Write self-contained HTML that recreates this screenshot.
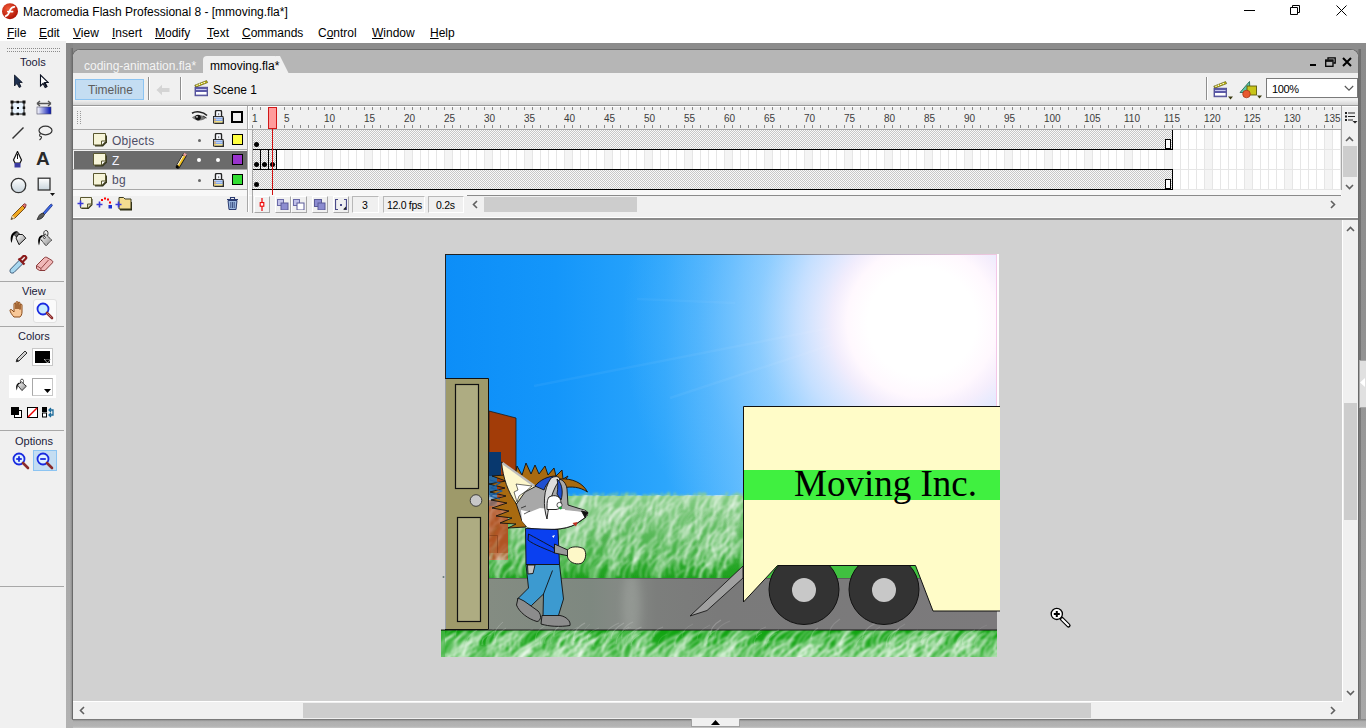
<!DOCTYPE html><html><head><meta charset="utf-8"><style>
*{margin:0;padding:0;box-sizing:border-box}
html,body{width:1366px;height:728px;overflow:hidden}
body{position:relative;background:#fff;font-family:"Liberation Sans",sans-serif;font-size:12px;color:#000}
.a{position:absolute}
.t{position:absolute;white-space:pre;line-height:14px}
.mi{position:absolute;top:26px;white-space:pre;line-height:14px}
.mi u{text-decoration:underline;text-underline-offset:1px}
.rn{position:absolute;top:113px;font-size:10px;line-height:11px;color:#3c3c3c;white-space:pre}
.tk{position:absolute;width:1px;height:3px;background:#8a8a8a}
.hatch{background-color:#fafafa;background-image:repeating-conic-gradient(#c8c8c8 0 25%,transparent 0 50%);background-size:2px 2px}
.sunk{position:absolute;border-top:1px solid #a0a0a0;border-left:1px solid #a0a0a0;border-right:1px solid #fff;border-bottom:1px solid #fff}
.btn{position:absolute;border-top:1px solid #fff;border-left:1px solid #fff;border-right:1px solid #a0a0a0;border-bottom:1px solid #a0a0a0}
</style></head><body>
<svg class="a" style="left:1px;top:2px" width="18" height="18" viewBox="0 0 18 18">
<defs><radialGradient id="fl" cx="40%" cy="35%" r="65%"><stop offset="0" stop-color="#f25b38"/><stop offset="1" stop-color="#b01405"/></radialGradient></defs>
<circle cx="9" cy="9.2" r="8" fill="url(#fl)"/>
<path d="M4.6 14.2 C7.6 13.6 8 10.5 9 8.2 C9.9 6.2 11 5 13.4 4.8 M6.8 9.6 L11.6 9.6" stroke="#fff" stroke-width="1.7" fill="none" stroke-linecap="round"/>
</svg>
<div class="t" style="left:23px;top:5px">Macromedia Flash Professional 8 - [mmoving.fla*]</div>
<div class="a" style="left:1244px;top:10px;width:11px;height:1px;background:#000"></div>
<svg class="a" style="left:1289px;top:4px" width="12" height="12"><path d="M3.5 3.5V1.5H10.5V8.5H8.5M1.5 3.5H8.5V10.5H1.5Z" stroke="#000" fill="none"/></svg>
<svg class="a" style="left:1336px;top:5px" width="11" height="11"><path d="M0.5 0.5L10.5 10.5M10.5 0.5L0.5 10.5" stroke="#000" stroke-width="1"/></svg>
<div class="mi" style="left:7px"><u>F</u>ile</div>
<div class="mi" style="left:39px"><u>E</u>dit</div>
<div class="mi" style="left:73px"><u>V</u>iew</div>
<div class="mi" style="left:112px"><u>I</u>nsert</div>
<div class="mi" style="left:155px"><u>M</u>odify</div>
<div class="mi" style="left:207px"><u>T</u>ext</div>
<div class="mi" style="left:242px"><u>C</u>ommands</div>
<div class="mi" style="left:318px">C<u>o</u>ntrol</div>
<div class="mi" style="left:372px"><u>W</u>indow</div>
<div class="mi" style="left:430px"><u>H</u>elp</div>
<div class="a" style="left:0;top:41px;width:66px;height:687px;background:#f0f0f0"></div>
<div class="a" style="left:7px;top:48px;width:54px;height:1px;background:repeating-linear-gradient(90deg,#8a8a8a 0 1px,transparent 1px 2px)"></div>
<div class="a" style="left:7px;top:51px;width:54px;height:1px;background:repeating-linear-gradient(90deg,#8a8a8a 0 1px,transparent 1px 2px)"></div>
<div class="t" style="left:20px;top:56px;font-size:11px;line-height:12px;color:#1a1a3a">Tools</div>
<svg class="a" style="left:13px;top:74px" width="10" height="15"><path d="M1.5 1V12L4 9.5L6.2 13.5L8 12.6L6 8.5H9.3Z" fill="#1e3050" stroke="#0a1020" stroke-width="0.8"/></svg>
<svg class="a" style="left:39px;top:74px" width="10" height="15"><path d="M1.5 1V12L4 9.5L6.2 13.5L8 12.6L6 8.5H9.3Z" fill="#fff" stroke="#0a1020" stroke-width="1.1"/><path d="M5 8.5L7.5 13" stroke="#0a1020" stroke-width="1.6"/></svg>
<svg class="a" style="left:10px;top:100px" width="16" height="16"><rect x="2" y="2" width="12" height="12" fill="#e8f4ff" stroke="#111" stroke-width="1"/>
<rect x="0.5" y="0.5" width="3" height="3" fill="#111"/><rect x="12.5" y="0.5" width="3" height="3" fill="#111"/><rect x="0.5" y="12.5" width="3" height="3" fill="#111"/><rect x="12.5" y="12.5" width="3" height="3" fill="#111"/>
<rect x="6.5" y="0.8" width="2.5" height="2.5" fill="#111"/><rect x="6.5" y="12.7" width="2.5" height="2.5" fill="#111"/><rect x="0.8" y="6.5" width="2.5" height="2.5" fill="#111"/><rect x="12.7" y="6.5" width="2.5" height="2.5" fill="#111"/>
<rect x="7" y="7" width="2" height="2" fill="#111"/></svg>
<svg class="a" style="left:36px;top:100px" width="16" height="15"><defs><linearGradient id="gt" x1="0" x2="1"><stop offset="0" stop-color="#fff"/><stop offset="1" stop-color="#0010b0"/></linearGradient></defs>
<path d="M1 3.5H15M1 3.5L4 1M1 3.5L4 6M15 3.5L12 1M15 3.5L12 6" stroke="#555" stroke-width="1.4" fill="none"/>
<rect x="1" y="7" width="14" height="7" fill="url(#gt)" stroke="#4a4a6a" stroke-width="0.6"/></svg>
<svg class="a" style="left:11px;top:126px" width="14" height="14"><path d="M1.5 12.5L12.5 1.5" stroke="#333" stroke-width="1.4"/></svg>
<svg class="a" style="left:36px;top:125px" width="17" height="16"><ellipse cx="9.5" cy="5.5" rx="6.5" ry="4.3" stroke="#333" stroke-width="1.2" fill="none"/><path d="M4.5 8.5C3 10 3.5 11.5 5 11.5C6 11.5 5.5 13.5 3.5 15" stroke="#333" stroke-width="1.1" fill="none"/></svg>
<svg class="a" style="left:12px;top:151px" width="11" height="18"><path d="M5.5 0.5L9.5 9L8 12H3L1.5 9Z" fill="#fff" stroke="#111" stroke-width="1.2"/><path d="M5.5 3V8" stroke="#111"/><rect x="2.5" y="12" width="6" height="4.5" fill="#3a3aa0"/></svg>
<div class="a" style="left:36px;top:149px;font:bold 19px/20px 'Liberation Sans',sans-serif;color:#2a2a2a">A</div>
<svg class="a" style="left:10px;top:177px" width="17" height="17"><defs><linearGradient id="ov" x1="0" y1="0" x2="0" y2="1"><stop offset="0" stop-color="#fff"/><stop offset="1" stop-color="#c8d4dc"/></linearGradient></defs><circle cx="8.5" cy="8.5" r="7.2" fill="url(#ov)" stroke="#333" stroke-width="1.3"/></svg>
<svg class="a" style="left:37px;top:177px" width="19" height="21"><rect x="1.2" y="1.2" width="11.8" height="11.8" fill="url(#ov)" stroke="#333" stroke-width="1.3"/><path d="M13 16H18L15.5 19Z" fill="#111"/></svg>
<svg class="a" style="left:9px;top:202px" width="19" height="19"><path d="M3.5 13.5L13.5 3.5L16 6L6 16L2 17.5Z" fill="#f0a820" stroke="#6a4010" stroke-width="0.9"/>
<path d="M13.5 3.5L15 2C16 1.2 17.5 2.5 17 3.5L16 6Z" fill="#e87878" stroke="#6a2020" stroke-width="0.8"/><path d="M2 17.5L3.5 13.5L6 16Z" fill="#f0d8a8"/><path d="M2 17.5L2.8 15.5L4 16.6Z" fill="#222"/></svg>
<svg class="a" style="left:35px;top:202px" width="19" height="19"><path d="M8 11L15.5 2.5C16.5 1.5 18 3 17 4L9.5 12.5Z" fill="#3a6ae8" stroke="#1a2a80" stroke-width="0.8"/>
<path d="M8 11L9.5 12.5L8 15C6 17.5 3 17.5 2 17.5C3 16 3.5 13.5 5.5 12Z" fill="#5a5a5a" stroke="#222" stroke-width="0.8"/></svg>
<svg class="a" style="left:6px;top:226px" width="50" height="24" viewBox="6 226 50 24"><defs><linearGradient id="btl" x1="0" y1="0" x2="1" y2="1"><stop offset="0" stop-color="#fff"/><stop offset="1" stop-color="#8a8a8a"/></linearGradient></defs>
<path d="M11.5 243C10 239 10.5 234 14 232C15.5 231 17 231 17.5 232.5L13.5 235.5C12.5 237.5 12.5 240 11.5 243Z" fill="#000"/>
<path d="M14 234.5L17 231.5L19.5 234L16.5 237Z" fill="#6a6a6a" stroke="#000" stroke-width="0.8"/>
<path d="M16 238L18.5 234.5H22.5L25.8 238.2L19 244.7Z" fill="url(#btl)" stroke="#000" stroke-width="0.9"/>
<path d="M39 245.5C37.5 241 38 237 41 235.5C42 235 43 235 43.5 236L40.5 238.5C40 240.5 39.8 243 39 245.5Z" fill="#000"/>
<path d="M45.2 234L51.8 240L45.9 245.8L40 238.4Z" fill="url(#btl)" stroke="#000" stroke-width="0.9" stroke-dasharray="1.2 0.6"/>
<path d="M44.5 236.5C43 233 44 230.5 46 230.5C48 230.5 48.5 233 47.5 236" stroke="#222" stroke-width="0.9" fill="none"/>
<circle cx="44.4" cy="237.5" r="1" fill="#fff" stroke="#000" stroke-width="0.7"/>
</svg>
<svg class="a" style="left:9px;top:255px" width="19" height="19"><path d="M11 4.5L14.5 8L5 17.5C4 18.3 2.5 18.3 1.5 17.5C0.8 16.5 0.8 15 1.7 14Z" fill="#a8d8f0" stroke="#2a4a6a" stroke-width="0.9"/>
<path d="M10.5 5L14.5 1C15.5 0 18 2.5 17 3.5L13 7.5M9.5 3.5L15.5 9.5" stroke="#8a1a1a" stroke-width="2.2" fill="none"/></svg>
<svg class="a" style="left:35px;top:256px" width="19" height="16"><path d="M1.5 9.5L9 2C10 1 11 1 12 1.5L17 4.5C18 5.2 18 6 17.3 7L10 14.5H4.5L1.5 12.5Z" fill="#f0b8b8" stroke="#8a3a3a" stroke-width="1"/>
<path d="M1.5 9.5L6 12.5L13.5 4" stroke="#8a3a3a" stroke-width="0.9" fill="none"/><path d="M6 12.5V14.5" stroke="#8a3a3a" stroke-width="0.9"/></svg>
<div class="a" style="left:0;top:281px;width:64px;height:1px;background:#a8a8a8"></div>
<div class="a" style="left:0;top:326px;width:64px;height:1px;background:#a8a8a8"></div>
<div class="a" style="left:0;top:430px;width:64px;height:1px;background:#a8a8a8"></div>
<div class="a" style="left:0;top:586px;width:64px;height:1px;background:#a8a8a8"></div>
<div class="t" style="left:22px;top:285px;font-size:11px;line-height:12px;color:#1a1a3a">View</div>
<svg class="a" style="left:9px;top:300px" width="19" height="19"><path d="M5 17C3 15 1.2 12 1 10.5C0.8 9.5 2 9 3 10L5 12V4C5 2.8 7 2.8 7 4V9V2.5C7 1.3 9 1.3 9 2.5V9V3C9 1.8 11 1.8 11 3V9.5V5C11 3.8 13 3.8 13 5V12C13 14.5 12 16 11 17Z" fill="#f8c898" stroke="#8a4a18" stroke-width="1"/></svg>
<div class="a" style="left:33px;top:299px;width:24px;height:24px;background:#fafafa;border:1px solid #e0e0e0;border-radius:3px"></div>
<svg class="a" style="left:36px;top:302px" width="18" height="18"><circle cx="7" cy="7" r="5.5" fill="#c8ecff" stroke="#1a2ae0" stroke-width="1.8"/><path d="M11 11L16 16" stroke="#8a2a2a" stroke-width="2.6" stroke-linecap="round"/><path d="M11.2 11.2L15.5 15.5" stroke="#d89090" stroke-width="0.8"/></svg>
<div class="t" style="left:18px;top:330px;font-size:11px;line-height:12px;color:#1a1a3a">Colors</div>
<svg class="a" style="left:15px;top:349px" width="14" height="14"><path d="M2 10L10 2L12 4L4 12L1.2 12.8Z" fill="#d0d0d0" stroke="#333" stroke-width="1"/><path d="M1.2 12.8L2 10L4 12Z" fill="#222"/></svg>
<div class="a" style="left:32px;top:348px;width:21px;height:18px;background:#fff;border:1px solid #c8c8c8"></div>
<div class="a" style="left:35px;top:351px;width:15px;height:12px;background:#000"></div>
<svg class="a" style="left:44px;top:359px" width="8" height="5"><path d="M0 0H7L3.5 4Z" fill="#000" stroke="#fff" stroke-width="0.6"/></svg>
<div class="a" style="left:9px;top:375px;width:47px;height:23px;background:#fff"></div>
<svg class="a" style="left:15px;top:378px" width="14" height="15" viewBox="37 229 18 20"><defs><linearGradient id="btl2" x1="0" y1="0" x2="1" y2="1"><stop offset="0" stop-color="#fff"/><stop offset="1" stop-color="#8a8a8a"/></linearGradient></defs>
<path d="M39 245.5C37.5 241 38 237 41 235.5C42 235 43 235 43.5 236L40.5 238.5C40 240.5 39.8 243 39 245.5Z" fill="#000"/>
<path d="M45.2 234L51.8 240L45.9 245.8L40 238.4Z" fill="url(#btl2)" stroke="#000" stroke-width="1"/>
<path d="M44.5 236.5C43 233 44 230.5 46 230.5C48 230.5 48.5 233 47.5 236" stroke="#222" stroke-width="1" fill="none"/></svg>
<div class="a" style="left:32px;top:378px;width:21px;height:18px;background:#fff;border:1px solid #c8c8c8;border-top-color:#a8a8a8;border-left-color:#a8a8a8"></div>
<svg class="a" style="left:44px;top:389px" width="8" height="5"><path d="M0 0H7L3.5 4Z" fill="#000"/></svg>
<svg class="a" style="left:11px;top:407px" width="12" height="11"><rect x="3.5" y="3.5" width="7" height="7" fill="#fff" stroke="#000"/><rect x="0.5" y="0.5" width="7" height="7" fill="#000" stroke="#000"/></svg>
<svg class="a" style="left:27px;top:407px" width="12" height="11"><rect x="0.5" y="0.5" width="10" height="10" fill="#fff" stroke="#000"/><path d="M1 10L10 1" stroke="#e00" stroke-width="1.5"/></svg>
<svg class="a" style="left:42px;top:407px" width="14" height="11"><rect x="0.5" y="0.5" width="4" height="4" fill="#000" stroke="#000"/><rect x="0.5" y="6" width="4" height="4" fill="#fff" stroke="#000"/><path d="M7 3H11V8H7M9 1L7 3L9 5M9 6L7 8L9 10" stroke="#1a6a9a" stroke-width="1.3" fill="none"/></svg>
<div class="t" style="left:15px;top:435px;font-size:11px;line-height:12px;color:#1a1a3a">Options</div>
<svg class="a" style="left:12px;top:452px" width="18" height="18"><circle cx="7" cy="7" r="5.5" fill="#dff2ff" stroke="#1a2ae0" stroke-width="1.8"/><path d="M11 11L16 16" stroke="#8a2a2a" stroke-width="2.6" stroke-linecap="round"/><path d="M4.2 7H9.8" stroke="#1a2ae0" stroke-width="1.8"/><path d="M7 4.2V9.8" stroke="#1a2ae0" stroke-width="1.8"/></svg>
<div class="a" style="left:33px;top:450px;width:24px;height:21px;background:#c4ddf2;border:1px solid #8cc4f2"></div>
<svg class="a" style="left:36px;top:452px" width="18" height="18"><circle cx="7" cy="7" r="5.5" fill="#dff2ff" stroke="#1a2ae0" stroke-width="1.8"/><path d="M11 11L16 16" stroke="#8a2a2a" stroke-width="2.6" stroke-linecap="round"/><path d="M4.2 7H9.8" stroke="#1a2ae0" stroke-width="1.8"/></svg>
<div class="a" style="left:66px;top:43px;width:1300px;height:685px;background:#8c8c8c"></div>
<div class="a" style="left:1359px;top:49px;width:7px;height:679px;background:linear-gradient(#8a8a8a,#909090 40%,#a8a8a8)"></div>
<div class="a" style="left:1359px;top:49px;width:2px;height:679px;background:rgba(0,0,0,0.2)"></div>
<div class="a" style="left:66px;top:719px;width:1300px;height:9px;background:linear-gradient(#808080,#b0b0b0 30%,#b4b4b4 80%,#c8c8c8)"></div>
<div class="a" style="left:66px;top:43px;width:7px;height:685px;background:linear-gradient(#888,#9a9a9a 40%,#b2b2b2)"></div>
<div class="a" style="left:70px;top:48px;width:3px;height:671px;background:linear-gradient(90deg,rgba(0,0,0,0),rgba(0,0,0,0.25))"></div>
<div class="a" style="left:72px;top:719px;width:1287px;height:1px;background:#7a7a7a"></div>
<div class="a" style="left:1358px;top:49px;width:1px;height:670px;background:#7a7a7a"></div>
<div class="a" style="left:72px;top:49px;width:1287px;height:670px;background:#f0f0f0;border-radius:8px 8px 0 0;border:1px solid #6a6a6a;border-bottom:none;overflow:hidden">
<div class="a" style="left:0;top:0;width:1285px;height:23px;background:#b6b6b6"></div>
</div>
<div class="t" style="left:84px;top:59px;color:#f4f4f4">coding-animation.fla*</div>
<div class="a" style="left:203px;top:56px;width:78px;height:18px;background:#f0f0f0;border-radius:4px 6px 0 0"></div>
<svg class="a" style="left:276px;top:56px" width="14" height="18"><path d="M0 0 L4 0 L13 18 L0 18Z" fill="#f0f0f0"/></svg>
<div class="t" style="left:210px;top:59px">mmoving.fla*</div>
<div class="a" style="left:1310px;top:64px;width:6px;height:2px;background:#000"></div>
<svg class="a" style="left:1325px;top:57px" width="11" height="10"><path d="M3 2.5V0.8H10.2V6H8.5" stroke="#000" stroke-width="1.3" fill="none"/><rect x="0.7" y="3" width="7.3" height="6.3" stroke="#000" stroke-width="1.3" fill="none"/><rect x="1" y="3.3" width="6.7" height="1.5" fill="#000"/></svg>
<svg class="a" style="left:1342px;top:57px" width="10" height="10"><path d="M1 1L9 9M9 1L1 9" stroke="#000" stroke-width="2"/></svg>
<div class="a" style="left:75px;top:79px;width:69px;height:21px;background:#c4ddf2;border:1px solid #8cc4f2"></div>
<div class="t" style="left:88px;top:83px;color:#5c5c5c">Timeline</div>
<div class="a" style="left:148px;top:77px;width:1px;height:24px;background:#8e8e8e"></div>
<div class="a" style="left:149px;top:77px;width:1px;height:24px;background:#fff"></div>
<div class="a" style="left:180px;top:77px;width:1px;height:24px;background:#8e8e8e"></div>
<div class="a" style="left:181px;top:77px;width:1px;height:24px;background:#fff"></div>
<div class="a" style="left:1206px;top:77px;width:1px;height:24px;background:#8e8e8e"></div>
<div class="a" style="left:1207px;top:77px;width:1px;height:24px;background:#fff"></div>
<svg class="a" style="left:156px;top:84px" width="15" height="12"><path d="M0.5 6L6 0.8V4H13.5V8H6V11.2Z" fill="#d4d4d4"/></svg>
<svg class="a" style="left:194px;top:80px" width="16" height="18"><g><path d="M0.8 5.2 L12.6 0.6 L13.6 2.6 L1.8 7.2Z" fill="#c8c010" stroke="#5a5410" stroke-width="0.7"/>
<circle cx="3" cy="5.2" r="0.7" fill="#fff"/><circle cx="5.4" cy="4.3" r="0.7" fill="#fff"/><circle cx="7.8" cy="3.4" r="0.7" fill="#fff"/><circle cx="10.2" cy="2.5" r="0.7" fill="#fff"/>
<rect x="1" y="7.2" width="12.6" height="8.6" fill="#5c5aa8" stroke="#4a4890" stroke-width="0.8"/>
<rect x="2" y="9" width="10.6" height="1" fill="#c8c8f0"/><rect x="2" y="12" width="10.6" height="2.6" fill="#fff"/></g></svg>
<div class="t" style="left:213px;top:83px">Scene 1</div>
<svg class="a" style="left:1213px;top:81px" width="22" height="19"><g><path d="M0.8 5.2 L12.6 0.6 L13.6 2.6 L1.8 7.2Z" fill="#c8c010" stroke="#5a5410" stroke-width="0.7"/>
<circle cx="3" cy="5.2" r="0.7" fill="#fff"/><circle cx="5.4" cy="4.3" r="0.7" fill="#fff"/><circle cx="7.8" cy="3.4" r="0.7" fill="#fff"/><circle cx="10.2" cy="2.5" r="0.7" fill="#fff"/>
<rect x="1" y="7.2" width="12.6" height="8.6" fill="#5c5aa8" stroke="#4a4890" stroke-width="0.8"/>
<rect x="2" y="9" width="10.6" height="1" fill="#c8c8f0"/><rect x="2" y="12" width="10.6" height="2.6" fill="#fff"/></g><path d="M15 15.5h5l-2.5 3z" fill="#3a3a10"/></svg>
<svg class="a" style="left:1239px;top:80px" width="25" height="20">
<path d="M1 12.5 L10.5 1.5 L11 12.5Z" fill="#5ec9a8" stroke="#2a6a5a" stroke-width="0.9"/>
<rect x="8" y="6" width="9.5" height="9" fill="#c8c418" stroke="#5a5a10" stroke-width="0.9"/>
<circle cx="7.5" cy="14" r="3.8" fill="#e85a30" stroke="#a03010" stroke-width="0.7"/>
<path d="M18 15.5h5l-2.5 3z" fill="#3a3a10"/></svg>
<div class="a" style="left:1266px;top:78px;width:92px;height:20px;background:#fff;border:1px solid #7a7a7a"></div>
<div class="t" style="left:1272px;top:82px;font-size:11px;letter-spacing:-0.4px">100%</div>
<svg class="a" style="left:1344px;top:85px" width="10" height="7"><path d="M0.8 1L5 5.2L9.2 1" stroke="#555" stroke-width="1.1" fill="none"/></svg>
<div class="a" style="left:73px;top:100px;width:1285px;height:5px;background:linear-gradient(#f0f0f0,#d4d4d4)"></div>
<div class="a" style="left:73px;top:105px;width:1285px;height:1px;background:#9a9a9a"></div>
<div class="a" style="left:73px;top:107px;width:1285px;height:22px;background:#f0f0f0"></div>
<div class="a" style="left:73px;top:106px;width:1285px;height:1px;background:#fff"></div>
<div class="a" style="left:77px;top:111px;width:1px;height:1px;background:#9a9a9a"></div><div class="a" style="left:80px;top:111px;width:1px;height:1px;background:#9a9a9a"></div>
<div class="a" style="left:77px;top:113px;width:1px;height:1px;background:#9a9a9a"></div><div class="a" style="left:80px;top:113px;width:1px;height:1px;background:#9a9a9a"></div>
<div class="a" style="left:77px;top:115px;width:1px;height:1px;background:#9a9a9a"></div><div class="a" style="left:80px;top:115px;width:1px;height:1px;background:#9a9a9a"></div>
<div class="a" style="left:77px;top:117px;width:1px;height:1px;background:#9a9a9a"></div><div class="a" style="left:80px;top:117px;width:1px;height:1px;background:#9a9a9a"></div>
<div class="a" style="left:77px;top:119px;width:1px;height:1px;background:#9a9a9a"></div><div class="a" style="left:80px;top:119px;width:1px;height:1px;background:#9a9a9a"></div>
<div class="a" style="left:77px;top:121px;width:1px;height:1px;background:#9a9a9a"></div><div class="a" style="left:80px;top:121px;width:1px;height:1px;background:#9a9a9a"></div>
<div class="a" style="left:77px;top:123px;width:1px;height:1px;background:#9a9a9a"></div><div class="a" style="left:80px;top:123px;width:1px;height:1px;background:#9a9a9a"></div>
<svg class="a" style="left:191px;top:111px" width="17" height="12" viewBox="0 0 17 12">
<path d="M1 2.2C5 -0.2 12 0.5 16 4.5" stroke="#222" stroke-width="1.6" fill="none"/>
<path d="M1 6.5C4 3 11 3 15.5 6.5C12 10.5 5 10.5 1 6.5Z" fill="#777"/>
<circle cx="7" cy="6.6" r="2.8" fill="#111"/><circle cx="6" cy="5.9" r="0.8" fill="#fff"/>
<path d="M12 5L15.5 7" stroke="#333" stroke-width="1"/>
</svg>
<svg class="a" style="left:213px;top:110px" width="12" height="15"><rect x="2.5" y="0.5" width="6" height="7" rx="1.2" fill="none" stroke="#222" stroke-width="1.4"/>
<rect x="3.6" y="1.6" width="3.8" height="5" fill="#f4f8ff"/>
<rect x="5" y="3.2" width="1.2" height="2" fill="#888"/>
<rect x="1.5" y="7.5" width="9.5" height="6.5" fill="#333"/>
<rect x="0.5" y="6.5" width="9.5" height="6.5" fill="#fff" stroke="#222" stroke-width="0.9"/>
<rect x="1" y="7.6" width="8.5" height="1.1" fill="#5a8ae0"/><rect x="1" y="9.6" width="8.5" height="1.1" fill="#5a8ae0"/><rect x="1" y="11.4" width="8.5" height="0.9" fill="#e8d040"/>
<rect x="1" y="8.7" width="2" height="0.9" fill="#f0a030"/><rect x="1" y="10.7" width="2" height="0.7" fill="#f0a030"/></svg>
<div class="a" style="left:231px;top:111px;width:12px;height:12px;border:2px solid #000;background:#f0f0f0"></div>
<div class="a" style="left:247px;top:106px;width:1px;height:88px;background:#a8a8a8"></div>
<div class="a" style="left:248px;top:106px;width:1px;height:88px;background:#fff"></div>
<div class="tk" style="left:252px;top:107px"></div><div class="tk" style="left:252px;top:125px"></div>
<div class="tk" style="left:260px;top:107px"></div><div class="tk" style="left:260px;top:125px"></div>
<div class="tk" style="left:268px;top:107px"></div><div class="tk" style="left:268px;top:125px"></div>
<div class="tk" style="left:276px;top:107px"></div><div class="tk" style="left:276px;top:125px"></div>
<div class="tk" style="left:284px;top:107px"></div><div class="tk" style="left:284px;top:125px"></div>
<div class="tk" style="left:292px;top:107px"></div><div class="tk" style="left:292px;top:125px"></div>
<div class="tk" style="left:300px;top:107px"></div><div class="tk" style="left:300px;top:125px"></div>
<div class="tk" style="left:308px;top:107px"></div><div class="tk" style="left:308px;top:125px"></div>
<div class="tk" style="left:316px;top:107px"></div><div class="tk" style="left:316px;top:125px"></div>
<div class="tk" style="left:324px;top:107px"></div><div class="tk" style="left:324px;top:125px"></div>
<div class="tk" style="left:332px;top:107px"></div><div class="tk" style="left:332px;top:125px"></div>
<div class="tk" style="left:340px;top:107px"></div><div class="tk" style="left:340px;top:125px"></div>
<div class="tk" style="left:348px;top:107px"></div><div class="tk" style="left:348px;top:125px"></div>
<div class="tk" style="left:356px;top:107px"></div><div class="tk" style="left:356px;top:125px"></div>
<div class="tk" style="left:364px;top:107px"></div><div class="tk" style="left:364px;top:125px"></div>
<div class="tk" style="left:372px;top:107px"></div><div class="tk" style="left:372px;top:125px"></div>
<div class="tk" style="left:380px;top:107px"></div><div class="tk" style="left:380px;top:125px"></div>
<div class="tk" style="left:388px;top:107px"></div><div class="tk" style="left:388px;top:125px"></div>
<div class="tk" style="left:396px;top:107px"></div><div class="tk" style="left:396px;top:125px"></div>
<div class="tk" style="left:404px;top:107px"></div><div class="tk" style="left:404px;top:125px"></div>
<div class="tk" style="left:412px;top:107px"></div><div class="tk" style="left:412px;top:125px"></div>
<div class="tk" style="left:420px;top:107px"></div><div class="tk" style="left:420px;top:125px"></div>
<div class="tk" style="left:428px;top:107px"></div><div class="tk" style="left:428px;top:125px"></div>
<div class="tk" style="left:436px;top:107px"></div><div class="tk" style="left:436px;top:125px"></div>
<div class="tk" style="left:444px;top:107px"></div><div class="tk" style="left:444px;top:125px"></div>
<div class="tk" style="left:452px;top:107px"></div><div class="tk" style="left:452px;top:125px"></div>
<div class="tk" style="left:460px;top:107px"></div><div class="tk" style="left:460px;top:125px"></div>
<div class="tk" style="left:468px;top:107px"></div><div class="tk" style="left:468px;top:125px"></div>
<div class="tk" style="left:476px;top:107px"></div><div class="tk" style="left:476px;top:125px"></div>
<div class="tk" style="left:484px;top:107px"></div><div class="tk" style="left:484px;top:125px"></div>
<div class="tk" style="left:492px;top:107px"></div><div class="tk" style="left:492px;top:125px"></div>
<div class="tk" style="left:500px;top:107px"></div><div class="tk" style="left:500px;top:125px"></div>
<div class="tk" style="left:508px;top:107px"></div><div class="tk" style="left:508px;top:125px"></div>
<div class="tk" style="left:516px;top:107px"></div><div class="tk" style="left:516px;top:125px"></div>
<div class="tk" style="left:524px;top:107px"></div><div class="tk" style="left:524px;top:125px"></div>
<div class="tk" style="left:532px;top:107px"></div><div class="tk" style="left:532px;top:125px"></div>
<div class="tk" style="left:540px;top:107px"></div><div class="tk" style="left:540px;top:125px"></div>
<div class="tk" style="left:548px;top:107px"></div><div class="tk" style="left:548px;top:125px"></div>
<div class="tk" style="left:556px;top:107px"></div><div class="tk" style="left:556px;top:125px"></div>
<div class="tk" style="left:564px;top:107px"></div><div class="tk" style="left:564px;top:125px"></div>
<div class="tk" style="left:572px;top:107px"></div><div class="tk" style="left:572px;top:125px"></div>
<div class="tk" style="left:580px;top:107px"></div><div class="tk" style="left:580px;top:125px"></div>
<div class="tk" style="left:588px;top:107px"></div><div class="tk" style="left:588px;top:125px"></div>
<div class="tk" style="left:596px;top:107px"></div><div class="tk" style="left:596px;top:125px"></div>
<div class="tk" style="left:604px;top:107px"></div><div class="tk" style="left:604px;top:125px"></div>
<div class="tk" style="left:612px;top:107px"></div><div class="tk" style="left:612px;top:125px"></div>
<div class="tk" style="left:620px;top:107px"></div><div class="tk" style="left:620px;top:125px"></div>
<div class="tk" style="left:628px;top:107px"></div><div class="tk" style="left:628px;top:125px"></div>
<div class="tk" style="left:636px;top:107px"></div><div class="tk" style="left:636px;top:125px"></div>
<div class="tk" style="left:644px;top:107px"></div><div class="tk" style="left:644px;top:125px"></div>
<div class="tk" style="left:652px;top:107px"></div><div class="tk" style="left:652px;top:125px"></div>
<div class="tk" style="left:660px;top:107px"></div><div class="tk" style="left:660px;top:125px"></div>
<div class="tk" style="left:668px;top:107px"></div><div class="tk" style="left:668px;top:125px"></div>
<div class="tk" style="left:676px;top:107px"></div><div class="tk" style="left:676px;top:125px"></div>
<div class="tk" style="left:684px;top:107px"></div><div class="tk" style="left:684px;top:125px"></div>
<div class="tk" style="left:692px;top:107px"></div><div class="tk" style="left:692px;top:125px"></div>
<div class="tk" style="left:700px;top:107px"></div><div class="tk" style="left:700px;top:125px"></div>
<div class="tk" style="left:708px;top:107px"></div><div class="tk" style="left:708px;top:125px"></div>
<div class="tk" style="left:716px;top:107px"></div><div class="tk" style="left:716px;top:125px"></div>
<div class="tk" style="left:724px;top:107px"></div><div class="tk" style="left:724px;top:125px"></div>
<div class="tk" style="left:732px;top:107px"></div><div class="tk" style="left:732px;top:125px"></div>
<div class="tk" style="left:740px;top:107px"></div><div class="tk" style="left:740px;top:125px"></div>
<div class="tk" style="left:748px;top:107px"></div><div class="tk" style="left:748px;top:125px"></div>
<div class="tk" style="left:756px;top:107px"></div><div class="tk" style="left:756px;top:125px"></div>
<div class="tk" style="left:764px;top:107px"></div><div class="tk" style="left:764px;top:125px"></div>
<div class="tk" style="left:772px;top:107px"></div><div class="tk" style="left:772px;top:125px"></div>
<div class="tk" style="left:780px;top:107px"></div><div class="tk" style="left:780px;top:125px"></div>
<div class="tk" style="left:788px;top:107px"></div><div class="tk" style="left:788px;top:125px"></div>
<div class="tk" style="left:796px;top:107px"></div><div class="tk" style="left:796px;top:125px"></div>
<div class="tk" style="left:804px;top:107px"></div><div class="tk" style="left:804px;top:125px"></div>
<div class="tk" style="left:812px;top:107px"></div><div class="tk" style="left:812px;top:125px"></div>
<div class="tk" style="left:820px;top:107px"></div><div class="tk" style="left:820px;top:125px"></div>
<div class="tk" style="left:828px;top:107px"></div><div class="tk" style="left:828px;top:125px"></div>
<div class="tk" style="left:836px;top:107px"></div><div class="tk" style="left:836px;top:125px"></div>
<div class="tk" style="left:844px;top:107px"></div><div class="tk" style="left:844px;top:125px"></div>
<div class="tk" style="left:852px;top:107px"></div><div class="tk" style="left:852px;top:125px"></div>
<div class="tk" style="left:860px;top:107px"></div><div class="tk" style="left:860px;top:125px"></div>
<div class="tk" style="left:868px;top:107px"></div><div class="tk" style="left:868px;top:125px"></div>
<div class="tk" style="left:876px;top:107px"></div><div class="tk" style="left:876px;top:125px"></div>
<div class="tk" style="left:884px;top:107px"></div><div class="tk" style="left:884px;top:125px"></div>
<div class="tk" style="left:892px;top:107px"></div><div class="tk" style="left:892px;top:125px"></div>
<div class="tk" style="left:900px;top:107px"></div><div class="tk" style="left:900px;top:125px"></div>
<div class="tk" style="left:908px;top:107px"></div><div class="tk" style="left:908px;top:125px"></div>
<div class="tk" style="left:916px;top:107px"></div><div class="tk" style="left:916px;top:125px"></div>
<div class="tk" style="left:924px;top:107px"></div><div class="tk" style="left:924px;top:125px"></div>
<div class="tk" style="left:932px;top:107px"></div><div class="tk" style="left:932px;top:125px"></div>
<div class="tk" style="left:940px;top:107px"></div><div class="tk" style="left:940px;top:125px"></div>
<div class="tk" style="left:948px;top:107px"></div><div class="tk" style="left:948px;top:125px"></div>
<div class="tk" style="left:956px;top:107px"></div><div class="tk" style="left:956px;top:125px"></div>
<div class="tk" style="left:964px;top:107px"></div><div class="tk" style="left:964px;top:125px"></div>
<div class="tk" style="left:972px;top:107px"></div><div class="tk" style="left:972px;top:125px"></div>
<div class="tk" style="left:980px;top:107px"></div><div class="tk" style="left:980px;top:125px"></div>
<div class="tk" style="left:988px;top:107px"></div><div class="tk" style="left:988px;top:125px"></div>
<div class="tk" style="left:996px;top:107px"></div><div class="tk" style="left:996px;top:125px"></div>
<div class="tk" style="left:1004px;top:107px"></div><div class="tk" style="left:1004px;top:125px"></div>
<div class="tk" style="left:1012px;top:107px"></div><div class="tk" style="left:1012px;top:125px"></div>
<div class="tk" style="left:1020px;top:107px"></div><div class="tk" style="left:1020px;top:125px"></div>
<div class="tk" style="left:1028px;top:107px"></div><div class="tk" style="left:1028px;top:125px"></div>
<div class="tk" style="left:1036px;top:107px"></div><div class="tk" style="left:1036px;top:125px"></div>
<div class="tk" style="left:1044px;top:107px"></div><div class="tk" style="left:1044px;top:125px"></div>
<div class="tk" style="left:1052px;top:107px"></div><div class="tk" style="left:1052px;top:125px"></div>
<div class="tk" style="left:1060px;top:107px"></div><div class="tk" style="left:1060px;top:125px"></div>
<div class="tk" style="left:1068px;top:107px"></div><div class="tk" style="left:1068px;top:125px"></div>
<div class="tk" style="left:1076px;top:107px"></div><div class="tk" style="left:1076px;top:125px"></div>
<div class="tk" style="left:1084px;top:107px"></div><div class="tk" style="left:1084px;top:125px"></div>
<div class="tk" style="left:1092px;top:107px"></div><div class="tk" style="left:1092px;top:125px"></div>
<div class="tk" style="left:1100px;top:107px"></div><div class="tk" style="left:1100px;top:125px"></div>
<div class="tk" style="left:1108px;top:107px"></div><div class="tk" style="left:1108px;top:125px"></div>
<div class="tk" style="left:1116px;top:107px"></div><div class="tk" style="left:1116px;top:125px"></div>
<div class="tk" style="left:1124px;top:107px"></div><div class="tk" style="left:1124px;top:125px"></div>
<div class="tk" style="left:1132px;top:107px"></div><div class="tk" style="left:1132px;top:125px"></div>
<div class="tk" style="left:1140px;top:107px"></div><div class="tk" style="left:1140px;top:125px"></div>
<div class="tk" style="left:1148px;top:107px"></div><div class="tk" style="left:1148px;top:125px"></div>
<div class="tk" style="left:1156px;top:107px"></div><div class="tk" style="left:1156px;top:125px"></div>
<div class="tk" style="left:1164px;top:107px"></div><div class="tk" style="left:1164px;top:125px"></div>
<div class="tk" style="left:1172px;top:107px"></div><div class="tk" style="left:1172px;top:125px"></div>
<div class="tk" style="left:1180px;top:107px"></div><div class="tk" style="left:1180px;top:125px"></div>
<div class="tk" style="left:1188px;top:107px"></div><div class="tk" style="left:1188px;top:125px"></div>
<div class="tk" style="left:1196px;top:107px"></div><div class="tk" style="left:1196px;top:125px"></div>
<div class="tk" style="left:1204px;top:107px"></div><div class="tk" style="left:1204px;top:125px"></div>
<div class="tk" style="left:1212px;top:107px"></div><div class="tk" style="left:1212px;top:125px"></div>
<div class="tk" style="left:1220px;top:107px"></div><div class="tk" style="left:1220px;top:125px"></div>
<div class="tk" style="left:1228px;top:107px"></div><div class="tk" style="left:1228px;top:125px"></div>
<div class="tk" style="left:1236px;top:107px"></div><div class="tk" style="left:1236px;top:125px"></div>
<div class="tk" style="left:1244px;top:107px"></div><div class="tk" style="left:1244px;top:125px"></div>
<div class="tk" style="left:1252px;top:107px"></div><div class="tk" style="left:1252px;top:125px"></div>
<div class="tk" style="left:1260px;top:107px"></div><div class="tk" style="left:1260px;top:125px"></div>
<div class="tk" style="left:1268px;top:107px"></div><div class="tk" style="left:1268px;top:125px"></div>
<div class="tk" style="left:1276px;top:107px"></div><div class="tk" style="left:1276px;top:125px"></div>
<div class="tk" style="left:1284px;top:107px"></div><div class="tk" style="left:1284px;top:125px"></div>
<div class="tk" style="left:1292px;top:107px"></div><div class="tk" style="left:1292px;top:125px"></div>
<div class="tk" style="left:1300px;top:107px"></div><div class="tk" style="left:1300px;top:125px"></div>
<div class="tk" style="left:1308px;top:107px"></div><div class="tk" style="left:1308px;top:125px"></div>
<div class="tk" style="left:1316px;top:107px"></div><div class="tk" style="left:1316px;top:125px"></div>
<div class="tk" style="left:1324px;top:107px"></div><div class="tk" style="left:1324px;top:125px"></div>
<div class="tk" style="left:1332px;top:107px"></div><div class="tk" style="left:1332px;top:125px"></div>
<div class="rn" style="left:252px">1</div>
<div class="rn" style="left:284px">5</div>
<div class="rn" style="left:324px">10</div>
<div class="rn" style="left:364px">15</div>
<div class="rn" style="left:404px">20</div>
<div class="rn" style="left:444px">25</div>
<div class="rn" style="left:484px">30</div>
<div class="rn" style="left:524px">35</div>
<div class="rn" style="left:564px">40</div>
<div class="rn" style="left:604px">45</div>
<div class="rn" style="left:644px">50</div>
<div class="rn" style="left:684px">55</div>
<div class="rn" style="left:724px">60</div>
<div class="rn" style="left:764px">65</div>
<div class="rn" style="left:804px">70</div>
<div class="rn" style="left:844px">75</div>
<div class="rn" style="left:884px">80</div>
<div class="rn" style="left:924px">85</div>
<div class="rn" style="left:964px">90</div>
<div class="rn" style="left:1004px">95</div>
<div class="rn" style="left:1044px">100</div>
<div class="rn" style="left:1084px">105</div>
<div class="rn" style="left:1124px">110</div>
<div class="rn" style="left:1164px">115</div>
<div class="rn" style="left:1204px">120</div>
<div class="rn" style="left:1244px">125</div>
<div class="rn" style="left:1284px">130</div>
<div class="rn" style="left:1324px">135</div>
<div class="a" style="left:73px;top:129px;width:1269px;height:1px;background:#a8a8a8"></div>
<div class="a" style="left:1341px;top:106px;width:1px;height:88px;background:#a8a8a8"></div>
<svg class="a" style="left:1344px;top:111px" width="14" height="13">
<rect x="1" y="1" width="2" height="2" fill="#222"/><rect x="4" y="1.5" width="7" height="1" fill="#222"/>
<rect x="1" y="4.5" width="2" height="2" fill="#222"/><rect x="4" y="5" width="7" height="1" fill="#222"/>
<rect x="1" y="8" width="2" height="2" fill="#222"/><rect x="4" y="8.5" width="5" height="1" fill="#222"/>
<path d="M8.5 10h5l-2.5 2.5z" fill="#222"/></svg>
<div class="a" style="left:73px;top:149px;width:174px;height:1px;background:#a8a8a8"></div>
<svg class="a" style="left:93px;top:133px" width="15" height="14"><path d="M1 1.5H13V8.5L9 12.5H1Z" fill="#3a3a20" transform="translate(1,1)"/>
<path d="M0.5 0.5H12.5V8L8.5 12H0.5Z" fill="#f6f4d8" stroke="#5a5830" stroke-width="1"/>
<path d="M8.5 12V8H12.5" fill="#fff" stroke="#5a5830" stroke-width="1"/></svg>
<div class="t" style="left:112px;top:134px;color:#4e4e66;letter-spacing:0.25px">Objects</div>
<div class="a" style="left:198px;top:139px;width:3px;height:3px;border-radius:50%;background:#666"></div>
<svg class="a" style="left:213px;top:133px" width="11" height="14"><rect x="2.5" y="0.5" width="6" height="7" rx="1.2" fill="none" stroke="#222" stroke-width="1.4"/>
<rect x="3.6" y="1.6" width="3.8" height="5" fill="#f4f8ff"/>
<rect x="5" y="3.2" width="1.2" height="2" fill="#888"/>
<rect x="1.5" y="7.5" width="9.5" height="6.5" fill="#333"/>
<rect x="0.5" y="6.5" width="9.5" height="6.5" fill="#fff" stroke="#222" stroke-width="0.9"/>
<rect x="1" y="7.6" width="8.5" height="1.1" fill="#5a8ae0"/><rect x="1" y="9.6" width="8.5" height="1.1" fill="#5a8ae0"/><rect x="1" y="11.4" width="8.5" height="0.9" fill="#e8d040"/>
<rect x="1" y="8.7" width="2" height="0.9" fill="#f0a030"/><rect x="1" y="10.7" width="2" height="0.7" fill="#f0a030"/></svg>
<div class="a" style="left:232px;top:134px;width:11px;height:11px;border:1px solid #000;background:#ffff40"></div>
<div class="a" style="left:74px;top:151px;width:173px;height:19px;background:#6b6b6b"></div>
<div class="a" style="left:73px;top:169px;width:174px;height:1px;background:#a8a8a8"></div>
<svg class="a" style="left:93px;top:153px" width="15" height="14"><path d="M1 1.5H13V8.5L9 12.5H1Z" fill="#3a3a20" transform="translate(1,1)"/>
<path d="M0.5 0.5H12.5V8L8.5 12H0.5Z" fill="#f6f4d8" stroke="#5a5830" stroke-width="1"/>
<path d="M8.5 12V8H12.5" fill="#fff" stroke="#5a5830" stroke-width="1"/></svg>
<div class="t" style="left:112px;top:154px;color:#f4f4ff;letter-spacing:0.25px">Z</div>
<svg class="a" style="left:175px;top:152px" width="13" height="17" viewBox="0 0 13 17">
<path d="M3 14.5L9.5 3.5" stroke="#1a1a1a" stroke-width="4.4" stroke-linecap="round"/>
<path d="M3.2 14.2L9.4 3.8" stroke="#f0c020" stroke-width="2.6"/>
<path d="M2.6 13.2L8 4" stroke="#fff" stroke-width="0.9"/>
<path d="M9.3 3.8L10.6 1.6" stroke="#e8a0a0" stroke-width="3"/>
<path d="M1.5 16L3 13.5" stroke="#000" stroke-width="1.8"/>
</svg>
<div class="a" style="left:197px;top:158px;width:4px;height:4px;border-radius:50%;background:#fff"></div>
<div class="a" style="left:216px;top:158px;width:4px;height:4px;border-radius:50%;background:#fff"></div>
<div class="a" style="left:232px;top:154px;width:11px;height:11px;border:1px solid #000;background:#9933cc"></div>
<div class="a" style="left:73px;top:189px;width:174px;height:1px;background:#a8a8a8"></div>
<svg class="a" style="left:93px;top:173px" width="15" height="14"><path d="M1 1.5H13V8.5L9 12.5H1Z" fill="#3a3a20" transform="translate(1,1)"/>
<path d="M0.5 0.5H12.5V8L8.5 12H0.5Z" fill="#f6f4d8" stroke="#5a5830" stroke-width="1"/>
<path d="M8.5 12V8H12.5" fill="#fff" stroke="#5a5830" stroke-width="1"/></svg>
<div class="t" style="left:112px;top:173px;color:#4e4e66;letter-spacing:0.25px">bg</div>
<div class="a" style="left:198px;top:179px;width:3px;height:3px;border-radius:50%;background:#666"></div>
<svg class="a" style="left:213px;top:173px" width="11" height="14"><rect x="2.5" y="0.5" width="6" height="7" rx="1.2" fill="none" stroke="#222" stroke-width="1.4"/>
<rect x="3.6" y="1.6" width="3.8" height="5" fill="#f4f8ff"/>
<rect x="5" y="3.2" width="1.2" height="2" fill="#888"/>
<rect x="1.5" y="7.5" width="9.5" height="6.5" fill="#333"/>
<rect x="0.5" y="6.5" width="9.5" height="6.5" fill="#fff" stroke="#222" stroke-width="0.9"/>
<rect x="1" y="7.6" width="8.5" height="1.1" fill="#5a8ae0"/><rect x="1" y="9.6" width="8.5" height="1.1" fill="#5a8ae0"/><rect x="1" y="11.4" width="8.5" height="0.9" fill="#e8d040"/>
<rect x="1" y="8.7" width="2" height="0.9" fill="#f0a030"/><rect x="1" y="10.7" width="2" height="0.7" fill="#f0a030"/></svg>
<div class="a" style="left:232px;top:174px;width:11px;height:11px;border:1px solid #000;background:#33dd33"></div>
<div class="a" style="left:252px;top:130px;width:1089px;height:60px;background:#fff"></div>
<div class="a" style="left:260px;top:130px;width:1px;height:60px;background:#e6e6e6"></div>
<div class="a" style="left:268px;top:130px;width:1px;height:60px;background:#e6e6e6"></div>
<div class="a" style="left:276px;top:130px;width:1px;height:60px;background:#e6e6e6"></div>
<div class="a" style="left:284px;top:130px;width:1px;height:60px;background:#e6e6e6"></div>
<div class="a" style="left:285px;top:130px;width:8px;height:60px;background:#f4f4f4"></div>
<div class="a" style="left:292px;top:130px;width:1px;height:60px;background:#e6e6e6"></div>
<div class="a" style="left:300px;top:130px;width:1px;height:60px;background:#e6e6e6"></div>
<div class="a" style="left:308px;top:130px;width:1px;height:60px;background:#e6e6e6"></div>
<div class="a" style="left:316px;top:130px;width:1px;height:60px;background:#e6e6e6"></div>
<div class="a" style="left:324px;top:130px;width:1px;height:60px;background:#e6e6e6"></div>
<div class="a" style="left:325px;top:130px;width:8px;height:60px;background:#f4f4f4"></div>
<div class="a" style="left:332px;top:130px;width:1px;height:60px;background:#e6e6e6"></div>
<div class="a" style="left:340px;top:130px;width:1px;height:60px;background:#e6e6e6"></div>
<div class="a" style="left:348px;top:130px;width:1px;height:60px;background:#e6e6e6"></div>
<div class="a" style="left:356px;top:130px;width:1px;height:60px;background:#e6e6e6"></div>
<div class="a" style="left:364px;top:130px;width:1px;height:60px;background:#e6e6e6"></div>
<div class="a" style="left:365px;top:130px;width:8px;height:60px;background:#f4f4f4"></div>
<div class="a" style="left:372px;top:130px;width:1px;height:60px;background:#e6e6e6"></div>
<div class="a" style="left:380px;top:130px;width:1px;height:60px;background:#e6e6e6"></div>
<div class="a" style="left:388px;top:130px;width:1px;height:60px;background:#e6e6e6"></div>
<div class="a" style="left:396px;top:130px;width:1px;height:60px;background:#e6e6e6"></div>
<div class="a" style="left:404px;top:130px;width:1px;height:60px;background:#e6e6e6"></div>
<div class="a" style="left:405px;top:130px;width:8px;height:60px;background:#f4f4f4"></div>
<div class="a" style="left:412px;top:130px;width:1px;height:60px;background:#e6e6e6"></div>
<div class="a" style="left:420px;top:130px;width:1px;height:60px;background:#e6e6e6"></div>
<div class="a" style="left:428px;top:130px;width:1px;height:60px;background:#e6e6e6"></div>
<div class="a" style="left:436px;top:130px;width:1px;height:60px;background:#e6e6e6"></div>
<div class="a" style="left:444px;top:130px;width:1px;height:60px;background:#e6e6e6"></div>
<div class="a" style="left:445px;top:130px;width:8px;height:60px;background:#f4f4f4"></div>
<div class="a" style="left:452px;top:130px;width:1px;height:60px;background:#e6e6e6"></div>
<div class="a" style="left:460px;top:130px;width:1px;height:60px;background:#e6e6e6"></div>
<div class="a" style="left:468px;top:130px;width:1px;height:60px;background:#e6e6e6"></div>
<div class="a" style="left:476px;top:130px;width:1px;height:60px;background:#e6e6e6"></div>
<div class="a" style="left:484px;top:130px;width:1px;height:60px;background:#e6e6e6"></div>
<div class="a" style="left:485px;top:130px;width:8px;height:60px;background:#f4f4f4"></div>
<div class="a" style="left:492px;top:130px;width:1px;height:60px;background:#e6e6e6"></div>
<div class="a" style="left:500px;top:130px;width:1px;height:60px;background:#e6e6e6"></div>
<div class="a" style="left:508px;top:130px;width:1px;height:60px;background:#e6e6e6"></div>
<div class="a" style="left:516px;top:130px;width:1px;height:60px;background:#e6e6e6"></div>
<div class="a" style="left:524px;top:130px;width:1px;height:60px;background:#e6e6e6"></div>
<div class="a" style="left:525px;top:130px;width:8px;height:60px;background:#f4f4f4"></div>
<div class="a" style="left:532px;top:130px;width:1px;height:60px;background:#e6e6e6"></div>
<div class="a" style="left:540px;top:130px;width:1px;height:60px;background:#e6e6e6"></div>
<div class="a" style="left:548px;top:130px;width:1px;height:60px;background:#e6e6e6"></div>
<div class="a" style="left:556px;top:130px;width:1px;height:60px;background:#e6e6e6"></div>
<div class="a" style="left:564px;top:130px;width:1px;height:60px;background:#e6e6e6"></div>
<div class="a" style="left:565px;top:130px;width:8px;height:60px;background:#f4f4f4"></div>
<div class="a" style="left:572px;top:130px;width:1px;height:60px;background:#e6e6e6"></div>
<div class="a" style="left:580px;top:130px;width:1px;height:60px;background:#e6e6e6"></div>
<div class="a" style="left:588px;top:130px;width:1px;height:60px;background:#e6e6e6"></div>
<div class="a" style="left:596px;top:130px;width:1px;height:60px;background:#e6e6e6"></div>
<div class="a" style="left:604px;top:130px;width:1px;height:60px;background:#e6e6e6"></div>
<div class="a" style="left:605px;top:130px;width:8px;height:60px;background:#f4f4f4"></div>
<div class="a" style="left:612px;top:130px;width:1px;height:60px;background:#e6e6e6"></div>
<div class="a" style="left:620px;top:130px;width:1px;height:60px;background:#e6e6e6"></div>
<div class="a" style="left:628px;top:130px;width:1px;height:60px;background:#e6e6e6"></div>
<div class="a" style="left:636px;top:130px;width:1px;height:60px;background:#e6e6e6"></div>
<div class="a" style="left:644px;top:130px;width:1px;height:60px;background:#e6e6e6"></div>
<div class="a" style="left:645px;top:130px;width:8px;height:60px;background:#f4f4f4"></div>
<div class="a" style="left:652px;top:130px;width:1px;height:60px;background:#e6e6e6"></div>
<div class="a" style="left:660px;top:130px;width:1px;height:60px;background:#e6e6e6"></div>
<div class="a" style="left:668px;top:130px;width:1px;height:60px;background:#e6e6e6"></div>
<div class="a" style="left:676px;top:130px;width:1px;height:60px;background:#e6e6e6"></div>
<div class="a" style="left:684px;top:130px;width:1px;height:60px;background:#e6e6e6"></div>
<div class="a" style="left:685px;top:130px;width:8px;height:60px;background:#f4f4f4"></div>
<div class="a" style="left:692px;top:130px;width:1px;height:60px;background:#e6e6e6"></div>
<div class="a" style="left:700px;top:130px;width:1px;height:60px;background:#e6e6e6"></div>
<div class="a" style="left:708px;top:130px;width:1px;height:60px;background:#e6e6e6"></div>
<div class="a" style="left:716px;top:130px;width:1px;height:60px;background:#e6e6e6"></div>
<div class="a" style="left:724px;top:130px;width:1px;height:60px;background:#e6e6e6"></div>
<div class="a" style="left:725px;top:130px;width:8px;height:60px;background:#f4f4f4"></div>
<div class="a" style="left:732px;top:130px;width:1px;height:60px;background:#e6e6e6"></div>
<div class="a" style="left:740px;top:130px;width:1px;height:60px;background:#e6e6e6"></div>
<div class="a" style="left:748px;top:130px;width:1px;height:60px;background:#e6e6e6"></div>
<div class="a" style="left:756px;top:130px;width:1px;height:60px;background:#e6e6e6"></div>
<div class="a" style="left:764px;top:130px;width:1px;height:60px;background:#e6e6e6"></div>
<div class="a" style="left:765px;top:130px;width:8px;height:60px;background:#f4f4f4"></div>
<div class="a" style="left:772px;top:130px;width:1px;height:60px;background:#e6e6e6"></div>
<div class="a" style="left:780px;top:130px;width:1px;height:60px;background:#e6e6e6"></div>
<div class="a" style="left:788px;top:130px;width:1px;height:60px;background:#e6e6e6"></div>
<div class="a" style="left:796px;top:130px;width:1px;height:60px;background:#e6e6e6"></div>
<div class="a" style="left:804px;top:130px;width:1px;height:60px;background:#e6e6e6"></div>
<div class="a" style="left:805px;top:130px;width:8px;height:60px;background:#f4f4f4"></div>
<div class="a" style="left:812px;top:130px;width:1px;height:60px;background:#e6e6e6"></div>
<div class="a" style="left:820px;top:130px;width:1px;height:60px;background:#e6e6e6"></div>
<div class="a" style="left:828px;top:130px;width:1px;height:60px;background:#e6e6e6"></div>
<div class="a" style="left:836px;top:130px;width:1px;height:60px;background:#e6e6e6"></div>
<div class="a" style="left:844px;top:130px;width:1px;height:60px;background:#e6e6e6"></div>
<div class="a" style="left:845px;top:130px;width:8px;height:60px;background:#f4f4f4"></div>
<div class="a" style="left:852px;top:130px;width:1px;height:60px;background:#e6e6e6"></div>
<div class="a" style="left:860px;top:130px;width:1px;height:60px;background:#e6e6e6"></div>
<div class="a" style="left:868px;top:130px;width:1px;height:60px;background:#e6e6e6"></div>
<div class="a" style="left:876px;top:130px;width:1px;height:60px;background:#e6e6e6"></div>
<div class="a" style="left:884px;top:130px;width:1px;height:60px;background:#e6e6e6"></div>
<div class="a" style="left:885px;top:130px;width:8px;height:60px;background:#f4f4f4"></div>
<div class="a" style="left:892px;top:130px;width:1px;height:60px;background:#e6e6e6"></div>
<div class="a" style="left:900px;top:130px;width:1px;height:60px;background:#e6e6e6"></div>
<div class="a" style="left:908px;top:130px;width:1px;height:60px;background:#e6e6e6"></div>
<div class="a" style="left:916px;top:130px;width:1px;height:60px;background:#e6e6e6"></div>
<div class="a" style="left:924px;top:130px;width:1px;height:60px;background:#e6e6e6"></div>
<div class="a" style="left:925px;top:130px;width:8px;height:60px;background:#f4f4f4"></div>
<div class="a" style="left:932px;top:130px;width:1px;height:60px;background:#e6e6e6"></div>
<div class="a" style="left:940px;top:130px;width:1px;height:60px;background:#e6e6e6"></div>
<div class="a" style="left:948px;top:130px;width:1px;height:60px;background:#e6e6e6"></div>
<div class="a" style="left:956px;top:130px;width:1px;height:60px;background:#e6e6e6"></div>
<div class="a" style="left:964px;top:130px;width:1px;height:60px;background:#e6e6e6"></div>
<div class="a" style="left:965px;top:130px;width:8px;height:60px;background:#f4f4f4"></div>
<div class="a" style="left:972px;top:130px;width:1px;height:60px;background:#e6e6e6"></div>
<div class="a" style="left:980px;top:130px;width:1px;height:60px;background:#e6e6e6"></div>
<div class="a" style="left:988px;top:130px;width:1px;height:60px;background:#e6e6e6"></div>
<div class="a" style="left:996px;top:130px;width:1px;height:60px;background:#e6e6e6"></div>
<div class="a" style="left:1004px;top:130px;width:1px;height:60px;background:#e6e6e6"></div>
<div class="a" style="left:1005px;top:130px;width:8px;height:60px;background:#f4f4f4"></div>
<div class="a" style="left:1012px;top:130px;width:1px;height:60px;background:#e6e6e6"></div>
<div class="a" style="left:1020px;top:130px;width:1px;height:60px;background:#e6e6e6"></div>
<div class="a" style="left:1028px;top:130px;width:1px;height:60px;background:#e6e6e6"></div>
<div class="a" style="left:1036px;top:130px;width:1px;height:60px;background:#e6e6e6"></div>
<div class="a" style="left:1044px;top:130px;width:1px;height:60px;background:#e6e6e6"></div>
<div class="a" style="left:1045px;top:130px;width:8px;height:60px;background:#f4f4f4"></div>
<div class="a" style="left:1052px;top:130px;width:1px;height:60px;background:#e6e6e6"></div>
<div class="a" style="left:1060px;top:130px;width:1px;height:60px;background:#e6e6e6"></div>
<div class="a" style="left:1068px;top:130px;width:1px;height:60px;background:#e6e6e6"></div>
<div class="a" style="left:1076px;top:130px;width:1px;height:60px;background:#e6e6e6"></div>
<div class="a" style="left:1084px;top:130px;width:1px;height:60px;background:#e6e6e6"></div>
<div class="a" style="left:1085px;top:130px;width:8px;height:60px;background:#f4f4f4"></div>
<div class="a" style="left:1092px;top:130px;width:1px;height:60px;background:#e6e6e6"></div>
<div class="a" style="left:1100px;top:130px;width:1px;height:60px;background:#e6e6e6"></div>
<div class="a" style="left:1108px;top:130px;width:1px;height:60px;background:#e6e6e6"></div>
<div class="a" style="left:1116px;top:130px;width:1px;height:60px;background:#e6e6e6"></div>
<div class="a" style="left:1124px;top:130px;width:1px;height:60px;background:#e6e6e6"></div>
<div class="a" style="left:1125px;top:130px;width:8px;height:60px;background:#f4f4f4"></div>
<div class="a" style="left:1132px;top:130px;width:1px;height:60px;background:#e6e6e6"></div>
<div class="a" style="left:1140px;top:130px;width:1px;height:60px;background:#e6e6e6"></div>
<div class="a" style="left:1148px;top:130px;width:1px;height:60px;background:#e6e6e6"></div>
<div class="a" style="left:1156px;top:130px;width:1px;height:60px;background:#e6e6e6"></div>
<div class="a" style="left:1164px;top:130px;width:1px;height:60px;background:#e6e6e6"></div>
<div class="a" style="left:1165px;top:130px;width:8px;height:60px;background:#f4f4f4"></div>
<div class="a" style="left:1172px;top:130px;width:1px;height:60px;background:#e6e6e6"></div>
<div class="a" style="left:1180px;top:130px;width:1px;height:60px;background:#e6e6e6"></div>
<div class="a" style="left:1188px;top:130px;width:1px;height:60px;background:#e6e6e6"></div>
<div class="a" style="left:1196px;top:130px;width:1px;height:60px;background:#e6e6e6"></div>
<div class="a" style="left:1204px;top:130px;width:1px;height:60px;background:#e6e6e6"></div>
<div class="a" style="left:1205px;top:130px;width:8px;height:60px;background:#f4f4f4"></div>
<div class="a" style="left:1212px;top:130px;width:1px;height:60px;background:#e6e6e6"></div>
<div class="a" style="left:1220px;top:130px;width:1px;height:60px;background:#e6e6e6"></div>
<div class="a" style="left:1228px;top:130px;width:1px;height:60px;background:#e6e6e6"></div>
<div class="a" style="left:1236px;top:130px;width:1px;height:60px;background:#e6e6e6"></div>
<div class="a" style="left:1244px;top:130px;width:1px;height:60px;background:#e6e6e6"></div>
<div class="a" style="left:1245px;top:130px;width:8px;height:60px;background:#f4f4f4"></div>
<div class="a" style="left:1252px;top:130px;width:1px;height:60px;background:#e6e6e6"></div>
<div class="a" style="left:1260px;top:130px;width:1px;height:60px;background:#e6e6e6"></div>
<div class="a" style="left:1268px;top:130px;width:1px;height:60px;background:#e6e6e6"></div>
<div class="a" style="left:1276px;top:130px;width:1px;height:60px;background:#e6e6e6"></div>
<div class="a" style="left:1284px;top:130px;width:1px;height:60px;background:#e6e6e6"></div>
<div class="a" style="left:1285px;top:130px;width:8px;height:60px;background:#f4f4f4"></div>
<div class="a" style="left:1292px;top:130px;width:1px;height:60px;background:#e6e6e6"></div>
<div class="a" style="left:1300px;top:130px;width:1px;height:60px;background:#e6e6e6"></div>
<div class="a" style="left:1308px;top:130px;width:1px;height:60px;background:#e6e6e6"></div>
<div class="a" style="left:1316px;top:130px;width:1px;height:60px;background:#e6e6e6"></div>
<div class="a" style="left:1324px;top:130px;width:1px;height:60px;background:#e6e6e6"></div>
<div class="a" style="left:1325px;top:130px;width:8px;height:60px;background:#f4f4f4"></div>
<div class="a" style="left:1332px;top:130px;width:1px;height:60px;background:#e6e6e6"></div>
<div class="a" style="left:1340px;top:130px;width:1px;height:60px;background:#e6e6e6"></div>
<div class="a" style="left:252px;top:149px;width:1089px;height:1px;background:#e6e6e6"></div>
<div class="a" style="left:252px;top:169px;width:1089px;height:1px;background:#e6e6e6"></div>
<div class="a" style="left:252px;top:189px;width:1089px;height:1px;background:#e6e6e6"></div>
<div class="a hatch" style="left:252px;top:130px;width:921px;height:20px;border-right:1px solid #000;border-bottom:1px solid #000"></div>
<div class="a" style="left:252px;top:130px;width:1px;height:20px;background:#a8a8a8"></div>
<div class="a" style="left:254px;top:142px;width:5px;height:5px;border-radius:50%;background:#000"></div>
<div class="a" style="left:1165px;top:139px;width:6px;height:10px;border:1.5px solid #000;background:#fff"></div>
<div class="a hatch" style="left:252px;top:169px;width:921px;height:21px;border-right:1px solid #000;border-bottom:1px solid #000"></div>
<div class="a" style="left:252px;top:169px;width:1px;height:20px;background:#a8a8a8"></div>
<div class="a" style="left:254px;top:182px;width:5px;height:5px;border-radius:50%;background:#000"></div>
<div class="a" style="left:1165px;top:179px;width:6px;height:10px;border:1.5px solid #000;background:#fff"></div>
<div class="a" style="left:252px;top:169px;width:921px;height:1px;background:#000"></div>
<div class="a hatch" style="left:252px;top:150px;width:25px;height:19px"></div>
<div class="a" style="left:260px;top:150px;width:1px;height:19px;background:#000"></div>
<div class="a" style="left:254px;top:162px;width:5px;height:5px;border-radius:50%;background:#000"></div>
<div class="a" style="left:268px;top:150px;width:1px;height:19px;background:#000"></div>
<div class="a" style="left:262px;top:162px;width:5px;height:5px;border-radius:50%;background:#000"></div>
<div class="a" style="left:276px;top:150px;width:1px;height:19px;background:#000"></div>
<div class="a" style="left:270px;top:162px;width:5px;height:5px;border-radius:50%;background:#000"></div>
<div class="a" style="left:252px;top:150px;width:1px;height:20px;background:#a8a8a8"></div>
<div class="a" style="left:1342px;top:130px;width:16px;height:64px;background:#f0f0f0"></div>
<div class="a" style="left:1343px;top:146px;width:14px;height:31px;background:#cdcdcd"></div>
<svg class="a" style="left:1345px;top:136px" width="9" height="6"><path d="M1 5L4.5 1.5L8 5" stroke="#606060" stroke-width="1.6" fill="none"/></svg>
<svg class="a" style="left:1345px;top:184px" width="9" height="6"><path d="M1 1L4.5 4.5L8 1" stroke="#606060" stroke-width="1.6" fill="none"/></svg>
<div class="a" style="left:73px;top:190px;width:1285px;height:27px;background:#f0f0f0"></div>
<div class="a" style="left:73px;top:195px;width:1269px;height:1px;background:#fafafa"></div>
<div class="a" style="left:247px;top:190px;width:1px;height:22px;background:#a8a8a8"></div>
<div class="a" style="left:248px;top:190px;width:1px;height:22px;background:#fff"></div>
<svg class="a" style="left:77px;top:197px" width="17" height="14">
<path d="M3.5 1H14.5V7L10.5 11H3.5Z" fill="#2a2a10" transform="translate(1,1)"/>
<path d="M3.5 0.5H14.5V7L10.5 11H3.5Z" fill="#f4f2dc" stroke="#5a5830"/>
<path d="M10.5 11V7H14.5" fill="#d8d6b0" stroke="#5a5830"/>
<path d="M0.5 6.5H6.5M3.5 3.5V9.5" stroke="#3a3ad8" stroke-width="1.6"/></svg>
<svg class="a" style="left:96px;top:197px" width="17" height="14">
<path d="M0.5 7.5H6.5M3.5 4.5V10.5" stroke="#3a3ad8" stroke-width="1.6"/>
<rect x="5" y="2" width="2" height="2" fill="#f00"/><rect x="8" y="0.5" width="2" height="2" fill="#f00"/><rect x="11" y="1.5" width="2" height="2" fill="#f00"/><rect x="13" y="4.5" width="2" height="2" fill="#f00"/>
<rect x="12.5" y="8" width="3.5" height="3.5" fill="#1a30d0"/></svg>
<svg class="a" style="left:115px;top:196px" width="18" height="15">
<path d="M4 3.5H8.5L10 5H16V13.5H4Z" fill="#2a2a10" transform="translate(1,1)"/>
<path d="M4 3V1.5H8.5L10 3H16V13H4Z" fill="#f4dc90" stroke="#3a3a20"/>
<path d="M0.5 8.5H6.5M3.5 5.5V11.5" stroke="#3a3ad8" stroke-width="1.6"/></svg>
<svg class="a" style="left:225px;top:196px" width="15" height="15">
<path d="M2 3.5H13M5.5 3.5V1.5H9.5V3.5" stroke="#2a3a70" stroke-width="1.1" fill="none"/>
<path d="M3 4.5L4 13.5H11L12 4.5Z" fill="#9cb8e0" stroke="#2a3a70"/>
<path d="M5.8 6V12M7.5 6V12M9.2 6V12" stroke="#2a3a70" stroke-width="0.8"/></svg>
<div class="a" style="left:254px;top:196px;width:16px;height:17px;border-top:1px solid #fff;border-left:1px solid #fff;border-right:1px solid #a8a8a8;border-bottom:1px solid #a8a8a8"></div>
<div class="a" style="left:275px;top:196px;width:16px;height:17px;border-top:1px solid #fff;border-left:1px solid #fff;border-right:1px solid #a8a8a8;border-bottom:1px solid #a8a8a8"></div>
<div class="a" style="left:291px;top:196px;width:16px;height:17px;border-top:1px solid #fff;border-left:1px solid #fff;border-right:1px solid #a8a8a8;border-bottom:1px solid #a8a8a8"></div>
<div class="a" style="left:312px;top:196px;width:16px;height:17px;border-top:1px solid #fff;border-left:1px solid #fff;border-right:1px solid #a8a8a8;border-bottom:1px solid #a8a8a8"></div>
<div class="a" style="left:333px;top:196px;width:16px;height:17px;border-top:1px solid #fff;border-left:1px solid #fff;border-right:1px solid #a8a8a8;border-bottom:1px solid #a8a8a8"></div>
<svg class="a" style="left:258px;top:198px" width="8" height="13"><path d="M4 0V13" stroke="#e00" stroke-width="1.2"/><rect x="2.2" y="4.6" width="3.6" height="3.6" fill="#fff" stroke="#e00" stroke-width="1.1"/></svg>
<svg class="a" style="left:277px;top:199px" width="12" height="11"><rect x="0.5" y="0.5" width="6" height="6" fill="#c0c0e8" stroke="#6a6aa8"/><rect x="4" y="4" width="7" height="7" fill="#8c8cd0" stroke="#5a5a98"/></svg>
<svg class="a" style="left:293px;top:199px" width="12" height="11"><rect x="0.5" y="0.5" width="6" height="6" fill="#c0c0e8" stroke="#6a6aa8"/><rect x="4" y="4" width="7" height="7" fill="#fff" stroke="#5a5a98"/></svg>
<svg class="a" style="left:314px;top:199px" width="12" height="11"><rect x="0.5" y="0.5" width="7" height="7" fill="#8c8cd0" stroke="#5a5a98"/><rect x="4" y="4" width="7" height="7" fill="#8c8cd0" stroke="#5a5a98"/></svg>
<svg class="a" style="left:335px;top:199px" width="12" height="11"><path d="M3 0.5H0.5V10.5H3M9 0.5H11.5V10.5H9" stroke="#4a4a88" fill="none" stroke-width="1.2"/><rect x="5" y="5" width="2" height="2" fill="#4a4a88"/><path d="M8 10.5L11 7.5V10.5Z" fill="#222"/></svg>
<div class="a" style="left:352px;top:196px;width:27px;height:17px;border-top:1px solid #b8b8b8;border-left:1px solid #b8b8b8;border-right:1px solid #fff;border-bottom:1px solid #fff"></div>
<div class="a" style="left:383px;top:196px;width:42px;height:17px;border-top:1px solid #b8b8b8;border-left:1px solid #b8b8b8;border-right:1px solid #fff;border-bottom:1px solid #fff"></div>
<div class="a" style="left:428px;top:196px;width:36px;height:17px;border-top:1px solid #b8b8b8;border-left:1px solid #b8b8b8;border-right:1px solid #fff;border-bottom:1px solid #fff"></div>
<div class="t" style="left:362px;top:198px;font-size:10.5px;letter-spacing:-0.3px">3</div>
<div class="t" style="left:387px;top:198px;font-size:10.5px;letter-spacing:-0.3px">12.0 fps</div>
<div class="t" style="left:436px;top:198px;font-size:10.5px;letter-spacing:-0.3px">0.2s</div>
<svg class="a" style="left:472px;top:200px" width="6" height="9"><path d="M5 1L1.5 4.5L5 8" stroke="#606060" stroke-width="1.6" fill="none"/></svg>
<div class="a" style="left:484px;top:197px;width:153px;height:15px;background:#cdcdcd"></div>
<svg class="a" style="left:1330px;top:200px" width="6" height="9"><path d="M1 1L4.5 4.5L1 8" stroke="#606060" stroke-width="1.6" fill="none"/></svg>
<div class="a" style="left:252px;top:190px;width:1px;height:23px;background:#a8a8a8"></div>
<div class="a" style="left:73px;top:190px;width:174px;height:6px;background:#f8f8f8"></div>
<div class="a" style="left:253px;top:190px;width:1088px;height:5px;background:#f8f8f8"></div>
<div class="a" style="left:467px;top:195px;width:874px;height:1px;background:#8a8a8a"></div>
<div class="a" style="left:268px;top:107px;width:9px;height:22px;background:#ff9c9c;border:1px solid #d01818"></div>
<div class="a" style="left:272px;top:129px;width:1px;height:66px;background:#d01010"></div>
<div class="a" style="left:73px;top:217px;width:1285px;height:1px;background:#fff"></div>
<div class="a" style="left:73px;top:218px;width:1285px;height:2px;background:#8a8a8a"></div>
<div class="a" style="left:73px;top:220px;width:1269px;height:482px;background:#d1d1d1"></div>
<div class="a" style="left:1342px;top:220px;width:1px;height:482px;background:#fff"></div>
<div class="a" style="left:73px;top:701px;width:1270px;height:1px;background:#fff"></div>
<div class="a" style="left:1343px;top:220px;width:15px;height:499px;background:#f0f0f0"></div>
<div class="a" style="left:1344px;top:403px;width:13px;height:117px;background:#cdcdcd"></div>
<svg class="a" style="left:1346px;top:226px" width="9" height="6"><path d="M1 5L4.5 1.5L8 5" stroke="#606060" stroke-width="1.6" fill="none"/></svg>
<svg class="a" style="left:1346px;top:690px" width="9" height="6"><path d="M1 1L4.5 4.5L8 1" stroke="#606060" stroke-width="1.6" fill="none"/></svg>
<div class="a" style="left:73px;top:702px;width:1270px;height:17px;background:#f0f0f0"></div>
<div class="a" style="left:303px;top:703px;width:788px;height:15px;background:#cdcdcd"></div>
<svg class="a" style="left:79px;top:706px" width="6" height="9"><path d="M5 1L1.5 4.5L5 8" stroke="#606060" stroke-width="1.6" fill="none"/></svg>
<svg class="a" style="left:1330px;top:706px" width="6" height="9"><path d="M1 1L4.5 4.5L1 8" stroke="#606060" stroke-width="1.6" fill="none"/></svg>
<div class="a" style="left:691px;top:719px;width:49px;height:8px;background:#f0f0f0;border:1px solid #a0a0a0;border-top:none"></div>
<svg class="a" style="left:711px;top:720px" width="9" height="5"><path d="M0 5h9L4.5 0z" fill="#000"/></svg>
<div class="a" style="left:1359px;top:360px;width:7px;height:48px;background:#e0e0e0;border:1px solid #a8a8a8;border-right:none"></div>
<svg class="a" style="left:1360px;top:378px" width="5" height="9"><path d="M5 0v9L0 4.5z" fill="#fff"/></svg>
<svg class="a" style="left:0;top:0;pointer-events:none" width="1366" height="728" viewBox="0 0 1366 728">
<defs>
<linearGradient id="skyb" x1="445" y1="0" x2="997" y2="0" gradientUnits="userSpaceOnUse">
<stop offset="0" stop-color="#0c8ef8"/><stop offset="0.2" stop-color="#1496fa"/><stop offset="0.4" stop-color="#2ca6fc"/><stop offset="0.52" stop-color="#50b6fe"/><stop offset="0.66" stop-color="#88ccff"/><stop offset="1" stop-color="#c0e0ff"/></linearGradient>
<radialGradient id="sun" cx="922" cy="322" r="300" gradientUnits="userSpaceOnUse">
<stop offset="0" stop-color="#fff" stop-opacity="1"/><stop offset="0.18" stop-color="#fff" stop-opacity="1"/><stop offset="0.25" stop-color="#fff8fe" stop-opacity="1"/>
<stop offset="0.3" stop-color="#fcf0fc" stop-opacity="0.9"/><stop offset="0.42" stop-color="#e0e8ff" stop-opacity="0.7"/><stop offset="0.55" stop-color="#b8dcff" stop-opacity="0.45"/><stop offset="0.75" stop-color="#a0d0ff" stop-opacity="0.2"/><stop offset="1" stop-color="#a0d0ff" stop-opacity="0"/></radialGradient>
<linearGradient id="skyv" x1="0" y1="254" x2="0" y2="500" gradientUnits="userSpaceOnUse"><stop offset="0" stop-color="#0060d0" stop-opacity="0.05"/><stop offset="1" stop-color="#60c0ff" stop-opacity="0.12"/></linearGradient>
<linearGradient id="bgr" x1="0" y1="494" x2="0" y2="578" gradientUnits="userSpaceOnUse">
<stop offset="0" stop-color="#84cc84"/><stop offset="0.45" stop-color="#5cba5c"/><stop offset="0.75" stop-color="#40b040"/><stop offset="0.86" stop-color="#26a626"/><stop offset="1" stop-color="#1ea01e"/></linearGradient>
<linearGradient id="road" x1="489" y1="0" x2="997" y2="0" gradientUnits="userSpaceOnUse">
<stop offset="0" stop-color="#848c82"/><stop offset="0.2" stop-color="#7e8880"/><stop offset="0.27" stop-color="#868a86"/><stop offset="0.33" stop-color="#7c7e7c"/><stop offset="0.45" stop-color="#7a7a7a"/><stop offset="1" stop-color="#7c7a7c"/></linearGradient>
<linearGradient id="fgr" x1="0" y1="630" x2="0" y2="657" gradientUnits="userSpaceOnUse">
<stop offset="0" stop-color="#10a410"/><stop offset="0.5" stop-color="#1ea81e"/><stop offset="1" stop-color="#50bc50"/></linearGradient>
<linearGradient id="topb" x1="445" y1="0" x2="997" y2="0" gradientUnits="userSpaceOnUse"><stop offset="0" stop-color="#202020"/><stop offset="0.5" stop-color="#404040"/><stop offset="0.75" stop-color="#b0b0c0"/><stop offset="1" stop-color="#f0c8e0"/></linearGradient>
<clipPath id="stclip"><rect x="441" y="254" width="556" height="404"/></clipPath>
<clipPath id="bgclip"><rect x="489" y="490" width="508" height="88"/></clipPath><clipPath id="bgclip2"><rect x="489" y="495" width="508" height="83"/></clipPath>
<clipPath id="fgclip"><rect x="441" y="630" width="556" height="27"/></clipPath>
<filter id="blur06" x="-30%" y="-30%" width="160%" height="160%"><feGaussianBlur stdDeviation="0.6"/></filter>
<filter id="blur1b" x="-30%" y="-30%" width="160%" height="160%"><feGaussianBlur stdDeviation="1"/></filter>
<filter id="blur08" x="-30%" y="-30%" width="160%" height="160%"><feGaussianBlur stdDeviation="0.8"/></filter>
<filter id="blur05" x="-20%" y="-20%" width="140%" height="140%"><feGaussianBlur stdDeviation="0.5"/></filter>
<filter id="blur3" x="-100%" y="-50%" width="300%" height="200%"><feGaussianBlur stdDeviation="4"/></filter>
<filter id="blur1" x="-5%" y="-50%" width="110%" height="200%"><feGaussianBlur stdDeviation="1.5"/></filter>
</defs>
<rect x="997" y="254" width="2" height="357" fill="#fff"/>
<rect x="445" y="254" width="552" height="403" fill="url(#skyb)"/>
<rect x="445" y="254" width="552" height="403" fill="url(#sun)"/>
<rect x="996" y="254" width="1" height="357" fill="#f4c8e8"/>
<path d="M534 386 L830 328" stroke="#fff" stroke-opacity="0.05" stroke-width="2.5"/>
<path d="M670 398 L834 344" stroke="#fff" stroke-opacity="0.05" stroke-width="2.5"/>
<path d="M637 299 L735 303" stroke="#fff" stroke-opacity="0.04" stroke-width="2.5"/>
<rect x="489" y="578" width="508" height="52" fill="url(#road)"/>
<ellipse cx="632" cy="606" rx="9" ry="34" fill="#c0c8c0" opacity="0.25" filter="url(#blur3)"/>
<path d="M489 578H997" stroke="#303030" stroke-width="0.8"/>
<g clip-path="url(#fgclip)">
<rect x="441" y="630" width="556" height="27" fill="url(#fgr)"/>
<g stroke="#fff" fill="none" filter="url(#blur08)"><path d="M615 649Q613 635 628 626" stroke-opacity="0.41" stroke-width="1.0"/><path d="M719 645Q716 633 731 625" stroke-opacity="0.43" stroke-width="1.7"/><path d="M501 651Q499 639 518 632" stroke-opacity="0.42" stroke-width="1.8"/><path d="M457 670Q454 659 467 652" stroke-opacity="0.39" stroke-width="1.7"/><path d="M533 661Q532 649 548 640" stroke-opacity="0.32" stroke-width="1.0"/><path d="M547 664Q546 653 560 646" stroke-opacity="0.44" stroke-width="1.2"/><path d="M883 665Q881 656 895 649" stroke-opacity="0.56" stroke-width="1.6"/><path d="M594 673Q594 665 605 659" stroke-opacity="0.35" stroke-width="1.4"/><path d="M452 664Q452 651 470 642" stroke-opacity="0.39" stroke-width="1.6"/><path d="M769 661Q769 651 784 644" stroke-opacity="0.44" stroke-width="1.5"/><path d="M465 665Q464 654 483 646" stroke-opacity="0.39" stroke-width="1.3"/><path d="M811 645Q808 633 824 625" stroke-opacity="0.32" stroke-width="1.6"/><path d="M504 651Q501 642 519 635" stroke-opacity="0.43" stroke-width="1.4"/><path d="M934 669Q932 654 950 644" stroke-opacity="0.41" stroke-width="1.7"/><path d="M976 649Q973 639 986 633" stroke-opacity="0.45" stroke-width="1.5"/><path d="M580 644Q579 633 593 626" stroke-opacity="0.59" stroke-width="1.6"/><path d="M724 663Q724 649 737 639" stroke-opacity="0.53" stroke-width="1.7"/><path d="M885 656Q884 644 896 637" stroke-opacity="0.32" stroke-width="1.1"/><path d="M549 649Q546 638 560 630" stroke-opacity="0.35" stroke-width="1.1"/><path d="M637 645Q634 631 656 621" stroke-opacity="0.38" stroke-width="1.3"/><path d="M638 648Q636 635 658 626" stroke-opacity="0.45" stroke-width="1.1"/><path d="M488 654Q485 645 502 639" stroke-opacity="0.31" stroke-width="1.8"/><path d="M731 648Q730 636 744 627" stroke-opacity="0.59" stroke-width="1.7"/><path d="M827 652Q826 641 838 633" stroke-opacity="0.46" stroke-width="1.6"/><path d="M618 651Q618 638 638 630" stroke-opacity="0.54" stroke-width="1.7"/><path d="M852 651Q848 639 866 631" stroke-opacity="0.31" stroke-width="1.2"/><path d="M578 665Q578 650 596 640" stroke-opacity="0.60" stroke-width="1.8"/><path d="M638 651Q635 641 648 634" stroke-opacity="0.49" stroke-width="1.7"/><path d="M909 658Q906 646 927 639" stroke-opacity="0.50" stroke-width="1.7"/><path d="M876 667Q876 655 889 647" stroke-opacity="0.40" stroke-width="1.6"/><path d="M984 656Q983 646 999 640" stroke-opacity="0.35" stroke-width="1.1"/><path d="M516 671Q516 656 531 647" stroke-opacity="0.59" stroke-width="1.5"/><path d="M630 660Q630 651 639 645" stroke-opacity="0.49" stroke-width="1.4"/><path d="M962 657Q959 644 982 635" stroke-opacity="0.38" stroke-width="1.2"/><path d="M567 662Q564 652 579 645" stroke-opacity="0.57" stroke-width="1.3"/><path d="M691 662Q691 647 709 637" stroke-opacity="0.45" stroke-width="1.4"/><path d="M728 645Q725 633 741 625" stroke-opacity="0.54" stroke-width="1.1"/><path d="M700 666Q698 653 714 645" stroke-opacity="0.47" stroke-width="1.6"/><path d="M490 661Q490 651 502 644" stroke-opacity="0.45" stroke-width="1.4"/><path d="M863 671Q862 661 878 653" stroke-opacity="0.45" stroke-width="1.6"/><path d="M688 660Q687 650 704 643" stroke-opacity="0.56" stroke-width="1.8"/><path d="M578 661Q575 647 599 638" stroke-opacity="0.34" stroke-width="1.4"/><path d="M471 651Q471 643 482 638" stroke-opacity="0.57" stroke-width="1.1"/><path d="M838 664Q839 656 851 650" stroke-opacity="0.37" stroke-width="1.8"/><path d="M657 659Q654 644 678 635" stroke-opacity="0.43" stroke-width="1.4"/><path d="M623 650Q620 640 637 634" stroke-opacity="0.47" stroke-width="1.4"/><path d="M440 654Q437 642 456 633" stroke-opacity="0.60" stroke-width="1.6"/><path d="M984 647Q984 637 994 630" stroke-opacity="0.38" stroke-width="1.1"/><path d="M671 671Q668 657 687 647" stroke-opacity="0.58" stroke-width="1.5"/><path d="M829 647Q828 639 840 634" stroke-opacity="0.32" stroke-width="1.8"/><path d="M792 668Q789 660 803 655" stroke-opacity="0.56" stroke-width="1.4"/><path d="M623 661Q620 645 640 635" stroke-opacity="0.46" stroke-width="1.2"/><path d="M492 649Q490 640 501 635" stroke-opacity="0.39" stroke-width="1.6"/><path d="M595 659Q592 650 606 644" stroke-opacity="0.38" stroke-width="1.0"/><path d="M848 661Q848 651 859 645" stroke-opacity="0.33" stroke-width="1.7"/><path d="M676 659Q675 645 693 635" stroke-opacity="0.51" stroke-width="1.8"/><path d="M625 669Q623 656 643 648" stroke-opacity="0.40" stroke-width="1.0"/><path d="M504 646Q501 632 519 623" stroke-opacity="0.33" stroke-width="1.7"/><path d="M926 664Q924 654 937 647" stroke-opacity="0.44" stroke-width="1.1"/><path d="M684 652Q683 638 706 629" stroke-opacity="0.37" stroke-width="1.8"/><path d="M606 655Q605 647 616 642" stroke-opacity="0.45" stroke-width="1.2"/><path d="M718 644Q716 634 728 627" stroke-opacity="0.31" stroke-width="1.0"/><path d="M603 651Q603 639 619 631" stroke-opacity="0.50" stroke-width="1.6"/><path d="M931 656Q928 647 946 640" stroke-opacity="0.52" stroke-width="1.5"/><path d="M455 669Q454 655 474 645" stroke-opacity="0.54" stroke-width="1.1"/><path d="M729 659Q728 646 748 637" stroke-opacity="0.48" stroke-width="1.7"/><path d="M819 665Q816 655 829 648" stroke-opacity="0.41" stroke-width="1.1"/><path d="M906 661Q906 649 923 640" stroke-opacity="0.45" stroke-width="1.0"/><path d="M885 666Q884 655 899 647" stroke-opacity="0.32" stroke-width="1.6"/><path d="M574 646Q571 637 587 631" stroke-opacity="0.52" stroke-width="1.8"/><path d="M712 655Q711 645 727 637" stroke-opacity="0.49" stroke-width="1.5"/><path d="M474 648Q472 639 487 633" stroke-opacity="0.47" stroke-width="1.0"/><path d="M465 652Q464 640 482 631" stroke-opacity="0.39" stroke-width="1.4"/><path d="M695 658Q692 650 707 645" stroke-opacity="0.59" stroke-width="1.7"/><path d="M440 658Q438 645 460 637" stroke-opacity="0.38" stroke-width="1.2"/><path d="M969 650Q968 637 982 629" stroke-opacity="0.59" stroke-width="1.1"/><path d="M898 659Q895 645 917 636" stroke-opacity="0.57" stroke-width="1.4"/><path d="M444 644Q442 633 458 625" stroke-opacity="0.34" stroke-width="1.3"/><path d="M610 669Q610 662 621 657" stroke-opacity="0.34" stroke-width="1.7"/><path d="M836 671Q835 661 848 654" stroke-opacity="0.60" stroke-width="1.5"/><path d="M636 657Q633 646 646 639" stroke-opacity="0.55" stroke-width="1.2"/><path d="M963 651Q961 642 976 635" stroke-opacity="0.41" stroke-width="1.8"/><path d="M934 668Q934 657 952 649" stroke-opacity="0.46" stroke-width="1.6"/><path d="M458 666Q457 655 473 648" stroke-opacity="0.39" stroke-width="1.0"/><path d="M958 648Q956 636 972 628" stroke-opacity="0.52" stroke-width="1.8"/><path d="M578 664Q576 654 591 647" stroke-opacity="0.35" stroke-width="1.1"/><path d="M548 671Q549 659 562 651" stroke-opacity="0.60" stroke-width="1.4"/><path d="M510 650Q507 641 520 635" stroke-opacity="0.37" stroke-width="1.2"/><path d="M755 671Q753 657 771 648" stroke-opacity="0.46" stroke-width="1.3"/><path d="M623 646Q620 637 637 631" stroke-opacity="0.45" stroke-width="1.5"/><path d="M922 650Q920 640 933 634" stroke-opacity="0.43" stroke-width="1.8"/><path d="M914 670Q913 662 922 656" stroke-opacity="0.57" stroke-width="1.4"/><path d="M765 644Q765 634 780 628" stroke-opacity="0.56" stroke-width="1.8"/><path d="M572 647Q571 638 583 633" stroke-opacity="0.58" stroke-width="1.6"/><path d="M799 667Q796 656 813 649" stroke-opacity="0.53" stroke-width="1.2"/><path d="M954 663Q952 653 965 646" stroke-opacity="0.49" stroke-width="1.6"/><path d="M494 646Q492 635 509 627" stroke-opacity="0.37" stroke-width="1.5"/><path d="M436 653Q435 643 452 636" stroke-opacity="0.57" stroke-width="1.4"/><path d="M564 651Q561 637 584 627" stroke-opacity="0.31" stroke-width="1.4"/><path d="M814 657Q815 647 827 641" stroke-opacity="0.37" stroke-width="1.0"/><path d="M623 657Q622 643 637 634" stroke-opacity="0.52" stroke-width="1.4"/><path d="M547 673Q544 664 561 657" stroke-opacity="0.37" stroke-width="1.6"/><path d="M598 673Q596 660 611 652" stroke-opacity="0.43" stroke-width="1.5"/><path d="M971 648Q971 637 983 630" stroke-opacity="0.34" stroke-width="1.0"/><path d="M464 656Q464 642 485 633" stroke-opacity="0.60" stroke-width="1.7"/><path d="M618 650Q614 635 638 626" stroke-opacity="0.50" stroke-width="1.3"/><path d="M643 654Q641 644 652 638" stroke-opacity="0.41" stroke-width="1.8"/><path d="M501 673Q500 663 512 657" stroke-opacity="0.55" stroke-width="1.3"/><path d="M458 658Q455 649 473 642" stroke-opacity="0.41" stroke-width="1.7"/><path d="M447 656Q444 643 466 634" stroke-opacity="0.31" stroke-width="1.1"/><path d="M954 652Q952 639 973 631" stroke-opacity="0.38" stroke-width="1.8"/><path d="M782 652Q779 638 797 629" stroke-opacity="0.30" stroke-width="1.6"/><path d="M952 663Q950 647 968 636" stroke-opacity="0.44" stroke-width="1.8"/><path d="M974 656Q972 646 985 639" stroke-opacity="0.58" stroke-width="1.1"/><path d="M887 666Q886 653 907 644" stroke-opacity="0.40" stroke-width="1.3"/><path d="M636 667Q636 659 646 653" stroke-opacity="0.37" stroke-width="1.1"/><path d="M449 661Q449 651 464 645" stroke-opacity="0.60" stroke-width="1.2"/><path d="M478 647Q476 636 493 629" stroke-opacity="0.37" stroke-width="1.3"/><path d="M784 664Q783 652 802 643" stroke-opacity="0.34" stroke-width="1.7"/><path d="M597 661Q595 651 612 644" stroke-opacity="0.37" stroke-width="1.2"/><path d="M517 671Q515 658 532 650" stroke-opacity="0.60" stroke-width="1.4"/><path d="M562 668Q559 657 580 649" stroke-opacity="0.44" stroke-width="1.7"/><path d="M909 671Q906 663 918 658" stroke-opacity="0.36" stroke-width="1.8"/><path d="M762 672Q761 662 777 656" stroke-opacity="0.38" stroke-width="1.6"/><path d="M969 647Q966 635 985 627" stroke-opacity="0.41" stroke-width="1.1"/><path d="M546 652Q544 640 562 632" stroke-opacity="0.30" stroke-width="1.3"/><path d="M817 650Q816 639 828 632" stroke-opacity="0.46" stroke-width="1.1"/><path d="M488 656Q485 644 503 637" stroke-opacity="0.35" stroke-width="1.6"/><path d="M664 652Q661 643 678 637" stroke-opacity="0.47" stroke-width="1.3"/><path d="M667 670Q665 654 686 644" stroke-opacity="0.52" stroke-width="1.2"/><path d="M433 671Q432 661 448 654" stroke-opacity="0.56" stroke-width="1.4"/><path d="M523 644Q523 633 538 625" stroke-opacity="0.33" stroke-width="1.5"/><path d="M641 659Q640 650 652 644" stroke-opacity="0.58" stroke-width="1.1"/><path d="M710 668Q706 652 727 642" stroke-opacity="0.58" stroke-width="1.8"/><path d="M705 646Q705 631 723 620" stroke-opacity="0.49" stroke-width="1.7"/><path d="M521 668Q521 658 533 652" stroke-opacity="0.55" stroke-width="1.1"/><path d="M554 656Q551 644 568 636" stroke-opacity="0.37" stroke-width="1.6"/><path d="M941 645Q938 634 958 626" stroke-opacity="0.55" stroke-width="1.1"/><path d="M772 661Q770 648 786 639" stroke-opacity="0.47" stroke-width="1.3"/><path d="M806 657Q805 645 817 638" stroke-opacity="0.45" stroke-width="1.2"/><path d="M865 667Q864 656 878 648" stroke-opacity="0.33" stroke-width="1.1"/><path d="M675 647Q672 636 689 628" stroke-opacity="0.49" stroke-width="1.1"/><path d="M848 667Q847 655 860 647" stroke-opacity="0.41" stroke-width="1.8"/><path d="M508 670Q507 655 528 645" stroke-opacity="0.36" stroke-width="1.8"/><path d="M710 673Q710 657 727 647" stroke-opacity="0.58" stroke-width="1.1"/><path d="M630 667Q628 659 643 653" stroke-opacity="0.54" stroke-width="1.1"/><path d="M716 672Q715 662 727 655" stroke-opacity="0.40" stroke-width="1.0"/><path d="M534 649Q534 635 554 625" stroke-opacity="0.35" stroke-width="1.6"/><path d="M496 660Q496 647 511 638" stroke-opacity="0.47" stroke-width="1.5"/><path d="M933 647Q931 632 953 622" stroke-opacity="0.54" stroke-width="1.2"/><path d="M995 661Q993 651 1009 645" stroke-opacity="0.35" stroke-width="1.6"/><path d="M458 669Q458 659 470 653" stroke-opacity="0.48" stroke-width="1.5"/><path d="M608 644Q607 636 617 630" stroke-opacity="0.43" stroke-width="1.4"/><path d="M940 648Q937 639 953 633" stroke-opacity="0.30" stroke-width="1.3"/><path d="M491 655Q490 645 503 639" stroke-opacity="0.36" stroke-width="1.5"/><path d="M701 648Q698 633 718 622" stroke-opacity="0.33" stroke-width="1.5"/><path d="M927 667Q923 656 939 649" stroke-opacity="0.49" stroke-width="1.4"/><path d="M630 663Q629 653 646 647" stroke-opacity="0.37" stroke-width="1.7"/><path d="M455 660Q452 649 467 641" stroke-opacity="0.53" stroke-width="1.0"/><path d="M744 672Q743 663 754 657" stroke-opacity="0.45" stroke-width="1.5"/><path d="M894 649Q890 639 905 632" stroke-opacity="0.57" stroke-width="1.6"/><path d="M838 644Q836 631 857 622" stroke-opacity="0.52" stroke-width="1.4"/><path d="M559 647Q557 637 569 630" stroke-opacity="0.52" stroke-width="1.6"/><path d="M912 665Q910 656 924 649" stroke-opacity="0.54" stroke-width="1.4"/><path d="M581 663Q581 647 598 637" stroke-opacity="0.30" stroke-width="1.2"/><path d="M565 666Q562 652 585 643" stroke-opacity="0.56" stroke-width="1.3"/><path d="M566 671Q565 659 583 651" stroke-opacity="0.59" stroke-width="1.4"/><path d="M909 665Q908 651 926 641" stroke-opacity="0.47" stroke-width="1.2"/><path d="M551 663Q548 655 563 650" stroke-opacity="0.31" stroke-width="1.1"/><path d="M960 654Q956 645 969 639" stroke-opacity="0.51" stroke-width="1.5"/><path d="M827 666Q825 658 838 653" stroke-opacity="0.55" stroke-width="1.7"/><path d="M938 646Q938 633 958 624" stroke-opacity="0.33" stroke-width="1.2"/><path d="M494 645Q493 632 513 623" stroke-opacity="0.55" stroke-width="1.5"/><path d="M594 647Q591 639 605 634" stroke-opacity="0.40" stroke-width="1.3"/><path d="M442 652Q440 642 455 636" stroke-opacity="0.40" stroke-width="1.8"/><path d="M717 670Q715 656 730 647" stroke-opacity="0.43" stroke-width="1.6"/><path d="M628 665Q628 653 641 644" stroke-opacity="0.33" stroke-width="1.7"/><path d="M527 644Q528 635 540 629" stroke-opacity="0.30" stroke-width="1.4"/><path d="M710 668Q708 659 722 653" stroke-opacity="0.55" stroke-width="1.2"/><path d="M968 653Q967 644 980 638" stroke-opacity="0.33" stroke-width="1.5"/><path d="M476 668Q475 655 494 647" stroke-opacity="0.41" stroke-width="1.3"/><path d="M655 671Q652 663 667 658" stroke-opacity="0.36" stroke-width="1.2"/><path d="M944 659Q941 649 959 643" stroke-opacity="0.44" stroke-width="1.4"/><path d="M860 667Q858 654 875 645" stroke-opacity="0.35" stroke-width="1.7"/><path d="M807 666Q807 657 818 651" stroke-opacity="0.47" stroke-width="1.1"/><path d="M693 671Q691 661 704 654" stroke-opacity="0.51" stroke-width="1.7"/><path d="M518 649Q517 639 529 632" stroke-opacity="0.35" stroke-width="1.3"/><path d="M538 673Q538 659 552 650" stroke-opacity="0.33" stroke-width="1.3"/><path d="M991 668Q988 654 1007 645" stroke-opacity="0.49" stroke-width="1.1"/><path d="M548 656Q548 648 557 642" stroke-opacity="0.51" stroke-width="1.4"/><path d="M790 658Q789 649 802 644" stroke-opacity="0.52" stroke-width="1.7"/><path d="M675 661Q672 648 692 639" stroke-opacity="0.52" stroke-width="1.7"/><path d="M871 665Q870 651 890 642" stroke-opacity="0.44" stroke-width="1.3"/><path d="M788 647Q788 637 803 630" stroke-opacity="0.49" stroke-width="1.2"/><path d="M671 658Q671 645 687 637" stroke-opacity="0.58" stroke-width="1.1"/><path d="M803 667Q804 657 816 650" stroke-opacity="0.31" stroke-width="1.4"/><path d="M522 667Q518 653 540 643" stroke-opacity="0.47" stroke-width="1.4"/><path d="M839 659Q837 648 856 640" stroke-opacity="0.42" stroke-width="1.8"/><path d="M550 665Q547 654 564 648" stroke-opacity="0.60" stroke-width="1.3"/><path d="M462 652Q460 641 473 633" stroke-opacity="0.43" stroke-width="1.6"/><path d="M631 652Q631 643 643 637" stroke-opacity="0.46" stroke-width="1.2"/><path d="M887 656Q887 646 897 639" stroke-opacity="0.54" stroke-width="1.5"/><path d="M697 661Q695 652 711 647" stroke-opacity="0.49" stroke-width="1.7"/><path d="M895 658Q892 648 908 642" stroke-opacity="0.55" stroke-width="1.3"/><path d="M915 652Q913 641 927 634" stroke-opacity="0.36" stroke-width="1.0"/><path d="M841 652Q840 643 853 636" stroke-opacity="0.43" stroke-width="1.5"/><path d="M806 655Q802 641 826 632" stroke-opacity="0.55" stroke-width="1.7"/><path d="M877 648Q873 635 895 625" stroke-opacity="0.30" stroke-width="1.8"/><path d="M804 652Q801 643 813 637" stroke-opacity="0.53" stroke-width="1.3"/><path d="M517 671Q517 657 532 647" stroke-opacity="0.48" stroke-width="1.6"/><path d="M811 671Q808 658 830 650" stroke-opacity="0.51" stroke-width="1.4"/><path d="M853 657Q850 643 871 633" stroke-opacity="0.37" stroke-width="1.1"/><path d="M711 646Q710 634 723 626" stroke-opacity="0.45" stroke-width="1.4"/><path d="M922 644Q921 630 939 621" stroke-opacity="0.50" stroke-width="1.7"/><path d="M644 657Q643 640 660 630" stroke-opacity="0.49" stroke-width="1.0"/><path d="M778 664Q778 649 795 639" stroke-opacity="0.45" stroke-width="1.4"/><path d="M942 645Q939 632 959 624" stroke-opacity="0.56" stroke-width="1.3"/><path d="M700 660Q699 645 716 636" stroke-opacity="0.43" stroke-width="1.4"/><path d="M901 653Q900 639 918 629" stroke-opacity="0.38" stroke-width="1.4"/><path d="M986 664Q983 649 1002 640" stroke-opacity="0.39" stroke-width="1.5"/><path d="M792 668Q792 660 803 655" stroke-opacity="0.46" stroke-width="1.0"/><path d="M601 644Q600 636 614 630" stroke-opacity="0.50" stroke-width="1.6"/><path d="M949 662Q948 650 965 642" stroke-opacity="0.48" stroke-width="1.5"/><path d="M551 664Q548 653 566 646" stroke-opacity="0.35" stroke-width="1.0"/><path d="M871 671Q871 658 887 650" stroke-opacity="0.54" stroke-width="1.4"/><path d="M577 653Q575 642 590 634" stroke-opacity="0.49" stroke-width="1.7"/><path d="M461 661Q461 653 470 647" stroke-opacity="0.47" stroke-width="1.7"/><path d="M684 644Q685 634 698 627" stroke-opacity="0.59" stroke-width="1.4"/><path d="M665 647Q662 634 679 625" stroke-opacity="0.30" stroke-width="1.0"/><path d="M820 648Q820 631 836 621" stroke-opacity="0.34" stroke-width="1.0"/><path d="M840 651Q837 637 855 628" stroke-opacity="0.53" stroke-width="1.6"/><path d="M918 666Q917 658 929 652" stroke-opacity="0.44" stroke-width="1.7"/><path d="M575 673Q571 659 589 649" stroke-opacity="0.50" stroke-width="1.7"/><path d="M475 653Q475 639 490 630" stroke-opacity="0.45" stroke-width="1.0"/><path d="M640 661Q637 651 654 643" stroke-opacity="0.54" stroke-width="1.3"/><path d="M798 663Q797 652 811 644" stroke-opacity="0.58" stroke-width="1.6"/><path d="M753 653Q753 645 765 641" stroke-opacity="0.55" stroke-width="1.3"/><path d="M775 673Q773 660 794 650" stroke-opacity="0.43" stroke-width="1.7"/><path d="M645 665Q644 653 662 646" stroke-opacity="0.38" stroke-width="1.0"/><path d="M580 657Q580 645 597 638" stroke-opacity="0.31" stroke-width="1.7"/><path d="M893 670Q893 657 907 649" stroke-opacity="0.54" stroke-width="1.5"/><path d="M951 654Q951 646 961 641" stroke-opacity="0.36" stroke-width="1.6"/><path d="M961 651Q959 639 977 631" stroke-opacity="0.36" stroke-width="1.2"/><path d="M858 668Q858 656 870 648" stroke-opacity="0.53" stroke-width="1.2"/><path d="M760 671Q759 657 779 647" stroke-opacity="0.48" stroke-width="1.2"/><path d="M540 649Q538 636 555 627" stroke-opacity="0.42" stroke-width="1.4"/><path d="M515 645Q512 630 533 619" stroke-opacity="0.49" stroke-width="1.6"/><path d="M519 662Q516 652 532 645" stroke-opacity="0.31" stroke-width="1.8"/><path d="M924 659Q923 646 938 638" stroke-opacity="0.43" stroke-width="1.8"/><path d="M867 669Q864 653 885 642" stroke-opacity="0.36" stroke-width="1.1"/><path d="M478 646Q476 634 494 627" stroke-opacity="0.58" stroke-width="1.7"/><path d="M467 662Q467 651 478 643" stroke-opacity="0.38" stroke-width="1.5"/><path d="M795 673Q793 660 811 651" stroke-opacity="0.35" stroke-width="1.8"/><path d="M995 651Q993 642 1004 637" stroke-opacity="0.57" stroke-width="1.7"/><path d="M907 645Q906 632 926 624" stroke-opacity="0.60" stroke-width="1.0"/><path d="M513 667Q510 652 532 643" stroke-opacity="0.48" stroke-width="1.6"/><path d="M490 654Q489 643 501 637" stroke-opacity="0.35" stroke-width="1.2"/><path d="M512 664Q509 657 522 652" stroke-opacity="0.31" stroke-width="1.7"/><path d="M556 672Q553 659 576 650" stroke-opacity="0.43" stroke-width="1.1"/><path d="M959 669Q957 657 975 648" stroke-opacity="0.55" stroke-width="1.4"/><path d="M788 648Q788 638 798 631" stroke-opacity="0.47" stroke-width="1.1"/><path d="M926 652Q924 641 938 633" stroke-opacity="0.55" stroke-width="1.3"/><path d="M526 659Q523 649 540 643" stroke-opacity="0.59" stroke-width="1.0"/><path d="M940 664Q938 655 952 649" stroke-opacity="0.38" stroke-width="1.2"/><path d="M638 674Q634 660 659 650" stroke-opacity="0.39" stroke-width="1.7"/><path d="M463 666Q459 657 477 651" stroke-opacity="0.54" stroke-width="1.3"/><path d="M510 644Q507 630 528 621" stroke-opacity="0.43" stroke-width="1.7"/><path d="M554 661Q554 652 564 646" stroke-opacity="0.51" stroke-width="1.2"/><path d="M475 647Q473 634 491 626" stroke-opacity="0.36" stroke-width="1.5"/><path d="M833 668Q830 656 847 647" stroke-opacity="0.52" stroke-width="1.3"/><path d="M841 646Q841 631 858 622" stroke-opacity="0.56" stroke-width="1.4"/><path d="M439 671Q436 661 455 654" stroke-opacity="0.36" stroke-width="1.7"/><path d="M639 649Q636 639 653 632" stroke-opacity="0.46" stroke-width="1.4"/><path d="M724 648Q724 635 742 627" stroke-opacity="0.40" stroke-width="1.6"/><path d="M647 667Q648 659 659 654" stroke-opacity="0.45" stroke-width="1.4"/><path d="M732 660Q730 653 744 648" stroke-opacity="0.35" stroke-width="1.1"/><path d="M573 669Q572 660 581 654" stroke-opacity="0.36" stroke-width="1.0"/><path d="M772 661Q769 650 787 643" stroke-opacity="0.56" stroke-width="1.6"/><path d="M456 648Q453 636 470 629" stroke-opacity="0.34" stroke-width="1.3"/><path d="M508 662Q507 647 524 636" stroke-opacity="0.52" stroke-width="1.1"/><path d="M901 672Q901 661 914 654" stroke-opacity="0.46" stroke-width="1.3"/><path d="M967 667Q964 657 978 649" stroke-opacity="0.43" stroke-width="1.8"/><path d="M888 671Q885 658 908 650" stroke-opacity="0.46" stroke-width="1.8"/><path d="M963 651Q961 641 977 634" stroke-opacity="0.46" stroke-width="1.1"/><path d="M677 659Q677 651 685 645" stroke-opacity="0.53" stroke-width="1.7"/><path d="M791 668Q787 655 811 646" stroke-opacity="0.49" stroke-width="1.2"/><path d="M817 652Q816 641 834 634" stroke-opacity="0.38" stroke-width="1.4"/><path d="M677 673Q676 662 689 655" stroke-opacity="0.34" stroke-width="1.5"/><path d="M975 659Q974 650 987 643" stroke-opacity="0.34" stroke-width="1.1"/><path d="M505 653Q502 642 517 634" stroke-opacity="0.33" stroke-width="1.4"/><path d="M909 662Q906 651 925 643" stroke-opacity="0.51" stroke-width="1.4"/><path d="M742 662Q740 651 756 643" stroke-opacity="0.37" stroke-width="1.4"/><path d="M648 662Q649 654 658 648" stroke-opacity="0.37" stroke-width="1.4"/><path d="M710 653Q710 637 728 626" stroke-opacity="0.35" stroke-width="1.1"/><path d="M927 657Q925 649 936 643" stroke-opacity="0.52" stroke-width="1.1"/><path d="M558 673Q556 659 573 649" stroke-opacity="0.41" stroke-width="1.5"/><path d="M781 669Q781 656 799 646" stroke-opacity="0.52" stroke-width="1.6"/><path d="M701 668Q698 656 720 648" stroke-opacity="0.56" stroke-width="1.0"/><path d="M866 662Q865 651 883 644" stroke-opacity="0.43" stroke-width="1.6"/><path d="M927 662Q926 652 941 644" stroke-opacity="0.52" stroke-width="1.2"/><path d="M653 661Q652 650 665 642" stroke-opacity="0.55" stroke-width="1.4"/><path d="M683 650Q682 639 694 632" stroke-opacity="0.47" stroke-width="1.1"/><path d="M954 654Q955 641 974 632" stroke-opacity="0.36" stroke-width="1.3"/><path d="M949 644Q948 636 959 631" stroke-opacity="0.58" stroke-width="1.6"/><path d="M737 674Q736 662 752 655" stroke-opacity="0.42" stroke-width="1.3"/><path d="M769 655Q767 640 789 630" stroke-opacity="0.33" stroke-width="1.3"/><path d="M659 661Q659 650 676 642" stroke-opacity="0.45" stroke-width="1.4"/><path d="M786 674Q786 664 799 657" stroke-opacity="0.35" stroke-width="1.3"/><path d="M988 669Q988 656 1000 648" stroke-opacity="0.51" stroke-width="1.7"/><path d="M994 671Q992 659 1007 651" stroke-opacity="0.45" stroke-width="1.4"/><path d="M537 649Q535 637 553 629" stroke-opacity="0.60" stroke-width="1.5"/><path d="M454 656Q453 642 470 633" stroke-opacity="0.30" stroke-width="1.2"/><path d="M910 662Q908 648 924 639" stroke-opacity="0.47" stroke-width="1.2"/><path d="M799 660Q797 645 818 635" stroke-opacity="0.34" stroke-width="1.1"/><path d="M863 647Q862 638 872 632" stroke-opacity="0.55" stroke-width="1.5"/><path d="M890 646Q888 639 900 634" stroke-opacity="0.51" stroke-width="1.3"/><path d="M527 652Q526 644 539 639" stroke-opacity="0.40" stroke-width="1.4"/><path d="M650 646Q650 631 669 622" stroke-opacity="0.43" stroke-width="1.5"/><path d="M572 645Q570 632 593 622" stroke-opacity="0.57" stroke-width="1.7"/><path d="M603 662Q603 647 622 637" stroke-opacity="0.37" stroke-width="1.3"/><path d="M840 651Q838 641 854 635" stroke-opacity="0.54" stroke-width="1.2"/><path d="M529 655Q527 647 542 641" stroke-opacity="0.47" stroke-width="1.1"/><path d="M734 656Q731 644 746 636" stroke-opacity="0.55" stroke-width="1.3"/><path d="M570 650Q566 639 581 633" stroke-opacity="0.50" stroke-width="1.3"/><path d="M519 665Q519 656 529 651" stroke-opacity="0.34" stroke-width="1.4"/><path d="M907 668Q906 659 917 653" stroke-opacity="0.41" stroke-width="1.8"/><path d="M549 673Q547 660 562 652" stroke-opacity="0.34" stroke-width="1.6"/><path d="M579 671Q576 659 593 650" stroke-opacity="0.48" stroke-width="1.2"/><path d="M927 648Q925 636 942 629" stroke-opacity="0.53" stroke-width="1.3"/><path d="M805 661Q802 651 817 644" stroke-opacity="0.35" stroke-width="1.7"/><path d="M613 664Q611 655 624 650" stroke-opacity="0.45" stroke-width="1.2"/><path d="M468 653Q467 643 478 637" stroke-opacity="0.38" stroke-width="1.3"/><path d="M948 667Q945 654 968 645" stroke-opacity="0.38" stroke-width="1.0"/><path d="M817 664Q817 653 830 646" stroke-opacity="0.51" stroke-width="1.2"/><path d="M913 655Q910 641 927 633" stroke-opacity="0.57" stroke-width="1.6"/><path d="M836 645Q834 637 845 631" stroke-opacity="0.39" stroke-width="1.3"/><path d="M452 653Q452 640 466 631" stroke-opacity="0.47" stroke-width="1.6"/><path d="M575 657Q572 644 591 635" stroke-opacity="0.55" stroke-width="1.6"/><path d="M593 645Q590 631 612 622" stroke-opacity="0.37" stroke-width="1.1"/><path d="M881 650Q878 636 901 627" stroke-opacity="0.51" stroke-width="1.3"/><path d="M856 669Q856 658 867 651" stroke-opacity="0.43" stroke-width="1.7"/><path d="M824 666Q822 652 843 643" stroke-opacity="0.32" stroke-width="1.6"/><path d="M674 659Q674 644 690 633" stroke-opacity="0.31" stroke-width="1.6"/><path d="M889 652Q888 641 906 634" stroke-opacity="0.46" stroke-width="1.2"/><path d="M464 655Q462 643 476 636" stroke-opacity="0.34" stroke-width="1.6"/><path d="M812 651Q810 642 824 635" stroke-opacity="0.58" stroke-width="1.3"/><path d="M601 671Q599 662 612 656" stroke-opacity="0.54" stroke-width="1.4"/><path d="M863 649Q862 637 880 628" stroke-opacity="0.53" stroke-width="1.7"/><path d="M495 653Q492 642 507 634" stroke-opacity="0.38" stroke-width="1.2"/><path d="M830 657Q828 649 840 643" stroke-opacity="0.41" stroke-width="1.1"/><path d="M471 644Q468 630 492 620" stroke-opacity="0.52" stroke-width="1.8"/><path d="M751 647Q749 636 765 628" stroke-opacity="0.46" stroke-width="1.0"/><path d="M954 663Q953 652 972 644" stroke-opacity="0.38" stroke-width="1.2"/><path d="M509 645Q507 632 528 624" stroke-opacity="0.36" stroke-width="1.5"/><path d="M912 672Q912 663 924 658" stroke-opacity="0.52" stroke-width="1.3"/><path d="M535 669Q534 658 547 651" stroke-opacity="0.41" stroke-width="1.7"/><path d="M566 645Q566 634 582 626" stroke-opacity="0.51" stroke-width="1.7"/><path d="M969 659Q966 647 981 639" stroke-opacity="0.47" stroke-width="1.1"/><path d="M822 649Q819 639 838 632" stroke-opacity="0.31" stroke-width="1.4"/><path d="M539 666Q539 659 549 654" stroke-opacity="0.54" stroke-width="1.3"/><path d="M591 664Q589 652 606 644" stroke-opacity="0.43" stroke-width="1.5"/><path d="M901 671Q899 662 911 656" stroke-opacity="0.47" stroke-width="1.3"/><path d="M541 647Q542 636 554 630" stroke-opacity="0.57" stroke-width="1.7"/><path d="M985 673Q982 661 1003 653" stroke-opacity="0.50" stroke-width="1.5"/><path d="M599 661Q598 646 618 636" stroke-opacity="0.39" stroke-width="1.3"/><path d="M935 645Q933 636 947 630" stroke-opacity="0.33" stroke-width="1.5"/><path d="M642 661Q641 651 656 643" stroke-opacity="0.42" stroke-width="1.1"/><path d="M533 671Q533 658 546 650" stroke-opacity="0.38" stroke-width="1.1"/><path d="M733 652Q730 640 747 633" stroke-opacity="0.47" stroke-width="1.1"/><path d="M723 662Q719 653 733 648" stroke-opacity="0.43" stroke-width="1.7"/><path d="M744 665Q744 651 759 641" stroke-opacity="0.52" stroke-width="1.1"/><path d="M903 656Q902 648 916 642" stroke-opacity="0.53" stroke-width="1.1"/><path d="M872 646Q869 636 884 630" stroke-opacity="0.48" stroke-width="1.2"/><path d="M601 665Q600 655 616 648" stroke-opacity="0.56" stroke-width="1.5"/><path d="M953 670Q951 662 965 656" stroke-opacity="0.53" stroke-width="1.5"/><path d="M901 648Q901 638 915 631" stroke-opacity="0.52" stroke-width="1.0"/><path d="M774 647Q771 636 791 628" stroke-opacity="0.58" stroke-width="1.5"/><path d="M575 650Q574 639 591 633" stroke-opacity="0.33" stroke-width="1.0"/><path d="M493 668Q491 659 505 653" stroke-opacity="0.51" stroke-width="1.3"/><path d="M512 670Q512 659 528 651" stroke-opacity="0.58" stroke-width="1.0"/><path d="M625 649Q625 638 641 631" stroke-opacity="0.31" stroke-width="1.1"/><path d="M896 664Q894 654 910 647" stroke-opacity="0.55" stroke-width="1.3"/><path d="M928 662Q925 654 937 648" stroke-opacity="0.57" stroke-width="1.5"/><path d="M455 649Q454 639 468 632" stroke-opacity="0.42" stroke-width="1.3"/><path d="M433 661Q432 650 444 643" stroke-opacity="0.60" stroke-width="1.0"/><path d="M513 664Q512 654 524 647" stroke-opacity="0.38" stroke-width="1.5"/><path d="M731 673Q730 656 747 645" stroke-opacity="0.53" stroke-width="1.7"/><path d="M871 663Q869 650 886 642" stroke-opacity="0.54" stroke-width="1.7"/><path d="M965 664Q965 655 979 649" stroke-opacity="0.45" stroke-width="1.5"/><path d="M630 661Q628 649 641 641" stroke-opacity="0.40" stroke-width="1.8"/><path d="M704 655Q702 645 715 638" stroke-opacity="0.34" stroke-width="1.0"/><path d="M926 658Q924 647 941 639" stroke-opacity="0.35" stroke-width="1.1"/><path d="M602 653Q602 640 619 631" stroke-opacity="0.40" stroke-width="1.7"/><path d="M763 646Q763 638 774 632" stroke-opacity="0.41" stroke-width="1.6"/><path d="M674 670Q674 662 684 656" stroke-opacity="0.38" stroke-width="1.2"/><path d="M443 649Q441 640 456 633" stroke-opacity="0.42" stroke-width="1.2"/><path d="M774 670Q773 657 788 648" stroke-opacity="0.59" stroke-width="1.5"/><path d="M475 668Q472 653 492 644" stroke-opacity="0.36" stroke-width="1.4"/><path d="M929 663Q927 648 946 637" stroke-opacity="0.52" stroke-width="1.5"/><path d="M661 664Q659 653 672 646" stroke-opacity="0.31" stroke-width="1.5"/><path d="M621 659Q619 646 635 638" stroke-opacity="0.30" stroke-width="1.7"/><path d="M752 674Q751 666 762 660" stroke-opacity="0.40" stroke-width="1.1"/><path d="M519 648Q519 634 534 624" stroke-opacity="0.43" stroke-width="1.4"/><path d="M765 661Q763 648 782 640" stroke-opacity="0.52" stroke-width="1.2"/><path d="M836 667Q835 653 852 643" stroke-opacity="0.59" stroke-width="1.4"/><path d="M589 660Q585 644 605 633" stroke-opacity="0.44" stroke-width="1.5"/><path d="M871 655Q871 639 889 628" stroke-opacity="0.33" stroke-width="1.0"/><path d="M506 646Q504 634 521 627" stroke-opacity="0.58" stroke-width="1.3"/><path d="M515 649Q512 637 534 629" stroke-opacity="0.31" stroke-width="1.6"/><path d="M568 673Q566 662 583 655" stroke-opacity="0.54" stroke-width="1.4"/><path d="M615 671Q611 663 626 658" stroke-opacity="0.49" stroke-width="1.3"/><path d="M923 646Q923 634 937 625" stroke-opacity="0.58" stroke-width="1.5"/><path d="M558 652Q555 642 570 635" stroke-opacity="0.36" stroke-width="1.6"/><path d="M796 653Q795 637 814 626" stroke-opacity="0.35" stroke-width="1.7"/><path d="M925 652Q923 639 944 631" stroke-opacity="0.40" stroke-width="1.4"/><path d="M938 649Q936 636 955 628" stroke-opacity="0.47" stroke-width="1.7"/><path d="M550 671Q550 661 564 654" stroke-opacity="0.35" stroke-width="1.7"/><path d="M997 653Q998 645 1006 639" stroke-opacity="0.30" stroke-width="1.7"/><path d="M516 666Q515 657 525 651" stroke-opacity="0.33" stroke-width="1.3"/><path d="M954 665Q950 652 974 644" stroke-opacity="0.37" stroke-width="1.6"/><path d="M823 645Q821 633 836 625" stroke-opacity="0.33" stroke-width="1.0"/><path d="M995 653Q993 638 1010 628" stroke-opacity="0.34" stroke-width="1.3"/><path d="M532 665Q531 656 544 651" stroke-opacity="0.33" stroke-width="1.3"/><path d="M713 672Q713 661 725 653" stroke-opacity="0.56" stroke-width="1.6"/><path d="M586 649Q582 639 596 632" stroke-opacity="0.45" stroke-width="1.3"/><path d="M747 655Q747 647 758 642" stroke-opacity="0.46" stroke-width="1.4"/><path d="M823 673Q821 660 843 651" stroke-opacity="0.40" stroke-width="1.3"/><path d="M985 656Q982 645 998 638" stroke-opacity="0.60" stroke-width="1.0"/><path d="M776 672Q775 662 789 656" stroke-opacity="0.37" stroke-width="1.2"/><path d="M496 669Q493 657 516 648" stroke-opacity="0.51" stroke-width="1.3"/><path d="M798 660Q795 651 813 645" stroke-opacity="0.52" stroke-width="1.7"/><path d="M721 662Q720 646 738 635" stroke-opacity="0.52" stroke-width="1.3"/><path d="M836 656Q835 644 851 637" stroke-opacity="0.40" stroke-width="1.5"/><path d="M740 651Q740 638 754 629" stroke-opacity="0.44" stroke-width="1.6"/><path d="M728 658Q728 648 738 642" stroke-opacity="0.46" stroke-width="1.4"/><path d="M731 668Q731 658 741 652" stroke-opacity="0.44" stroke-width="1.5"/><path d="M902 671Q900 655 917 645" stroke-opacity="0.55" stroke-width="1.7"/><path d="M500 649Q498 638 511 632" stroke-opacity="0.54" stroke-width="1.4"/><path d="M688 647Q687 637 704 631" stroke-opacity="0.43" stroke-width="1.4"/><path d="M885 667Q883 658 897 653" stroke-opacity="0.46" stroke-width="1.2"/><path d="M641 654Q639 643 652 635" stroke-opacity="0.47" stroke-width="1.0"/><path d="M532 666Q529 655 543 649" stroke-opacity="0.55" stroke-width="1.1"/><path d="M793 670Q792 660 804 654" stroke-opacity="0.49" stroke-width="1.3"/><path d="M455 657Q453 647 469 641" stroke-opacity="0.42" stroke-width="1.5"/><path d="M892 655Q892 644 906 637" stroke-opacity="0.36" stroke-width="1.8"/><path d="M836 655Q833 642 851 633" stroke-opacity="0.53" stroke-width="1.3"/><path d="M730 659Q726 645 750 636" stroke-opacity="0.48" stroke-width="1.4"/><path d="M693 669Q694 658 707 651" stroke-opacity="0.43" stroke-width="1.4"/><path d="M722 669Q720 657 739 648" stroke-opacity="0.31" stroke-width="1.5"/><path d="M746 667Q743 653 761 643" stroke-opacity="0.32" stroke-width="1.7"/><path d="M488 647Q485 633 505 625" stroke-opacity="0.50" stroke-width="1.6"/><path d="M705 646Q704 632 721 624" stroke-opacity="0.60" stroke-width="1.7"/><path d="M927 648Q924 638 940 631" stroke-opacity="0.60" stroke-width="1.2"/><path d="M580 653Q578 644 593 639" stroke-opacity="0.45" stroke-width="1.3"/><path d="M459 653Q459 640 479 631" stroke-opacity="0.38" stroke-width="1.2"/><path d="M460 660Q458 650 473 642" stroke-opacity="0.48" stroke-width="1.3"/><path d="M887 650Q883 635 906 626" stroke-opacity="0.39" stroke-width="1.4"/><path d="M663 661Q663 650 675 643" stroke-opacity="0.39" stroke-width="1.6"/><path d="M887 662Q886 652 903 645" stroke-opacity="0.56" stroke-width="1.0"/><path d="M677 663Q674 656 688 651" stroke-opacity="0.48" stroke-width="1.1"/><path d="M956 661Q955 647 973 638" stroke-opacity="0.50" stroke-width="1.2"/><path d="M550 669Q548 661 563 656" stroke-opacity="0.33" stroke-width="1.1"/><path d="M877 673Q875 662 891 655" stroke-opacity="0.57" stroke-width="1.5"/><path d="M518 646Q518 632 532 622" stroke-opacity="0.39" stroke-width="1.2"/><path d="M762 654Q762 641 775 632" stroke-opacity="0.40" stroke-width="1.7"/><path d="M517 668Q513 652 535 642" stroke-opacity="0.41" stroke-width="1.5"/><path d="M557 660Q557 652 568 646" stroke-opacity="0.43" stroke-width="1.5"/><path d="M495 669Q496 661 507 656" stroke-opacity="0.58" stroke-width="1.4"/><path d="M596 654Q596 641 613 632" stroke-opacity="0.33" stroke-width="1.4"/><path d="M922 662Q920 649 935 641" stroke-opacity="0.38" stroke-width="1.7"/><path d="M912 651Q911 635 927 624" stroke-opacity="0.59" stroke-width="1.3"/><path d="M968 664Q967 655 978 650" stroke-opacity="0.37" stroke-width="1.6"/><path d="M532 668Q531 657 543 650" stroke-opacity="0.33" stroke-width="1.4"/><path d="M879 662Q878 650 891 642" stroke-opacity="0.33" stroke-width="1.5"/><path d="M505 661Q504 651 518 644" stroke-opacity="0.35" stroke-width="1.1"/><path d="M967 654Q965 641 987 632" stroke-opacity="0.34" stroke-width="1.1"/><path d="M931 648Q928 636 946 629" stroke-opacity="0.44" stroke-width="1.1"/><path d="M735 659Q733 648 747 641" stroke-opacity="0.36" stroke-width="1.1"/><path d="M567 670Q563 660 583 652" stroke-opacity="0.58" stroke-width="1.4"/><path d="M881 661Q880 648 896 638" stroke-opacity="0.35" stroke-width="1.2"/><path d="M448 656Q448 644 461 636" stroke-opacity="0.33" stroke-width="1.5"/><path d="M563 662Q560 649 582 640" stroke-opacity="0.37" stroke-width="1.5"/><path d="M990 645Q990 633 1007 625" stroke-opacity="0.40" stroke-width="1.6"/><path d="M693 672Q692 665 704 660" stroke-opacity="0.42" stroke-width="1.1"/><path d="M570 666Q567 652 584 643" stroke-opacity="0.34" stroke-width="1.2"/><path d="M555 654Q555 640 577 631" stroke-opacity="0.44" stroke-width="1.4"/><path d="M874 671Q871 658 892 649" stroke-opacity="0.49" stroke-width="1.7"/><path d="M878 647Q875 633 894 624" stroke-opacity="0.59" stroke-width="1.5"/><path d="M855 648Q855 635 875 627" stroke-opacity="0.52" stroke-width="1.7"/><path d="M887 662Q887 651 903 645" stroke-opacity="0.56" stroke-width="1.2"/><path d="M978 660Q978 644 994 633" stroke-opacity="0.54" stroke-width="1.2"/><path d="M908 651Q905 642 919 636" stroke-opacity="0.45" stroke-width="1.7"/><path d="M821 665Q820 655 835 649" stroke-opacity="0.50" stroke-width="1.8"/><path d="M901 656Q901 648 912 643" stroke-opacity="0.40" stroke-width="1.5"/><path d="M907 668Q903 660 916 655" stroke-opacity="0.33" stroke-width="1.6"/><path d="M669 662Q666 651 682 643" stroke-opacity="0.41" stroke-width="1.7"/><path d="M783 653Q782 644 793 638" stroke-opacity="0.43" stroke-width="1.5"/><path d="M890 648Q890 634 904 624" stroke-opacity="0.36" stroke-width="1.2"/><path d="M976 655Q975 646 989 640" stroke-opacity="0.57" stroke-width="1.3"/><path d="M715 673Q712 662 732 655" stroke-opacity="0.55" stroke-width="1.1"/><path d="M731 644Q729 636 743 630" stroke-opacity="0.54" stroke-width="1.2"/><path d="M631 647Q629 636 647 629" stroke-opacity="0.41" stroke-width="1.7"/><path d="M939 664Q938 656 950 651" stroke-opacity="0.59" stroke-width="1.3"/><path d="M807 663Q806 652 820 645" stroke-opacity="0.57" stroke-width="1.4"/><path d="M637 673Q637 666 649 661" stroke-opacity="0.47" stroke-width="1.4"/><path d="M858 671Q855 658 876 650" stroke-opacity="0.40" stroke-width="1.1"/><path d="M973 671Q972 662 985 656" stroke-opacity="0.31" stroke-width="1.3"/><path d="M856 663Q854 654 869 648" stroke-opacity="0.46" stroke-width="1.3"/><path d="M988 663Q985 650 1006 641" stroke-opacity="0.59" stroke-width="1.6"/><path d="M824 652Q824 644 835 638" stroke-opacity="0.54" stroke-width="1.3"/><path d="M510 659Q509 644 526 634" stroke-opacity="0.35" stroke-width="1.2"/><path d="M460 653Q461 643 476 637" stroke-opacity="0.36" stroke-width="1.2"/><path d="M968 650Q965 640 980 633" stroke-opacity="0.38" stroke-width="1.3"/><path d="M650 673Q650 663 661 656" stroke-opacity="0.44" stroke-width="1.7"/><path d="M793 667Q793 657 804 650" stroke-opacity="0.44" stroke-width="1.4"/><path d="M812 667Q813 657 824 650" stroke-opacity="0.46" stroke-width="1.2"/><path d="M789 652Q789 637 804 627" stroke-opacity="0.47" stroke-width="1.3"/><path d="M966 652Q965 642 976 635" stroke-opacity="0.53" stroke-width="1.5"/><path d="M665 668Q664 659 675 654" stroke-opacity="0.59" stroke-width="1.5"/><path d="M824 667Q824 657 840 651" stroke-opacity="0.40" stroke-width="1.3"/><path d="M889 654Q888 646 902 640" stroke-opacity="0.46" stroke-width="1.5"/><path d="M944 648Q942 637 955 630" stroke-opacity="0.45" stroke-width="1.7"/><path d="M811 661Q808 651 824 644" stroke-opacity="0.55" stroke-width="1.6"/><path d="M908 649Q906 636 925 628" stroke-opacity="0.57" stroke-width="1.7"/><path d="M854 669Q851 657 871 649" stroke-opacity="0.51" stroke-width="1.6"/><path d="M779 652Q779 644 790 639" stroke-opacity="0.38" stroke-width="1.2"/><path d="M558 647Q557 635 576 627" stroke-opacity="0.41" stroke-width="1.6"/><path d="M471 669Q470 658 482 651" stroke-opacity="0.34" stroke-width="1.2"/><path d="M464 657Q460 646 480 639" stroke-opacity="0.55" stroke-width="1.1"/><path d="M558 663Q557 652 570 645" stroke-opacity="0.37" stroke-width="1.6"/><path d="M549 669Q546 655 567 646" stroke-opacity="0.53" stroke-width="1.0"/><path d="M718 657Q717 649 728 643" stroke-opacity="0.48" stroke-width="1.3"/><path d="M722 662Q722 653 735 647" stroke-opacity="0.54" stroke-width="1.8"/><path d="M618 674Q615 665 628 660" stroke-opacity="0.44" stroke-width="1.5"/><path d="M834 658Q832 647 845 640" stroke-opacity="0.38" stroke-width="1.2"/><path d="M850 659Q849 648 862 640" stroke-opacity="0.36" stroke-width="1.2"/><path d="M749 665Q750 651 770 641" stroke-opacity="0.58" stroke-width="1.6"/><path d="M840 646Q840 636 850 629" stroke-opacity="0.52" stroke-width="1.5"/><path d="M580 655Q581 646 592 640" stroke-opacity="0.39" stroke-width="1.0"/><path d="M530 655Q528 641 550 632" stroke-opacity="0.33" stroke-width="1.1"/><path d="M518 667Q518 657 534 650" stroke-opacity="0.54" stroke-width="1.4"/><path d="M898 648Q897 639 909 634" stroke-opacity="0.36" stroke-width="1.2"/><path d="M442 671Q442 659 461 651" stroke-opacity="0.43" stroke-width="1.6"/><path d="M649 668Q645 653 664 643" stroke-opacity="0.36" stroke-width="1.5"/><path d="M646 644Q644 631 665 622" stroke-opacity="0.31" stroke-width="1.7"/><path d="M734 646Q735 636 748 630" stroke-opacity="0.45" stroke-width="1.5"/><path d="M547 651Q544 636 565 626" stroke-opacity="0.48" stroke-width="1.1"/><path d="M544 658Q543 646 560 638" stroke-opacity="0.43" stroke-width="1.1"/><path d="M843 646Q842 634 857 626" stroke-opacity="0.51" stroke-width="1.2"/><path d="M800 665Q800 653 813 645" stroke-opacity="0.48" stroke-width="1.1"/><path d="M566 674Q566 664 577 658" stroke-opacity="0.55" stroke-width="1.5"/><path d="M853 645Q853 638 865 633" stroke-opacity="0.31" stroke-width="1.0"/><path d="M567 672Q567 663 579 657" stroke-opacity="0.49" stroke-width="1.7"/><path d="M580 649Q577 641 591 636" stroke-opacity="0.59" stroke-width="1.6"/><path d="M537 668Q534 659 548 653" stroke-opacity="0.54" stroke-width="1.7"/><path d="M952 644Q952 630 970 621" stroke-opacity="0.45" stroke-width="1.5"/><path d="M769 668Q768 659 778 653" stroke-opacity="0.39" stroke-width="1.3"/><path d="M434 666Q434 659 445 654" stroke-opacity="0.44" stroke-width="1.1"/><path d="M801 650Q801 639 812 631" stroke-opacity="0.46" stroke-width="1.3"/><path d="M484 666Q480 653 503 644" stroke-opacity="0.41" stroke-width="1.2"/><path d="M865 648Q864 637 882 630" stroke-opacity="0.30" stroke-width="1.1"/><path d="M495 665Q493 653 510 644" stroke-opacity="0.42" stroke-width="1.5"/><path d="M800 671Q800 659 818 651" stroke-opacity="0.55" stroke-width="1.6"/><path d="M447 664Q447 650 465 640" stroke-opacity="0.35" stroke-width="1.8"/><path d="M682 665Q680 655 693 649" stroke-opacity="0.40" stroke-width="1.1"/><path d="M682 673Q682 662 701 654" stroke-opacity="0.55" stroke-width="1.8"/><path d="M859 652Q856 642 871 636" stroke-opacity="0.37" stroke-width="1.7"/><path d="M955 654Q955 641 973 632" stroke-opacity="0.54" stroke-width="1.4"/><path d="M490 669Q488 659 503 652" stroke-opacity="0.46" stroke-width="1.8"/><path d="M522 660Q522 647 538 639" stroke-opacity="0.42" stroke-width="1.7"/><path d="M823 673Q821 664 833 658" stroke-opacity="0.57" stroke-width="1.0"/><path d="M578 665Q576 649 595 639" stroke-opacity="0.51" stroke-width="1.6"/><path d="M855 667Q852 657 866 650" stroke-opacity="0.51" stroke-width="1.2"/><path d="M578 673Q577 661 594 652" stroke-opacity="0.48" stroke-width="1.6"/><path d="M603 646Q601 637 612 631" stroke-opacity="0.34" stroke-width="1.1"/><path d="M711 673Q711 660 726 651" stroke-opacity="0.35" stroke-width="1.1"/><path d="M603 656Q602 643 619 634" stroke-opacity="0.33" stroke-width="1.7"/><path d="M625 669Q623 662 636 657" stroke-opacity="0.56" stroke-width="1.6"/><path d="M812 652Q813 644 821 639" stroke-opacity="0.35" stroke-width="1.5"/><path d="M765 664Q762 654 775 648" stroke-opacity="0.59" stroke-width="1.3"/><path d="M802 661Q798 651 812 644" stroke-opacity="0.56" stroke-width="1.1"/><path d="M979 655Q979 641 993 631" stroke-opacity="0.38" stroke-width="1.3"/><path d="M728 647Q726 638 741 632" stroke-opacity="0.41" stroke-width="1.6"/><path d="M558 650Q556 640 569 634" stroke-opacity="0.49" stroke-width="1.4"/><path d="M926 646Q923 634 943 626" stroke-opacity="0.31" stroke-width="1.4"/><path d="M496 658Q493 644 510 634" stroke-opacity="0.44" stroke-width="1.1"/><path d="M562 657Q560 648 571 642" stroke-opacity="0.44" stroke-width="1.7"/><path d="M746 646Q745 637 759 631" stroke-opacity="0.56" stroke-width="1.8"/><path d="M919 647Q916 632 938 623" stroke-opacity="0.35" stroke-width="1.7"/><path d="M551 646Q549 638 565 632" stroke-opacity="0.52" stroke-width="1.1"/><path d="M688 654Q686 645 700 639" stroke-opacity="0.34" stroke-width="1.8"/><path d="M705 649Q703 642 715 637" stroke-opacity="0.31" stroke-width="1.4"/><path d="M852 660Q851 651 864 644" stroke-opacity="0.50" stroke-width="1.1"/><path d="M888 672Q886 660 907 652" stroke-opacity="0.57" stroke-width="1.1"/><path d="M559 662Q557 646 575 636" stroke-opacity="0.31" stroke-width="1.4"/><path d="M510 650Q510 637 527 628" stroke-opacity="0.42" stroke-width="1.5"/><path d="M437 672Q436 663 449 657" stroke-opacity="0.58" stroke-width="1.4"/><path d="M995 663Q993 654 1008 648" stroke-opacity="0.60" stroke-width="1.4"/><path d="M559 673Q557 663 571 656" stroke-opacity="0.50" stroke-width="1.0"/><path d="M643 649Q642 634 658 623" stroke-opacity="0.38" stroke-width="1.4"/></g>
</g>
<path d="M441 630H997" stroke="#1a1a1a" stroke-width="1"/>
<g stroke="#fff" fill="none" filter="url(#blur06)"><path d="M755 645Q752 638 762 633" stroke-opacity="0.20" stroke-width="0.9"/><path d="M521 642Q518 634 533 629" stroke-opacity="0.11" stroke-width="0.9"/><path d="M768 641Q768 634 779 630" stroke-opacity="0.18" stroke-width="1.3"/><path d="M593 647Q594 639 602 633" stroke-opacity="0.09" stroke-width="0.8"/><path d="M605 639Q603 630 619 623" stroke-opacity="0.14" stroke-width="1.2"/><path d="M890 644Q888 635 899 629" stroke-opacity="0.16" stroke-width="1.1"/><path d="M887 647Q884 636 899 629" stroke-opacity="0.19" stroke-width="1.1"/><path d="M545 644Q543 637 553 632" stroke-opacity="0.14" stroke-width="1.1"/><path d="M486 645Q485 636 496 630" stroke-opacity="0.18" stroke-width="0.8"/><path d="M707 644Q705 635 719 629" stroke-opacity="0.20" stroke-width="1.2"/><path d="M574 641Q572 630 585 623" stroke-opacity="0.20" stroke-width="1.3"/><path d="M573 645Q573 638 583 633" stroke-opacity="0.10" stroke-width="0.9"/><path d="M564 639Q562 633 570 629" stroke-opacity="0.13" stroke-width="0.8"/><path d="M766 647Q766 639 777 633" stroke-opacity="0.13" stroke-width="0.9"/><path d="M711 636Q709 627 721 620" stroke-opacity="0.20" stroke-width="1.2"/><path d="M906 644Q907 635 918 630" stroke-opacity="0.10" stroke-width="1.2"/><path d="M611 639Q611 630 624 623" stroke-opacity="0.19" stroke-width="1.1"/><path d="M554 636Q552 628 566 623" stroke-opacity="0.09" stroke-width="0.8"/><path d="M541 644Q538 638 547 634" stroke-opacity="0.17" stroke-width="1.3"/><path d="M456 637Q453 628 470 622" stroke-opacity="0.12" stroke-width="1.1"/><path d="M622 641Q619 633 631 627" stroke-opacity="0.09" stroke-width="0.9"/><path d="M495 643Q495 634 506 628" stroke-opacity="0.17" stroke-width="1.0"/><path d="M716 638Q713 628 730 621" stroke-opacity="0.10" stroke-width="1.1"/><path d="M658 645Q658 638 667 634" stroke-opacity="0.09" stroke-width="1.1"/><path d="M551 644Q548 635 564 629" stroke-opacity="0.09" stroke-width="1.1"/><path d="M757 638Q754 631 766 627" stroke-opacity="0.16" stroke-width="0.9"/><path d="M588 641Q584 633 599 628" stroke-opacity="0.17" stroke-width="0.9"/><path d="M606 644Q606 635 617 629" stroke-opacity="0.10" stroke-width="1.0"/><path d="M811 639Q811 632 818 628" stroke-opacity="0.18" stroke-width="1.2"/><path d="M974 646Q974 638 983 633" stroke-opacity="0.09" stroke-width="1.1"/><path d="M494 637Q495 628 503 622" stroke-opacity="0.19" stroke-width="1.0"/><path d="M554 637Q552 629 564 624" stroke-opacity="0.17" stroke-width="1.1"/><path d="M873 637Q872 631 880 627" stroke-opacity="0.11" stroke-width="1.1"/><path d="M567 640Q567 632 578 627" stroke-opacity="0.12" stroke-width="1.0"/><path d="M957 647Q955 638 966 632" stroke-opacity="0.16" stroke-width="0.9"/><path d="M466 648Q464 637 477 630" stroke-opacity="0.15" stroke-width="0.9"/><path d="M483 645Q480 635 494 629" stroke-opacity="0.13" stroke-width="0.8"/><path d="M977 637Q974 630 987 625" stroke-opacity="0.09" stroke-width="0.8"/><path d="M536 642Q533 632 546 625" stroke-opacity="0.17" stroke-width="1.0"/><path d="M632 637Q629 631 642 627" stroke-opacity="0.11" stroke-width="1.2"/><path d="M937 647Q936 640 949 635" stroke-opacity="0.11" stroke-width="1.0"/><path d="M840 645Q841 638 847 634" stroke-opacity="0.09" stroke-width="1.2"/><path d="M632 639Q633 632 641 627" stroke-opacity="0.10" stroke-width="1.2"/><path d="M622 638Q620 628 633 622" stroke-opacity="0.13" stroke-width="1.2"/><path d="M921 643Q921 637 929 634" stroke-opacity="0.19" stroke-width="1.3"/><path d="M626 646Q624 636 637 629" stroke-opacity="0.12" stroke-width="1.0"/><path d="M654 637Q652 631 663 627" stroke-opacity="0.16" stroke-width="1.2"/><path d="M862 639Q863 629 876 623" stroke-opacity="0.17" stroke-width="1.2"/><path d="M894 639Q894 630 905 624" stroke-opacity="0.10" stroke-width="1.1"/><path d="M631 646Q631 639 641 634" stroke-opacity="0.19" stroke-width="0.9"/><path d="M963 645Q960 636 975 630" stroke-opacity="0.18" stroke-width="1.1"/><path d="M697 640Q697 631 710 625" stroke-opacity="0.11" stroke-width="1.0"/><path d="M583 637Q583 629 590 624" stroke-opacity="0.11" stroke-width="0.8"/><path d="M482 645Q481 638 491 634" stroke-opacity="0.18" stroke-width="1.3"/><path d="M616 644Q616 633 629 627" stroke-opacity="0.17" stroke-width="1.0"/><path d="M927 643Q927 637 936 633" stroke-opacity="0.14" stroke-width="1.0"/><path d="M675 647Q673 637 685 631" stroke-opacity="0.12" stroke-width="1.3"/><path d="M829 637Q828 627 840 619" stroke-opacity="0.13" stroke-width="1.2"/><path d="M682 637Q682 629 693 624" stroke-opacity="0.12" stroke-width="0.9"/><path d="M856 646Q857 639 866 635" stroke-opacity="0.13" stroke-width="1.0"/></g>
<path d="M445.5 378V254.5" stroke="#202020" stroke-width="1" fill="none"/>
<path d="M445 254.5H997" stroke="url(#topb)" stroke-width="1" fill="none"/>
<rect x="441" y="631" width="4" height="26" fill="#50b850" opacity="0.7"/>
<path d="M489 411 L516 418 L516 500 L508 505 L508 560 L489 560Z" fill="#a23c08" stroke="#1a1a1a" stroke-width="0.8"/>
<rect x="489" y="500" width="19" height="60" fill="#b05a28"/>
<rect x="489" y="452" width="12" height="24" fill="#08386e"/>
<rect x="489" y="476" width="8" height="30" fill="#2a6aa0"/>
<g clip-path="url(#bgclip)">
<path d="M516 496 H997 V578 H489 V560 H508 V505 L516 500Z" fill="url(#bgr)" filter="url(#blur06)"/>
<g stroke="#8ed08e" fill="none" filter="url(#blur1b)"><path d="M516.0 499 L518.8 493.2" stroke-width="1.7" stroke-opacity="0.79"/><path d="M518.7 499 L519.6 493.1" stroke-width="2.0" stroke-opacity="0.85"/><path d="M522.0 499 L524.9 495.4" stroke-width="2.5" stroke-opacity="0.87"/><path d="M525.6 499 L528.4 495.3" stroke-width="2.1" stroke-opacity="0.93"/><path d="M529.3 499 L532.1 494.6" stroke-width="1.7" stroke-opacity="0.71"/><path d="M532.3 499 L535.1 492.4" stroke-width="2.5" stroke-opacity="0.85"/><path d="M536.2 499 L537.1 493.8" stroke-width="2.1" stroke-opacity="0.94"/><path d="M539.0 499 L540.2 493.6" stroke-width="1.8" stroke-opacity="0.83"/><path d="M542.1 499 L542.8 494.1" stroke-width="1.5" stroke-opacity="0.80"/><path d="M545.5 499 L546.6 493.0" stroke-width="1.8" stroke-opacity="0.86"/><path d="M547.9 499 L550.6 493.6" stroke-width="1.7" stroke-opacity="0.88"/><path d="M551.3 499 L553.6 493.0" stroke-width="2.2" stroke-opacity="0.78"/><path d="M555.0 499 L555.6 492.3" stroke-width="2.4" stroke-opacity="0.83"/><path d="M557.1 499 L559.6 495.7" stroke-width="2.2" stroke-opacity="0.74"/><path d="M560.1 499 L563.1 493.4" stroke-width="1.8" stroke-opacity="0.93"/><path d="M562.6 499 L563.5 495.2" stroke-width="1.9" stroke-opacity="0.89"/><path d="M565.2 499 L566.2 495.4" stroke-width="1.6" stroke-opacity="0.76"/><path d="M567.8 499 L568.7 494.0" stroke-width="2.0" stroke-opacity="0.83"/><path d="M571.7 499 L574.6 494.1" stroke-width="2.0" stroke-opacity="0.76"/><path d="M574.9 499 L575.8 495.4" stroke-width="1.6" stroke-opacity="0.91"/><path d="M578.9 499 L580.2 494.4" stroke-width="1.9" stroke-opacity="0.81"/><path d="M582.2 499 L583.1 494.4" stroke-width="2.4" stroke-opacity="0.87"/><path d="M584.2 499 L586.6 492.6" stroke-width="1.9" stroke-opacity="0.89"/><path d="M588.1 499 L589.7 494.4" stroke-width="1.8" stroke-opacity="0.87"/><path d="M591.4 499 L594.3 493.1" stroke-width="1.6" stroke-opacity="0.81"/><path d="M595.1 499 L597.1 492.8" stroke-width="2.2" stroke-opacity="0.80"/><path d="M599.0 499 L600.5 493.8" stroke-width="1.7" stroke-opacity="0.73"/><path d="M602.8 499 L603.4 492.8" stroke-width="1.8" stroke-opacity="0.84"/><path d="M605.8 499 L608.5 494.5" stroke-width="1.8" stroke-opacity="0.86"/><path d="M609.7 499 L611.3 493.4" stroke-width="1.8" stroke-opacity="0.82"/><path d="M612.9 499 L614.0 492.9" stroke-width="1.9" stroke-opacity="0.82"/><path d="M615.6 499 L617.4 492.3" stroke-width="1.8" stroke-opacity="0.80"/><path d="M619.2 499 L621.5 495.4" stroke-width="1.5" stroke-opacity="0.76"/><path d="M621.4 499 L622.2 492.8" stroke-width="1.7" stroke-opacity="0.72"/><path d="M623.9 499 L626.2 493.1" stroke-width="2.4" stroke-opacity="0.98"/><path d="M627.0 499 L627.7 492.3" stroke-width="2.4" stroke-opacity="0.83"/><path d="M629.4 499 L632.0 493.0" stroke-width="1.9" stroke-opacity="0.73"/><path d="M633.1 499 L635.1 493.0" stroke-width="2.5" stroke-opacity="0.71"/><path d="M635.2 499 L635.8 495.5" stroke-width="2.2" stroke-opacity="0.89"/><path d="M637.5 499 L638.4 495.4" stroke-width="2.1" stroke-opacity="0.90"/><path d="M641.4 499 L644.3 494.6" stroke-width="1.9" stroke-opacity="0.82"/><path d="M643.9 499 L646.8 495.1" stroke-width="2.5" stroke-opacity="0.91"/><path d="M646.3 499 L647.1 495.3" stroke-width="1.9" stroke-opacity="0.92"/><path d="M648.4 499 L650.6 493.9" stroke-width="1.5" stroke-opacity="0.83"/><path d="M652.0 499 L653.6 493.7" stroke-width="2.4" stroke-opacity="0.88"/><path d="M654.6 499 L657.5 494.4" stroke-width="2.4" stroke-opacity="0.97"/><path d="M657.7 499 L658.7 495.4" stroke-width="1.9" stroke-opacity="0.91"/><path d="M659.8 499 L662.2 492.8" stroke-width="2.0" stroke-opacity="0.70"/><path d="M663.4 499 L665.5 494.3" stroke-width="2.1" stroke-opacity="0.92"/><path d="M666.2 499 L669.1 492.2" stroke-width="2.4" stroke-opacity="0.88"/><path d="M668.8 499 L670.0 494.5" stroke-width="2.4" stroke-opacity="0.94"/><path d="M672.4 499 L675.4 492.7" stroke-width="2.2" stroke-opacity="0.80"/><path d="M675.9 499 L677.9 495.0" stroke-width="1.7" stroke-opacity="0.96"/><path d="M678.9 499 L681.7 494.9" stroke-width="1.6" stroke-opacity="0.98"/><path d="M682.4 499 L684.8 495.4" stroke-width="2.1" stroke-opacity="0.97"/><path d="M685.6 499 L688.4 494.3" stroke-width="1.6" stroke-opacity="0.93"/><path d="M687.8 499 L688.5 494.9" stroke-width="2.4" stroke-opacity="0.83"/><path d="M691.2 499 L693.5 495.0" stroke-width="2.1" stroke-opacity="0.73"/><path d="M694.2 499 L695.2 493.1" stroke-width="2.2" stroke-opacity="0.78"/><path d="M696.9 499 L699.8 492.3" stroke-width="2.5" stroke-opacity="0.83"/><path d="M700.1 499 L702.5 492.8" stroke-width="2.0" stroke-opacity="0.96"/><path d="M702.9 499 L704.6 492.2" stroke-width="1.6" stroke-opacity="0.92"/><path d="M705.2 499 L705.8 493.3" stroke-width="2.5" stroke-opacity="0.86"/><path d="M708.7 499 L710.8 495.5" stroke-width="1.9" stroke-opacity="0.77"/><path d="M712.3 499 L714.0 495.9" stroke-width="1.6" stroke-opacity="0.96"/><path d="M716.1 499 L717.7 495.9" stroke-width="2.0" stroke-opacity="0.92"/><path d="M719.5 499 L722.4 494.6" stroke-width="1.7" stroke-opacity="0.74"/><path d="M723.2 499 L724.1 495.5" stroke-width="2.0" stroke-opacity="0.80"/><path d="M725.5 499 L727.2 492.3" stroke-width="2.3" stroke-opacity="0.78"/><path d="M729.3 499 L732.1 495.1" stroke-width="2.1" stroke-opacity="0.99"/><path d="M732.9 499 L734.7 493.5" stroke-width="2.4" stroke-opacity="0.83"/><path d="M735.1 499 L737.6 492.3" stroke-width="2.2" stroke-opacity="0.92"/><path d="M737.5 499 L740.1 494.1" stroke-width="2.5" stroke-opacity="0.98"/><path d="M739.8 499 L741.7 493.3" stroke-width="1.9" stroke-opacity="0.75"/><path d="M742.1 499 L743.9 494.1" stroke-width="1.8" stroke-opacity="0.81"/><path d="M745.2 499 L747.2 493.0" stroke-width="1.7" stroke-opacity="0.97"/><path d="M748.0 499 L750.9 492.2" stroke-width="1.6" stroke-opacity="0.87"/><path d="M751.9 499 L753.8 494.5" stroke-width="1.8" stroke-opacity="0.71"/><path d="M754.3 499 L755.5 495.5" stroke-width="2.1" stroke-opacity="0.87"/><path d="M758.2 499 L759.6 493.3" stroke-width="2.4" stroke-opacity="0.89"/><path d="M761.3 499 L763.5 492.5" stroke-width="1.9" stroke-opacity="0.88"/><path d="M763.9 499 L765.0 492.1" stroke-width="2.5" stroke-opacity="0.72"/><path d="M765.9 499 L766.9 493.8" stroke-width="2.0" stroke-opacity="0.74"/><path d="M769.6 499 L771.8 493.3" stroke-width="2.4" stroke-opacity="1.00"/><path d="M772.9 499 L773.4 493.1" stroke-width="1.5" stroke-opacity="0.83"/><path d="M776.9 499 L778.8 494.7" stroke-width="1.5" stroke-opacity="0.82"/><path d="M780.7 499 L783.2 493.6" stroke-width="1.5" stroke-opacity="0.76"/><path d="M783.0 499 L783.8 492.7" stroke-width="2.4" stroke-opacity="0.78"/><path d="M786.8 499 L788.1 493.9" stroke-width="2.5" stroke-opacity="0.82"/><path d="M790.2 499 L792.8 495.7" stroke-width="2.5" stroke-opacity="0.73"/><path d="M793.7 499 L794.6 494.9" stroke-width="1.9" stroke-opacity="0.90"/><path d="M797.6 499 L800.6 492.0" stroke-width="2.1" stroke-opacity="0.90"/><path d="M799.9 499 L801.8 493.1" stroke-width="1.9" stroke-opacity="0.97"/><path d="M802.4 499 L803.3 495.4" stroke-width="1.6" stroke-opacity="0.88"/><path d="M806.0 499 L807.8 495.4" stroke-width="2.1" stroke-opacity="0.87"/><path d="M808.9 499 L809.4 493.8" stroke-width="1.6" stroke-opacity="0.83"/><path d="M811.3 499 L812.4 493.0" stroke-width="2.3" stroke-opacity="0.77"/><path d="M813.5 499 L815.0 494.1" stroke-width="1.8" stroke-opacity="0.93"/><path d="M816.0 499 L818.5 493.3" stroke-width="2.0" stroke-opacity="0.85"/><path d="M819.8 499 L820.8 493.6" stroke-width="1.6" stroke-opacity="0.72"/><path d="M822.5 499 L824.6 495.6" stroke-width="1.9" stroke-opacity="0.79"/><path d="M825.5 499 L826.6 492.3" stroke-width="1.7" stroke-opacity="0.79"/><path d="M828.1 499 L830.4 492.4" stroke-width="1.9" stroke-opacity="0.75"/><path d="M830.2 499 L832.9 495.5" stroke-width="2.1" stroke-opacity="0.75"/><path d="M833.5 499 L835.2 495.8" stroke-width="1.8" stroke-opacity="0.73"/><path d="M837.0 499 L838.7 493.1" stroke-width="1.7" stroke-opacity="0.90"/><path d="M839.8 499 L840.6 493.4" stroke-width="2.4" stroke-opacity="0.70"/><path d="M842.3 499 L843.3 494.4" stroke-width="1.6" stroke-opacity="0.91"/><path d="M846.3 499 L847.4 494.7" stroke-width="2.2" stroke-opacity="0.77"/><path d="M849.1 499 L850.6 493.2" stroke-width="1.7" stroke-opacity="0.72"/><path d="M852.2 499 L855.0 492.0" stroke-width="1.6" stroke-opacity="0.85"/><path d="M855.1 499 L857.3 495.2" stroke-width="2.0" stroke-opacity="0.94"/><path d="M857.7 499 L860.3 492.3" stroke-width="2.0" stroke-opacity="0.74"/><path d="M860.7 499 L862.9 495.5" stroke-width="2.2" stroke-opacity="0.87"/><path d="M864.6 499 L866.9 495.8" stroke-width="2.3" stroke-opacity="0.73"/><path d="M867.3 499 L869.2 495.8" stroke-width="2.2" stroke-opacity="0.80"/><path d="M870.7 499 L873.0 494.5" stroke-width="1.8" stroke-opacity="0.99"/><path d="M873.5 499 L874.3 496.0" stroke-width="2.2" stroke-opacity="0.96"/><path d="M876.8 499 L879.5 495.4" stroke-width="2.2" stroke-opacity="0.73"/><path d="M879.6 499 L880.1 493.3" stroke-width="1.5" stroke-opacity="0.81"/><path d="M883.3 499 L884.6 492.0" stroke-width="2.4" stroke-opacity="0.94"/><path d="M887.1 499 L890.0 493.6" stroke-width="2.1" stroke-opacity="0.98"/><path d="M890.2 499 L892.0 495.2" stroke-width="2.0" stroke-opacity="0.80"/><path d="M892.9 499 L894.9 494.0" stroke-width="1.7" stroke-opacity="0.78"/><path d="M895.9 499 L897.5 494.0" stroke-width="2.2" stroke-opacity="0.76"/><path d="M899.0 499 L901.4 494.9" stroke-width="2.2" stroke-opacity="0.93"/><path d="M902.0 499 L904.9 495.0" stroke-width="2.0" stroke-opacity="0.81"/><path d="M904.6 499 L906.9 494.4" stroke-width="2.3" stroke-opacity="0.84"/><path d="M908.1 499 L909.7 495.1" stroke-width="1.9" stroke-opacity="0.79"/><path d="M910.8 499 L913.1 493.0" stroke-width="1.7" stroke-opacity="0.77"/><path d="M914.4 499 L916.6 493.4" stroke-width="2.1" stroke-opacity="0.91"/><path d="M916.9 499 L918.3 495.8" stroke-width="1.5" stroke-opacity="0.99"/><path d="M920.0 499 L922.9 493.3" stroke-width="2.3" stroke-opacity="0.77"/><path d="M922.6 499 L925.1 495.6" stroke-width="2.2" stroke-opacity="0.85"/><path d="M925.4 499 L927.1 494.9" stroke-width="2.2" stroke-opacity="0.97"/><path d="M929.1 499 L930.7 492.5" stroke-width="1.9" stroke-opacity="0.79"/><path d="M933.0 499 L933.9 495.3" stroke-width="1.8" stroke-opacity="0.98"/><path d="M936.7 499 L939.4 494.7" stroke-width="2.4" stroke-opacity="0.83"/><path d="M939.1 499 L940.6 492.9" stroke-width="1.6" stroke-opacity="0.97"/><path d="M942.0 499 L944.0 494.4" stroke-width="1.8" stroke-opacity="0.71"/><path d="M944.8 499 L945.3 494.5" stroke-width="1.9" stroke-opacity="0.93"/><path d="M947.4 499 L949.5 493.3" stroke-width="1.7" stroke-opacity="0.71"/><path d="M950.8 499 L952.0 493.6" stroke-width="1.7" stroke-opacity="0.96"/><path d="M954.6 499 L956.6 495.1" stroke-width="2.1" stroke-opacity="0.80"/><path d="M956.7 499 L958.8 494.7" stroke-width="2.1" stroke-opacity="0.85"/><path d="M958.9 499 L960.2 495.1" stroke-width="1.9" stroke-opacity="0.81"/><path d="M962.7 499 L965.7 495.5" stroke-width="1.7" stroke-opacity="0.96"/><path d="M965.2 499 L966.7 493.7" stroke-width="1.5" stroke-opacity="0.94"/><path d="M968.8 499 L971.3 494.9" stroke-width="2.0" stroke-opacity="1.00"/><path d="M970.9 499 L972.0 494.5" stroke-width="2.1" stroke-opacity="0.93"/><path d="M974.6 499 L976.1 493.8" stroke-width="2.3" stroke-opacity="0.73"/><path d="M977.2 499 L978.8 493.0" stroke-width="2.5" stroke-opacity="0.73"/><path d="M980.1 499 L980.6 495.1" stroke-width="1.6" stroke-opacity="0.73"/><path d="M982.8 499 L984.6 494.3" stroke-width="1.8" stroke-opacity="0.91"/><path d="M985.8 499 L986.8 492.1" stroke-width="2.0" stroke-opacity="0.85"/><path d="M988.6 499 L989.6 492.6" stroke-width="2.4" stroke-opacity="0.81"/><path d="M991.3 499 L993.2 493.5" stroke-width="1.8" stroke-opacity="0.73"/><path d="M995.2 499 L996.0 494.5" stroke-width="2.2" stroke-opacity="0.86"/><path d="M997.8 499 L1000.4 494.7" stroke-width="1.8" stroke-opacity="0.83"/></g>
<g clip-path="url(#bgclip2)">
<g stroke="#fff" fill="none" filter="url(#blur1b)"><path d="M668 537Q666 528 676 522" stroke-opacity="0.36" stroke-width="1.4"/><path d="M601 568Q598 557 612 549" stroke-opacity="0.43" stroke-width="1.0"/><path d="M594 581Q592 568 607 559" stroke-opacity="0.37" stroke-width="1.2"/><path d="M570 556Q568 542 580 532" stroke-opacity="0.28" stroke-width="1.6"/><path d="M569 546Q566 535 578 528" stroke-opacity="0.37" stroke-width="1.6"/><path d="M550 530Q548 516 562 507" stroke-opacity="0.44" stroke-width="1.6"/><path d="M596 541Q594 526 608 516" stroke-opacity="0.34" stroke-width="1.4"/><path d="M984 570Q982 556 993 546" stroke-opacity="0.26" stroke-width="1.9"/><path d="M985 563Q982 553 996 547" stroke-opacity="0.46" stroke-width="1.5"/><path d="M488 575Q487 565 500 557" stroke-opacity="0.38" stroke-width="1.9"/><path d="M586 576Q583 564 592 556" stroke-opacity="0.27" stroke-width="1.1"/><path d="M805 515Q802 506 811 499" stroke-opacity="0.48" stroke-width="1.9"/><path d="M932 583Q929 572 944 565" stroke-opacity="0.48" stroke-width="1.8"/><path d="M861 524Q859 516 870 510" stroke-opacity="0.40" stroke-width="1.9"/><path d="M555 561Q552 549 566 542" stroke-opacity="0.30" stroke-width="2.0"/><path d="M626 564Q625 548 637 538" stroke-opacity="0.35" stroke-width="1.2"/><path d="M593 580Q591 569 602 562" stroke-opacity="0.26" stroke-width="1.8"/><path d="M867 574Q865 563 875 555" stroke-opacity="0.43" stroke-width="1.7"/><path d="M691 547Q689 538 701 533" stroke-opacity="0.38" stroke-width="1.8"/><path d="M583 562Q579 552 593 545" stroke-opacity="0.32" stroke-width="1.6"/><path d="M731 535Q728 522 740 513" stroke-opacity="0.25" stroke-width="1.8"/><path d="M612 571Q610 558 623 550" stroke-opacity="0.28" stroke-width="1.8"/><path d="M632 573Q631 559 645 550" stroke-opacity="0.36" stroke-width="1.7"/><path d="M975 521Q974 512 982 505" stroke-opacity="0.29" stroke-width="1.2"/><path d="M931 536Q929 526 937 520" stroke-opacity="0.30" stroke-width="1.5"/><path d="M760 540Q755 529 771 521" stroke-opacity="0.48" stroke-width="1.2"/><path d="M500 566Q497 553 511 545" stroke-opacity="0.45" stroke-width="1.3"/><path d="M858 524Q855 511 869 503" stroke-opacity="0.37" stroke-width="1.1"/><path d="M815 560Q814 551 822 544" stroke-opacity="0.28" stroke-width="1.8"/><path d="M933 510Q930 499 939 492" stroke-opacity="0.27" stroke-width="1.5"/><path d="M610 529Q609 517 619 509" stroke-opacity="0.43" stroke-width="1.1"/><path d="M596 507Q595 495 603 487" stroke-opacity="0.45" stroke-width="2.0"/><path d="M589 509Q588 494 600 484" stroke-opacity="0.35" stroke-width="1.3"/><path d="M518 580Q515 567 527 559" stroke-opacity="0.44" stroke-width="1.8"/><path d="M728 520Q725 509 739 502" stroke-opacity="0.42" stroke-width="1.6"/><path d="M720 551Q719 541 728 534" stroke-opacity="0.27" stroke-width="1.4"/><path d="M938 582Q937 574 945 569" stroke-opacity="0.46" stroke-width="1.5"/><path d="M548 529Q545 516 561 507" stroke-opacity="0.41" stroke-width="1.7"/><path d="M822 508Q820 495 831 487" stroke-opacity="0.33" stroke-width="1.1"/><path d="M829 528Q826 513 839 503" stroke-opacity="0.45" stroke-width="1.1"/><path d="M860 511Q859 494 869 483" stroke-opacity="0.34" stroke-width="1.2"/><path d="M685 545Q683 533 693 524" stroke-opacity="0.33" stroke-width="2.0"/><path d="M679 540Q677 531 689 525" stroke-opacity="0.41" stroke-width="1.8"/><path d="M684 565Q681 554 691 546" stroke-opacity="0.36" stroke-width="1.9"/><path d="M586 540Q582 525 596 515" stroke-opacity="0.38" stroke-width="1.4"/><path d="M968 576Q966 566 977 559" stroke-opacity="0.26" stroke-width="1.4"/><path d="M956 530Q952 517 968 509" stroke-opacity="0.48" stroke-width="1.1"/><path d="M637 562Q633 553 643 548" stroke-opacity="0.37" stroke-width="1.0"/><path d="M559 523Q555 514 564 507" stroke-opacity="0.38" stroke-width="1.1"/><path d="M907 539Q906 528 914 521" stroke-opacity="0.26" stroke-width="1.7"/><path d="M531 580Q530 568 541 561" stroke-opacity="0.28" stroke-width="1.1"/><path d="M841 552Q838 537 851 527" stroke-opacity="0.30" stroke-width="1.4"/><path d="M626 552Q625 541 634 533" stroke-opacity="0.27" stroke-width="1.8"/><path d="M738 524Q736 515 745 509" stroke-opacity="0.43" stroke-width="1.4"/><path d="M694 576Q694 566 705 560" stroke-opacity="0.50" stroke-width="1.9"/><path d="M614 570Q613 556 623 546" stroke-opacity="0.41" stroke-width="1.8"/><path d="M770 512Q767 496 780 485" stroke-opacity="0.40" stroke-width="1.2"/><path d="M721 562Q717 553 728 547" stroke-opacity="0.37" stroke-width="1.6"/><path d="M837 509Q835 501 847 495" stroke-opacity="0.36" stroke-width="1.4"/><path d="M842 564Q840 550 852 541" stroke-opacity="0.38" stroke-width="1.2"/><path d="M974 581Q971 568 989 560" stroke-opacity="0.46" stroke-width="1.2"/><path d="M866 562Q865 547 881 537" stroke-opacity="0.32" stroke-width="1.8"/><path d="M727 530Q726 520 738 513" stroke-opacity="0.46" stroke-width="1.7"/><path d="M569 518Q566 505 577 495" stroke-opacity="0.28" stroke-width="1.2"/><path d="M853 523Q852 508 864 497" stroke-opacity="0.33" stroke-width="1.3"/><path d="M685 507Q681 495 694 487" stroke-opacity="0.47" stroke-width="1.4"/><path d="M480 581Q476 570 487 563" stroke-opacity="0.27" stroke-width="1.7"/><path d="M783 545Q783 535 790 528" stroke-opacity="0.34" stroke-width="2.0"/><path d="M941 516Q939 499 950 488" stroke-opacity="0.45" stroke-width="1.7"/><path d="M766 569Q763 560 774 554" stroke-opacity="0.35" stroke-width="1.2"/><path d="M848 551Q846 537 861 527" stroke-opacity="0.48" stroke-width="1.8"/><path d="M775 531Q771 515 787 504" stroke-opacity="0.33" stroke-width="1.7"/><path d="M964 556Q963 544 978 536" stroke-opacity="0.36" stroke-width="1.5"/><path d="M875 531Q874 522 883 516" stroke-opacity="0.31" stroke-width="1.7"/><path d="M944 516Q942 507 952 500" stroke-opacity="0.49" stroke-width="2.0"/><path d="M712 568Q711 554 720 544" stroke-opacity="0.29" stroke-width="1.1"/><path d="M715 507Q715 495 725 487" stroke-opacity="0.35" stroke-width="1.8"/><path d="M885 552Q883 541 893 534" stroke-opacity="0.35" stroke-width="1.6"/><path d="M743 531Q739 520 756 512" stroke-opacity="0.33" stroke-width="1.0"/><path d="M529 510Q527 500 540 492" stroke-opacity="0.49" stroke-width="1.8"/><path d="M785 551Q782 543 791 537" stroke-opacity="0.41" stroke-width="1.1"/><path d="M762 535Q758 523 771 514" stroke-opacity="0.43" stroke-width="1.8"/><path d="M791 515Q791 503 804 495" stroke-opacity="0.44" stroke-width="1.0"/><path d="M937 558Q936 548 947 542" stroke-opacity="0.47" stroke-width="1.2"/><path d="M780 536Q778 526 790 519" stroke-opacity="0.33" stroke-width="1.5"/><path d="M963 550Q962 535 976 524" stroke-opacity="0.26" stroke-width="1.5"/><path d="M767 563Q765 547 781 536" stroke-opacity="0.41" stroke-width="1.5"/><path d="M847 580Q846 571 853 565" stroke-opacity="0.26" stroke-width="1.8"/><path d="M496 557Q493 541 506 531" stroke-opacity="0.31" stroke-width="1.7"/><path d="M755 553Q755 543 764 535" stroke-opacity="0.44" stroke-width="2.0"/><path d="M609 546Q608 535 617 527" stroke-opacity="0.29" stroke-width="1.6"/><path d="M883 579Q881 570 888 564" stroke-opacity="0.48" stroke-width="1.2"/><path d="M917 537Q913 526 930 518" stroke-opacity="0.33" stroke-width="1.2"/><path d="M550 530Q546 516 561 507" stroke-opacity="0.45" stroke-width="1.5"/><path d="M554 570Q554 554 565 544" stroke-opacity="0.45" stroke-width="1.2"/><path d="M481 574Q479 558 490 547" stroke-opacity="0.44" stroke-width="1.6"/><path d="M913 583Q913 573 923 566" stroke-opacity="0.33" stroke-width="1.7"/><path d="M836 572Q833 559 845 550" stroke-opacity="0.39" stroke-width="1.1"/><path d="M927 575Q926 566 936 559" stroke-opacity="0.28" stroke-width="1.8"/><path d="M878 530Q878 520 885 514" stroke-opacity="0.37" stroke-width="1.8"/><path d="M563 514Q560 504 574 498" stroke-opacity="0.27" stroke-width="1.8"/><path d="M527 558Q526 549 534 543" stroke-opacity="0.47" stroke-width="1.4"/><path d="M714 508Q713 497 721 489" stroke-opacity="0.43" stroke-width="1.8"/><path d="M756 561Q754 551 763 545" stroke-opacity="0.32" stroke-width="1.7"/><path d="M591 531Q590 522 602 515" stroke-opacity="0.37" stroke-width="1.4"/><path d="M959 579Q959 568 969 560" stroke-opacity="0.31" stroke-width="1.3"/><path d="M534 545Q531 530 543 519" stroke-opacity="0.50" stroke-width="1.5"/><path d="M679 571Q675 556 691 545" stroke-opacity="0.41" stroke-width="1.7"/><path d="M960 557Q957 547 969 540" stroke-opacity="0.36" stroke-width="1.5"/><path d="M954 577Q954 561 967 550" stroke-opacity="0.28" stroke-width="1.9"/><path d="M813 574Q809 564 825 557" stroke-opacity="0.46" stroke-width="1.8"/><path d="M675 571Q672 561 684 555" stroke-opacity="0.35" stroke-width="1.2"/><path d="M896 563Q893 555 905 550" stroke-opacity="0.34" stroke-width="1.4"/><path d="M780 575Q777 560 794 550" stroke-opacity="0.28" stroke-width="1.1"/><path d="M750 551Q747 541 762 534" stroke-opacity="0.34" stroke-width="1.4"/><path d="M569 579Q567 566 580 558" stroke-opacity="0.31" stroke-width="1.3"/><path d="M737 541Q733 525 750 514" stroke-opacity="0.26" stroke-width="1.2"/><path d="M660 567Q658 551 670 540" stroke-opacity="0.36" stroke-width="1.5"/><path d="M757 509Q756 501 765 495" stroke-opacity="0.35" stroke-width="1.9"/><path d="M906 530Q905 521 914 515" stroke-opacity="0.31" stroke-width="1.0"/><path d="M733 509Q730 495 746 486" stroke-opacity="0.36" stroke-width="1.2"/><path d="M577 520Q575 505 588 495" stroke-opacity="0.34" stroke-width="1.8"/><path d="M790 557Q786 546 799 538" stroke-opacity="0.49" stroke-width="1.7"/><path d="M757 556Q754 546 763 540" stroke-opacity="0.46" stroke-width="1.0"/><path d="M711 574Q708 560 725 551" stroke-opacity="0.31" stroke-width="1.7"/><path d="M635 562Q634 552 646 545" stroke-opacity="0.45" stroke-width="2.0"/><path d="M677 583Q673 575 685 570" stroke-opacity="0.39" stroke-width="1.4"/><path d="M880 531Q879 521 890 515" stroke-opacity="0.44" stroke-width="1.5"/><path d="M499 566Q495 556 507 549" stroke-opacity="0.31" stroke-width="1.7"/><path d="M877 556Q876 544 888 537" stroke-opacity="0.30" stroke-width="1.5"/><path d="M791 563Q788 553 798 546" stroke-opacity="0.27" stroke-width="1.3"/><path d="M859 551Q856 542 868 536" stroke-opacity="0.44" stroke-width="1.1"/><path d="M530 526Q529 513 539 504" stroke-opacity="0.48" stroke-width="1.3"/><path d="M870 560Q869 547 879 538" stroke-opacity="0.49" stroke-width="1.0"/><path d="M652 531Q651 521 659 514" stroke-opacity="0.26" stroke-width="1.8"/><path d="M641 507Q637 491 652 480" stroke-opacity="0.28" stroke-width="1.4"/><path d="M542 520Q540 510 551 503" stroke-opacity="0.33" stroke-width="1.5"/><path d="M883 562Q882 553 894 546" stroke-opacity="0.39" stroke-width="1.5"/><path d="M651 516Q647 501 665 491" stroke-opacity="0.48" stroke-width="1.9"/><path d="M497 561Q497 551 506 544" stroke-opacity="0.34" stroke-width="1.5"/><path d="M826 521Q826 507 836 498" stroke-opacity="0.30" stroke-width="1.7"/><path d="M501 527Q500 518 507 511" stroke-opacity="0.29" stroke-width="1.8"/><path d="M530 555Q526 538 540 527" stroke-opacity="0.44" stroke-width="1.5"/><path d="M965 532Q962 522 976 515" stroke-opacity="0.49" stroke-width="1.9"/><path d="M584 549Q583 531 594 520" stroke-opacity="0.44" stroke-width="1.7"/><path d="M792 514Q791 497 802 485" stroke-opacity="0.43" stroke-width="1.3"/><path d="M836 538Q835 522 844 512" stroke-opacity="0.35" stroke-width="1.8"/><path d="M725 569Q721 559 734 552" stroke-opacity="0.37" stroke-width="1.1"/><path d="M927 559Q926 548 939 542" stroke-opacity="0.49" stroke-width="1.1"/><path d="M846 563Q846 548 854 539" stroke-opacity="0.36" stroke-width="1.6"/><path d="M904 527Q901 520 912 515" stroke-opacity="0.26" stroke-width="1.1"/><path d="M997 564Q997 553 1004 546" stroke-opacity="0.42" stroke-width="1.6"/><path d="M548 538Q545 521 557 509" stroke-opacity="0.26" stroke-width="2.0"/><path d="M534 580Q530 566 548 557" stroke-opacity="0.42" stroke-width="1.5"/><path d="M735 517Q732 506 747 498" stroke-opacity="0.47" stroke-width="1.4"/><path d="M618 525Q617 513 629 505" stroke-opacity="0.47" stroke-width="1.5"/><path d="M747 583Q744 572 752 565" stroke-opacity="0.33" stroke-width="1.1"/><path d="M697 509Q696 493 710 482" stroke-opacity="0.42" stroke-width="1.7"/><path d="M874 530Q872 515 884 505" stroke-opacity="0.40" stroke-width="1.8"/><path d="M567 533Q567 519 581 510" stroke-opacity="0.28" stroke-width="1.2"/><path d="M535 562Q534 549 548 539" stroke-opacity="0.38" stroke-width="1.6"/><path d="M959 557Q957 543 970 534" stroke-opacity="0.44" stroke-width="1.6"/><path d="M547 539Q545 527 556 520" stroke-opacity="0.34" stroke-width="1.4"/><path d="M702 535Q697 518 712 506" stroke-opacity="0.43" stroke-width="1.4"/><path d="M713 552Q709 540 721 533" stroke-opacity="0.47" stroke-width="1.9"/><path d="M629 542Q628 531 635 523" stroke-opacity="0.46" stroke-width="1.2"/><path d="M613 560Q610 546 624 536" stroke-opacity="0.31" stroke-width="1.8"/><path d="M929 573Q929 564 937 558" stroke-opacity="0.43" stroke-width="1.5"/><path d="M555 511Q554 495 564 485" stroke-opacity="0.42" stroke-width="1.5"/><path d="M944 579Q942 564 952 555" stroke-opacity="0.36" stroke-width="1.2"/><path d="M963 563Q960 553 969 547" stroke-opacity="0.39" stroke-width="1.3"/><path d="M709 569Q706 560 717 554" stroke-opacity="0.49" stroke-width="2.0"/><path d="M650 553Q649 544 657 538" stroke-opacity="0.41" stroke-width="1.3"/><path d="M498 516Q495 502 506 493" stroke-opacity="0.40" stroke-width="1.9"/><path d="M748 526Q747 512 757 503" stroke-opacity="0.29" stroke-width="1.3"/><path d="M708 577Q705 567 714 560" stroke-opacity="0.30" stroke-width="1.3"/><path d="M685 565Q683 554 695 546" stroke-opacity="0.44" stroke-width="1.9"/><path d="M701 578Q699 569 712 563" stroke-opacity="0.42" stroke-width="1.4"/><path d="M621 517Q619 501 633 490" stroke-opacity="0.37" stroke-width="1.5"/><path d="M588 520Q586 509 597 502" stroke-opacity="0.25" stroke-width="1.7"/><path d="M705 511Q705 500 712 493" stroke-opacity="0.39" stroke-width="1.3"/><path d="M609 529Q608 518 617 511" stroke-opacity="0.45" stroke-width="1.7"/><path d="M940 557Q937 547 946 541" stroke-opacity="0.31" stroke-width="1.5"/><path d="M907 552Q907 539 916 531" stroke-opacity="0.44" stroke-width="1.3"/><path d="M504 583Q500 573 514 567" stroke-opacity="0.41" stroke-width="1.4"/><path d="M942 529Q942 520 948 513" stroke-opacity="0.49" stroke-width="1.6"/><path d="M835 528Q834 517 841 509" stroke-opacity="0.26" stroke-width="1.6"/><path d="M662 521Q659 510 674 503" stroke-opacity="0.29" stroke-width="1.6"/><path d="M822 546Q818 537 831 531" stroke-opacity="0.29" stroke-width="1.2"/><path d="M747 543Q747 531 759 523" stroke-opacity="0.37" stroke-width="1.0"/><path d="M912 507Q910 496 919 488" stroke-opacity="0.45" stroke-width="1.1"/><path d="M633 572Q631 558 642 548" stroke-opacity="0.45" stroke-width="1.4"/><path d="M561 557Q557 546 568 538" stroke-opacity="0.35" stroke-width="1.1"/><path d="M680 549Q679 536 690 527" stroke-opacity="0.27" stroke-width="1.3"/><path d="M965 573Q963 559 980 549" stroke-opacity="0.45" stroke-width="1.6"/><path d="M541 526Q539 518 550 512" stroke-opacity="0.35" stroke-width="1.5"/><path d="M532 561Q532 547 546 538" stroke-opacity="0.33" stroke-width="1.1"/><path d="M876 560Q873 548 884 541" stroke-opacity="0.46" stroke-width="1.5"/><path d="M902 532Q901 522 911 514" stroke-opacity="0.47" stroke-width="1.4"/><path d="M841 537Q838 523 855 514" stroke-opacity="0.34" stroke-width="1.3"/><path d="M940 568Q937 557 947 549" stroke-opacity="0.49" stroke-width="1.0"/><path d="M901 547Q899 535 912 526" stroke-opacity="0.39" stroke-width="1.1"/><path d="M958 514Q957 505 967 499" stroke-opacity="0.45" stroke-width="1.7"/><path d="M964 510Q963 501 970 495" stroke-opacity="0.29" stroke-width="1.5"/><path d="M881 518Q879 507 893 499" stroke-opacity="0.35" stroke-width="1.5"/><path d="M624 581Q621 567 638 558" stroke-opacity="0.43" stroke-width="1.5"/><path d="M895 534Q892 520 909 510" stroke-opacity="0.39" stroke-width="1.8"/><path d="M755 581Q754 573 763 568" stroke-opacity="0.37" stroke-width="1.8"/><path d="M557 532Q555 519 571 511" stroke-opacity="0.50" stroke-width="1.6"/><path d="M504 516Q501 507 511 501" stroke-opacity="0.32" stroke-width="1.4"/><path d="M521 577Q518 562 533 552" stroke-opacity="0.33" stroke-width="1.6"/><path d="M660 582Q659 567 675 557" stroke-opacity="0.27" stroke-width="1.1"/><path d="M660 516Q659 506 672 499" stroke-opacity="0.49" stroke-width="1.2"/><path d="M595 508Q593 497 602 489" stroke-opacity="0.33" stroke-width="1.7"/><path d="M772 553Q770 542 782 536" stroke-opacity="0.43" stroke-width="1.5"/><path d="M721 528Q720 520 728 514" stroke-opacity="0.30" stroke-width="1.9"/><path d="M937 573Q933 558 949 548" stroke-opacity="0.32" stroke-width="1.7"/><path d="M992 515Q990 506 998 501" stroke-opacity="0.40" stroke-width="1.1"/><path d="M919 532Q915 516 930 505" stroke-opacity="0.29" stroke-width="2.0"/><path d="M787 570Q786 562 794 556" stroke-opacity="0.50" stroke-width="1.9"/><path d="M534 535Q533 519 548 508" stroke-opacity="0.31" stroke-width="1.0"/><path d="M972 527Q970 513 982 505" stroke-opacity="0.48" stroke-width="1.9"/><path d="M936 526Q933 510 945 499" stroke-opacity="0.49" stroke-width="1.3"/><path d="M671 551Q670 542 680 535" stroke-opacity="0.27" stroke-width="1.9"/><path d="M517 560Q513 549 524 541" stroke-opacity="0.50" stroke-width="1.8"/><path d="M719 568Q716 553 735 544" stroke-opacity="0.32" stroke-width="1.5"/><path d="M990 563Q988 550 1004 542" stroke-opacity="0.39" stroke-width="1.8"/><path d="M584 573Q582 565 591 559" stroke-opacity="0.29" stroke-width="1.9"/><path d="M708 520Q706 509 718 502" stroke-opacity="0.25" stroke-width="1.1"/><path d="M851 516Q850 507 861 500" stroke-opacity="0.47" stroke-width="1.2"/><path d="M483 565Q478 551 492 542" stroke-opacity="0.36" stroke-width="1.2"/><path d="M786 582Q785 572 792 565" stroke-opacity="0.28" stroke-width="1.2"/><path d="M708 583Q706 572 716 564" stroke-opacity="0.29" stroke-width="1.4"/><path d="M844 531Q840 516 854 505" stroke-opacity="0.41" stroke-width="1.5"/><path d="M957 514Q955 500 970 491" stroke-opacity="0.28" stroke-width="1.6"/><path d="M874 543Q873 531 885 524" stroke-opacity="0.36" stroke-width="1.2"/><path d="M721 549Q719 535 737 526" stroke-opacity="0.33" stroke-width="1.2"/><path d="M808 564Q808 554 817 547" stroke-opacity="0.35" stroke-width="1.9"/><path d="M707 557Q704 541 717 530" stroke-opacity="0.50" stroke-width="1.1"/><path d="M639 543Q639 529 652 520" stroke-opacity="0.42" stroke-width="1.0"/><path d="M517 509Q515 496 524 488" stroke-opacity="0.41" stroke-width="1.2"/><path d="M925 538Q923 522 937 511" stroke-opacity="0.39" stroke-width="1.3"/><path d="M886 506Q885 496 893 489" stroke-opacity="0.38" stroke-width="1.0"/><path d="M636 554Q634 538 645 527" stroke-opacity="0.35" stroke-width="1.5"/><path d="M699 540Q698 525 715 516" stroke-opacity="0.43" stroke-width="1.7"/><path d="M554 509Q552 494 567 485" stroke-opacity="0.33" stroke-width="1.3"/><path d="M959 548Q956 539 965 533" stroke-opacity="0.27" stroke-width="2.0"/><path d="M950 570Q946 561 956 556" stroke-opacity="0.43" stroke-width="1.8"/><path d="M890 568Q887 558 896 551" stroke-opacity="0.46" stroke-width="1.8"/><path d="M748 524Q745 508 758 497" stroke-opacity="0.25" stroke-width="2.0"/><path d="M696 566Q695 552 708 542" stroke-opacity="0.44" stroke-width="1.9"/><path d="M981 512Q978 497 991 487" stroke-opacity="0.34" stroke-width="2.0"/><path d="M511 540Q509 532 521 526" stroke-opacity="0.43" stroke-width="1.5"/><path d="M879 532Q878 521 890 514" stroke-opacity="0.47" stroke-width="1.3"/><path d="M921 564Q919 550 931 542" stroke-opacity="0.27" stroke-width="1.1"/><path d="M642 516Q641 507 650 502" stroke-opacity="0.40" stroke-width="1.2"/><path d="M855 570Q853 556 864 547" stroke-opacity="0.35" stroke-width="1.3"/><path d="M557 573Q554 561 571 553" stroke-opacity="0.32" stroke-width="1.5"/><path d="M511 530Q510 517 521 508" stroke-opacity="0.39" stroke-width="1.6"/><path d="M784 567Q784 555 791 547" stroke-opacity="0.45" stroke-width="1.1"/><path d="M538 523Q534 509 547 499" stroke-opacity="0.37" stroke-width="1.0"/><path d="M615 536Q612 525 620 518" stroke-opacity="0.31" stroke-width="1.3"/><path d="M696 534Q695 522 702 514" stroke-opacity="0.43" stroke-width="1.5"/><path d="M481 524Q478 508 494 498" stroke-opacity="0.45" stroke-width="1.9"/><path d="M544 545Q541 531 552 522" stroke-opacity="0.40" stroke-width="1.7"/><path d="M807 554Q803 542 814 534" stroke-opacity="0.46" stroke-width="1.9"/><path d="M951 512Q948 496 960 486" stroke-opacity="0.30" stroke-width="1.9"/><path d="M906 571Q903 561 917 554" stroke-opacity="0.39" stroke-width="1.7"/><path d="M602 536Q598 527 610 522" stroke-opacity="0.28" stroke-width="1.3"/><path d="M813 556Q812 544 825 537" stroke-opacity="0.30" stroke-width="1.5"/><path d="M568 525Q566 515 574 508" stroke-opacity="0.47" stroke-width="1.7"/><path d="M526 523Q521 510 536 501" stroke-opacity="0.27" stroke-width="1.6"/><path d="M793 512Q791 497 803 487" stroke-opacity="0.38" stroke-width="1.3"/><path d="M972 537Q971 525 982 518" stroke-opacity="0.50" stroke-width="1.8"/><path d="M760 562Q760 550 774 542" stroke-opacity="0.44" stroke-width="1.2"/><path d="M776 540Q773 531 785 525" stroke-opacity="0.43" stroke-width="1.5"/><path d="M702 561Q702 549 716 540" stroke-opacity="0.45" stroke-width="1.3"/><path d="M828 545Q825 529 840 518" stroke-opacity="0.26" stroke-width="1.5"/><path d="M757 530Q753 521 764 515" stroke-opacity="0.29" stroke-width="1.4"/><path d="M661 545Q657 532 671 524" stroke-opacity="0.25" stroke-width="1.6"/><path d="M984 528Q983 516 993 509" stroke-opacity="0.37" stroke-width="1.8"/><path d="M483 516Q480 506 490 499" stroke-opacity="0.35" stroke-width="2.0"/><path d="M708 551Q706 535 722 525" stroke-opacity="0.46" stroke-width="1.3"/><path d="M499 581Q495 568 509 560" stroke-opacity="0.44" stroke-width="1.4"/><path d="M814 528Q811 512 826 501" stroke-opacity="0.47" stroke-width="1.2"/><path d="M621 544Q617 527 631 515" stroke-opacity="0.45" stroke-width="1.1"/><path d="M695 567Q692 554 709 545" stroke-opacity="0.47" stroke-width="1.4"/><path d="M903 543Q900 527 916 517" stroke-opacity="0.29" stroke-width="1.5"/><path d="M506 519Q505 504 519 494" stroke-opacity="0.29" stroke-width="1.5"/><path d="M724 514Q723 505 734 499" stroke-opacity="0.38" stroke-width="1.6"/><path d="M928 580Q927 566 935 557" stroke-opacity="0.29" stroke-width="1.2"/><path d="M551 546Q549 533 562 524" stroke-opacity="0.29" stroke-width="1.7"/><path d="M760 530Q759 517 775 508" stroke-opacity="0.50" stroke-width="1.1"/><path d="M682 541Q682 531 692 525" stroke-opacity="0.28" stroke-width="1.5"/><path d="M983 575Q981 563 990 554" stroke-opacity="0.38" stroke-width="1.8"/><path d="M577 528Q575 510 586 498" stroke-opacity="0.27" stroke-width="1.8"/><path d="M700 578Q697 569 710 563" stroke-opacity="0.26" stroke-width="1.1"/><path d="M520 536Q518 520 532 509" stroke-opacity="0.26" stroke-width="1.5"/><path d="M760 514Q758 501 771 492" stroke-opacity="0.46" stroke-width="1.7"/><path d="M543 514Q541 505 549 499" stroke-opacity="0.49" stroke-width="2.0"/><path d="M930 516Q927 502 943 493" stroke-opacity="0.50" stroke-width="1.6"/><path d="M542 523Q540 514 550 508" stroke-opacity="0.46" stroke-width="1.0"/><path d="M485 582Q485 571 492 564" stroke-opacity="0.28" stroke-width="1.8"/><path d="M946 550Q944 535 954 526" stroke-opacity="0.40" stroke-width="1.8"/><path d="M749 515Q745 505 758 499" stroke-opacity="0.28" stroke-width="1.3"/><path d="M894 549Q892 539 905 532" stroke-opacity="0.31" stroke-width="1.6"/><path d="M925 535Q925 523 935 515" stroke-opacity="0.41" stroke-width="1.2"/><path d="M783 531Q779 520 794 512" stroke-opacity="0.38" stroke-width="1.3"/><path d="M791 570Q788 558 802 551" stroke-opacity="0.31" stroke-width="1.5"/><path d="M757 523Q754 509 769 499" stroke-opacity="0.31" stroke-width="1.8"/><path d="M949 579Q948 568 955 561" stroke-opacity="0.26" stroke-width="1.9"/><path d="M833 532Q830 521 844 513" stroke-opacity="0.34" stroke-width="1.8"/><path d="M834 552Q831 542 840 536" stroke-opacity="0.26" stroke-width="1.6"/><path d="M778 578Q775 567 791 559" stroke-opacity="0.38" stroke-width="1.3"/><path d="M721 579Q719 566 728 557" stroke-opacity="0.30" stroke-width="1.6"/><path d="M745 543Q741 528 759 518" stroke-opacity="0.26" stroke-width="1.7"/><path d="M790 557Q788 544 798 535" stroke-opacity="0.46" stroke-width="1.6"/><path d="M503 516Q499 500 516 490" stroke-opacity="0.43" stroke-width="1.9"/><path d="M930 556Q927 540 939 530" stroke-opacity="0.45" stroke-width="1.3"/><path d="M555 574Q551 558 563 548" stroke-opacity="0.39" stroke-width="2.0"/><path d="M801 574Q798 565 809 559" stroke-opacity="0.33" stroke-width="1.1"/><path d="M721 510Q720 496 733 488" stroke-opacity="0.44" stroke-width="1.1"/><path d="M932 548Q928 532 945 522" stroke-opacity="0.43" stroke-width="1.2"/><path d="M992 548Q988 532 1004 522" stroke-opacity="0.42" stroke-width="1.7"/><path d="M719 527Q716 516 730 509" stroke-opacity="0.29" stroke-width="1.5"/><path d="M822 511Q819 502 833 496" stroke-opacity="0.44" stroke-width="1.3"/><path d="M525 544Q520 530 539 520" stroke-opacity="0.43" stroke-width="1.6"/><path d="M731 558Q729 545 739 536" stroke-opacity="0.28" stroke-width="1.3"/><path d="M923 550Q921 539 934 531" stroke-opacity="0.35" stroke-width="1.6"/><path d="M492 533Q491 526 500 521" stroke-opacity="0.41" stroke-width="1.2"/><path d="M925 528Q923 514 938 504" stroke-opacity="0.44" stroke-width="1.3"/><path d="M914 548Q910 535 928 526" stroke-opacity="0.35" stroke-width="1.4"/><path d="M520 574Q518 560 531 551" stroke-opacity="0.47" stroke-width="1.1"/><path d="M666 560Q663 547 676 539" stroke-opacity="0.31" stroke-width="1.7"/><path d="M657 579Q654 565 673 556" stroke-opacity="0.38" stroke-width="1.1"/><path d="M667 512Q666 501 679 494" stroke-opacity="0.34" stroke-width="1.3"/><path d="M964 510Q960 496 979 487" stroke-opacity="0.49" stroke-width="1.6"/><path d="M682 539Q681 526 693 517" stroke-opacity="0.47" stroke-width="1.3"/><path d="M485 567Q481 554 496 545" stroke-opacity="0.27" stroke-width="1.9"/><path d="M669 543Q667 526 680 514" stroke-opacity="0.27" stroke-width="1.6"/><path d="M864 518Q863 505 879 497" stroke-opacity="0.45" stroke-width="1.9"/><path d="M853 549Q851 535 867 526" stroke-opacity="0.42" stroke-width="1.2"/><path d="M656 531Q653 517 670 508" stroke-opacity="0.50" stroke-width="1.1"/><path d="M512 532Q510 524 521 518" stroke-opacity="0.35" stroke-width="1.9"/><path d="M757 555Q757 543 766 535" stroke-opacity="0.32" stroke-width="1.5"/><path d="M729 517Q728 508 736 501" stroke-opacity="0.36" stroke-width="1.1"/><path d="M966 517Q964 500 975 489" stroke-opacity="0.29" stroke-width="1.3"/><path d="M699 565Q697 553 708 545" stroke-opacity="0.38" stroke-width="1.3"/><path d="M976 521Q973 512 983 506" stroke-opacity="0.43" stroke-width="1.0"/><path d="M832 534Q829 518 843 507" stroke-opacity="0.33" stroke-width="1.5"/><path d="M626 558Q623 547 637 540" stroke-opacity="0.36" stroke-width="1.6"/><path d="M854 557Q850 544 861 536" stroke-opacity="0.29" stroke-width="1.2"/><path d="M575 558Q572 548 586 541" stroke-opacity="0.31" stroke-width="1.2"/><path d="M555 559Q554 546 564 537" stroke-opacity="0.42" stroke-width="1.4"/><path d="M796 557Q793 544 803 536" stroke-opacity="0.49" stroke-width="1.4"/><path d="M812 513Q809 500 826 491" stroke-opacity="0.34" stroke-width="1.5"/><path d="M611 522Q609 513 620 508" stroke-opacity="0.49" stroke-width="2.0"/><path d="M935 580Q931 563 943 552" stroke-opacity="0.49" stroke-width="1.9"/><path d="M800 554Q797 542 809 534" stroke-opacity="0.39" stroke-width="1.3"/><path d="M543 574Q540 562 556 554" stroke-opacity="0.39" stroke-width="1.3"/><path d="M912 522Q909 509 923 500" stroke-opacity="0.27" stroke-width="1.5"/><path d="M752 570Q749 559 758 552" stroke-opacity="0.45" stroke-width="1.2"/><path d="M810 509Q808 500 818 494" stroke-opacity="0.28" stroke-width="1.5"/><path d="M969 537Q967 524 979 515" stroke-opacity="0.26" stroke-width="1.9"/><path d="M781 533Q781 522 788 514" stroke-opacity="0.46" stroke-width="1.4"/><path d="M794 549Q793 538 799 531" stroke-opacity="0.29" stroke-width="1.6"/><path d="M489 508Q487 498 497 492" stroke-opacity="0.50" stroke-width="1.7"/><path d="M752 507Q750 491 764 480" stroke-opacity="0.26" stroke-width="1.8"/><path d="M727 523Q726 510 734 502" stroke-opacity="0.30" stroke-width="1.7"/><path d="M570 560Q570 547 582 539" stroke-opacity="0.32" stroke-width="1.7"/><path d="M687 576Q685 562 700 552" stroke-opacity="0.32" stroke-width="1.9"/><path d="M984 580Q982 570 994 563" stroke-opacity="0.46" stroke-width="1.8"/><path d="M716 537Q714 523 729 513" stroke-opacity="0.47" stroke-width="1.0"/><path d="M487 542Q483 534 496 528" stroke-opacity="0.47" stroke-width="1.2"/><path d="M550 565Q548 551 560 541" stroke-opacity="0.39" stroke-width="1.9"/><path d="M744 548Q743 536 753 528" stroke-opacity="0.28" stroke-width="1.7"/><path d="M963 565Q959 552 972 544" stroke-opacity="0.27" stroke-width="1.5"/><path d="M938 574Q937 564 947 558" stroke-opacity="0.37" stroke-width="1.9"/><path d="M577 532Q575 520 588 513" stroke-opacity="0.33" stroke-width="1.9"/><path d="M684 539Q683 529 692 522" stroke-opacity="0.34" stroke-width="1.7"/><path d="M737 507Q734 490 748 479" stroke-opacity="0.49" stroke-width="1.2"/><path d="M513 522Q511 513 522 508" stroke-opacity="0.26" stroke-width="1.3"/><path d="M746 520Q744 510 756 503" stroke-opacity="0.31" stroke-width="1.6"/><path d="M539 547Q537 532 547 522" stroke-opacity="0.33" stroke-width="1.7"/><path d="M800 577Q797 563 809 554" stroke-opacity="0.43" stroke-width="1.8"/><path d="M513 539Q512 528 521 521" stroke-opacity="0.39" stroke-width="1.7"/><path d="M878 528Q875 514 888 505" stroke-opacity="0.38" stroke-width="1.7"/><path d="M568 571Q567 562 574 555" stroke-opacity="0.50" stroke-width="1.4"/><path d="M975 509Q971 492 986 481" stroke-opacity="0.44" stroke-width="1.2"/><path d="M871 507Q868 497 878 491" stroke-opacity="0.37" stroke-width="1.3"/><path d="M864 544Q860 530 880 520" stroke-opacity="0.48" stroke-width="1.9"/><path d="M774 547Q771 537 781 531" stroke-opacity="0.30" stroke-width="1.6"/><path d="M649 566Q645 554 661 546" stroke-opacity="0.46" stroke-width="1.5"/><path d="M809 525Q807 510 819 501" stroke-opacity="0.40" stroke-width="1.1"/><path d="M636 565Q635 557 644 551" stroke-opacity="0.43" stroke-width="1.3"/><path d="M728 543Q726 528 737 517" stroke-opacity="0.31" stroke-width="1.6"/><path d="M615 522Q612 513 625 507" stroke-opacity="0.47" stroke-width="1.7"/><path d="M620 549Q619 542 628 537" stroke-opacity="0.28" stroke-width="1.5"/><path d="M737 558Q736 549 748 542" stroke-opacity="0.27" stroke-width="1.8"/><path d="M940 530Q939 517 954 508" stroke-opacity="0.27" stroke-width="1.8"/><path d="M609 569Q608 555 620 545" stroke-opacity="0.45" stroke-width="2.0"/><path d="M979 551Q976 537 991 528" stroke-opacity="0.37" stroke-width="1.5"/><path d="M592 526Q591 512 607 503" stroke-opacity="0.42" stroke-width="1.5"/><path d="M778 558Q778 550 785 544" stroke-opacity="0.30" stroke-width="1.5"/><path d="M520 526Q519 510 529 499" stroke-opacity="0.45" stroke-width="1.9"/><path d="M614 579Q613 567 623 560" stroke-opacity="0.39" stroke-width="1.7"/><path d="M537 506Q537 495 544 488" stroke-opacity="0.31" stroke-width="2.0"/><path d="M833 521Q830 506 843 497" stroke-opacity="0.27" stroke-width="1.8"/><path d="M889 551Q886 537 900 527" stroke-opacity="0.33" stroke-width="1.7"/><path d="M773 517Q769 506 781 499" stroke-opacity="0.26" stroke-width="1.4"/><path d="M550 575Q549 567 558 561" stroke-opacity="0.33" stroke-width="1.5"/><path d="M996 554Q993 544 1007 537" stroke-opacity="0.49" stroke-width="1.3"/><path d="M699 531Q698 518 712 510" stroke-opacity="0.30" stroke-width="2.0"/><path d="M856 545Q854 529 865 518" stroke-opacity="0.45" stroke-width="1.8"/><path d="M830 511Q828 498 838 490" stroke-opacity="0.35" stroke-width="1.5"/><path d="M760 552Q756 536 771 525" stroke-opacity="0.30" stroke-width="1.1"/><path d="M922 578Q921 568 929 562" stroke-opacity="0.47" stroke-width="2.0"/><path d="M996 530Q994 521 1002 514" stroke-opacity="0.25" stroke-width="1.3"/><path d="M726 559Q723 549 732 542" stroke-opacity="0.27" stroke-width="1.1"/><path d="M534 568Q532 552 543 541" stroke-opacity="0.46" stroke-width="1.7"/><path d="M636 570Q636 560 641 554" stroke-opacity="0.31" stroke-width="1.9"/><path d="M872 510Q869 501 880 495" stroke-opacity="0.42" stroke-width="1.7"/><path d="M600 543Q599 534 610 528" stroke-opacity="0.42" stroke-width="1.6"/><path d="M512 575Q510 561 524 551" stroke-opacity="0.37" stroke-width="1.8"/><path d="M757 528Q753 515 766 506" stroke-opacity="0.38" stroke-width="1.9"/><path d="M854 522Q852 510 865 502" stroke-opacity="0.37" stroke-width="1.5"/><path d="M838 575Q836 563 850 555" stroke-opacity="0.28" stroke-width="1.3"/><path d="M643 534Q643 521 652 512" stroke-opacity="0.43" stroke-width="1.4"/><path d="M844 578Q844 569 852 563" stroke-opacity="0.34" stroke-width="1.9"/><path d="M898 531Q896 522 907 516" stroke-opacity="0.34" stroke-width="1.5"/><path d="M859 576Q855 561 873 551" stroke-opacity="0.34" stroke-width="1.0"/><path d="M584 533Q581 523 592 516" stroke-opacity="0.41" stroke-width="1.4"/><path d="M608 559Q608 548 615 540" stroke-opacity="0.44" stroke-width="1.9"/><path d="M633 527Q632 512 642 502" stroke-opacity="0.41" stroke-width="1.5"/><path d="M507 528Q503 518 519 511" stroke-opacity="0.40" stroke-width="1.1"/><path d="M985 564Q981 550 999 541" stroke-opacity="0.31" stroke-width="1.0"/><path d="M767 512Q766 502 773 495" stroke-opacity="0.45" stroke-width="1.3"/><path d="M985 518Q984 509 992 502" stroke-opacity="0.27" stroke-width="1.8"/><path d="M763 568Q759 556 769 548" stroke-opacity="0.43" stroke-width="1.5"/><path d="M877 522Q877 510 884 503" stroke-opacity="0.43" stroke-width="1.2"/><path d="M857 509Q856 496 866 488" stroke-opacity="0.43" stroke-width="1.7"/><path d="M583 509Q578 496 595 488" stroke-opacity="0.46" stroke-width="1.9"/><path d="M668 546Q666 534 681 526" stroke-opacity="0.38" stroke-width="1.8"/><path d="M735 509Q732 496 745 487" stroke-opacity="0.35" stroke-width="1.2"/><path d="M642 564Q641 549 654 538" stroke-opacity="0.28" stroke-width="1.5"/><path d="M867 567Q867 555 875 547" stroke-opacity="0.40" stroke-width="1.7"/><path d="M660 515Q659 502 670 493" stroke-opacity="0.42" stroke-width="1.8"/><path d="M776 565Q775 557 786 551" stroke-opacity="0.40" stroke-width="1.2"/><path d="M527 561Q524 547 540 538" stroke-opacity="0.37" stroke-width="1.8"/><path d="M813 577Q809 569 821 563" stroke-opacity="0.41" stroke-width="1.5"/><path d="M519 539Q515 526 532 518" stroke-opacity="0.38" stroke-width="1.8"/><path d="M541 576Q537 559 552 548" stroke-opacity="0.29" stroke-width="1.2"/><path d="M698 561Q697 545 711 535" stroke-opacity="0.36" stroke-width="1.7"/><path d="M480 539Q479 530 485 524" stroke-opacity="0.28" stroke-width="1.3"/><path d="M754 547Q752 538 759 532" stroke-opacity="0.35" stroke-width="1.1"/><path d="M729 535Q725 517 739 505" stroke-opacity="0.27" stroke-width="1.6"/><path d="M979 567Q977 558 987 552" stroke-opacity="0.49" stroke-width="1.7"/><path d="M794 526Q792 514 804 506" stroke-opacity="0.39" stroke-width="1.1"/><path d="M699 583Q698 572 708 564" stroke-opacity="0.45" stroke-width="1.7"/><path d="M678 562Q674 552 687 546" stroke-opacity="0.30" stroke-width="1.2"/><path d="M663 564Q660 556 671 551" stroke-opacity="0.49" stroke-width="1.9"/><path d="M800 572Q798 555 812 545" stroke-opacity="0.26" stroke-width="1.8"/><path d="M817 567Q815 556 823 550" stroke-opacity="0.40" stroke-width="1.7"/><path d="M573 550Q572 533 584 522" stroke-opacity="0.49" stroke-width="1.7"/><path d="M709 539Q705 526 717 517" stroke-opacity="0.32" stroke-width="1.2"/><path d="M948 534Q947 519 961 509" stroke-opacity="0.47" stroke-width="1.7"/><path d="M713 525Q712 512 722 503" stroke-opacity="0.26" stroke-width="1.6"/><path d="M656 539Q656 528 669 520" stroke-opacity="0.34" stroke-width="2.0"/><path d="M977 547Q976 533 986 524" stroke-opacity="0.37" stroke-width="1.8"/><path d="M959 555Q956 541 971 532" stroke-opacity="0.36" stroke-width="1.1"/><path d="M574 582Q572 570 581 562" stroke-opacity="0.27" stroke-width="1.6"/><path d="M599 523Q594 511 612 503" stroke-opacity="0.43" stroke-width="1.6"/><path d="M733 539Q731 530 739 525" stroke-opacity="0.33" stroke-width="2.0"/><path d="M657 572Q654 558 671 549" stroke-opacity="0.37" stroke-width="1.8"/><path d="M541 524Q539 515 548 510" stroke-opacity="0.49" stroke-width="1.9"/><path d="M691 545Q689 536 699 530" stroke-opacity="0.29" stroke-width="1.9"/><path d="M502 521Q499 510 515 503" stroke-opacity="0.32" stroke-width="1.8"/><path d="M655 578Q652 570 661 564" stroke-opacity="0.46" stroke-width="1.1"/><path d="M830 575Q826 560 846 550" stroke-opacity="0.37" stroke-width="1.2"/><path d="M543 525Q540 511 555 502" stroke-opacity="0.32" stroke-width="1.1"/><path d="M962 565Q961 554 974 547" stroke-opacity="0.30" stroke-width="1.3"/><path d="M579 555Q578 542 590 533" stroke-opacity="0.38" stroke-width="1.3"/><path d="M828 580Q824 571 835 566" stroke-opacity="0.44" stroke-width="1.4"/><path d="M916 558Q914 542 930 532" stroke-opacity="0.49" stroke-width="1.8"/><path d="M656 514Q655 497 665 486" stroke-opacity="0.48" stroke-width="1.7"/><path d="M973 553Q970 539 986 530" stroke-opacity="0.27" stroke-width="1.7"/><path d="M715 516Q712 502 724 493" stroke-opacity="0.47" stroke-width="1.6"/><path d="M869 570Q867 558 878 550" stroke-opacity="0.34" stroke-width="1.8"/><path d="M940 529Q936 514 949 505" stroke-opacity="0.42" stroke-width="1.8"/><path d="M652 584Q650 569 662 559" stroke-opacity="0.46" stroke-width="1.1"/><path d="M954 540Q952 529 962 522" stroke-opacity="0.38" stroke-width="1.3"/><path d="M511 555Q508 542 524 533" stroke-opacity="0.46" stroke-width="1.0"/><path d="M547 507Q544 495 558 486" stroke-opacity="0.38" stroke-width="1.0"/><path d="M499 581Q497 564 508 553" stroke-opacity="0.38" stroke-width="1.5"/><path d="M917 556Q916 541 931 531" stroke-opacity="0.28" stroke-width="1.8"/><path d="M646 578Q645 565 661 556" stroke-opacity="0.35" stroke-width="1.5"/><path d="M887 511Q886 498 898 490" stroke-opacity="0.34" stroke-width="1.6"/><path d="M863 536Q860 523 876 515" stroke-opacity="0.38" stroke-width="1.5"/><path d="M916 527Q915 516 924 509" stroke-opacity="0.29" stroke-width="2.0"/><path d="M742 563Q739 550 748 542" stroke-opacity="0.39" stroke-width="1.1"/><path d="M990 552Q986 539 997 530" stroke-opacity="0.33" stroke-width="1.6"/><path d="M571 544Q569 534 579 527" stroke-opacity="0.38" stroke-width="1.8"/><path d="M804 513Q803 499 815 490" stroke-opacity="0.48" stroke-width="1.4"/><path d="M922 524Q921 509 930 499" stroke-opacity="0.36" stroke-width="1.5"/><path d="M739 535Q737 525 748 519" stroke-opacity="0.26" stroke-width="1.3"/><path d="M964 528Q962 518 973 511" stroke-opacity="0.49" stroke-width="2.0"/><path d="M547 524Q544 514 555 507" stroke-opacity="0.42" stroke-width="1.9"/><path d="M517 508Q514 499 524 492" stroke-opacity="0.36" stroke-width="1.4"/><path d="M858 581Q856 565 871 554" stroke-opacity="0.28" stroke-width="1.6"/><path d="M939 575Q939 565 946 558" stroke-opacity="0.42" stroke-width="1.8"/><path d="M515 554Q514 546 523 541" stroke-opacity="0.33" stroke-width="1.0"/><path d="M861 584Q858 570 871 561" stroke-opacity="0.45" stroke-width="2.0"/><path d="M670 523Q667 507 683 496" stroke-opacity="0.33" stroke-width="1.7"/><path d="M991 543Q988 527 1003 517" stroke-opacity="0.45" stroke-width="2.0"/><path d="M873 561Q872 547 888 538" stroke-opacity="0.38" stroke-width="1.4"/><path d="M484 547Q484 535 490 527" stroke-opacity="0.33" stroke-width="1.9"/><path d="M488 534Q486 520 501 511" stroke-opacity="0.37" stroke-width="1.1"/><path d="M912 565Q911 553 922 545" stroke-opacity="0.37" stroke-width="1.5"/><path d="M732 563Q731 549 742 539" stroke-opacity="0.34" stroke-width="1.7"/><path d="M676 576Q673 561 691 551" stroke-opacity="0.34" stroke-width="1.4"/><path d="M794 509Q790 497 807 490" stroke-opacity="0.47" stroke-width="1.6"/><path d="M999 562Q996 549 1012 540" stroke-opacity="0.28" stroke-width="1.9"/><path d="M936 562Q934 552 944 546" stroke-opacity="0.34" stroke-width="1.5"/><path d="M718 582Q717 571 732 563" stroke-opacity="0.29" stroke-width="1.8"/><path d="M678 553Q675 540 690 532" stroke-opacity="0.42" stroke-width="1.4"/><path d="M887 545Q884 533 901 525" stroke-opacity="0.25" stroke-width="1.9"/><path d="M753 556Q750 543 768 534" stroke-opacity="0.50" stroke-width="1.4"/><path d="M858 571Q855 560 867 552" stroke-opacity="0.34" stroke-width="1.4"/><path d="M921 511Q919 495 936 485" stroke-opacity="0.41" stroke-width="1.3"/><path d="M878 574Q874 563 887 555" stroke-opacity="0.31" stroke-width="1.9"/><path d="M814 541Q810 527 823 517" stroke-opacity="0.34" stroke-width="1.6"/><path d="M576 548Q575 537 584 529" stroke-opacity="0.34" stroke-width="1.7"/><path d="M870 535Q868 528 878 522" stroke-opacity="0.40" stroke-width="1.7"/><path d="M765 577Q764 569 774 565" stroke-opacity="0.35" stroke-width="1.9"/><path d="M946 553Q943 544 953 539" stroke-opacity="0.39" stroke-width="1.8"/><path d="M549 572Q545 561 556 553" stroke-opacity="0.28" stroke-width="1.3"/><path d="M755 579Q753 569 762 563" stroke-opacity="0.41" stroke-width="1.4"/><path d="M828 518Q827 509 836 504" stroke-opacity="0.28" stroke-width="1.0"/><path d="M828 511Q824 496 842 486" stroke-opacity="0.35" stroke-width="1.1"/><path d="M526 533Q524 520 541 510" stroke-opacity="0.41" stroke-width="1.6"/><path d="M746 557Q745 545 755 536" stroke-opacity="0.33" stroke-width="1.4"/><path d="M833 581Q831 570 842 563" stroke-opacity="0.30" stroke-width="1.4"/><path d="M891 521Q889 508 899 500" stroke-opacity="0.44" stroke-width="1.1"/><path d="M733 521Q730 508 745 499" stroke-opacity="0.31" stroke-width="1.3"/><path d="M651 576Q648 561 665 552" stroke-opacity="0.36" stroke-width="1.2"/><path d="M719 580Q716 571 726 565" stroke-opacity="0.46" stroke-width="1.3"/><path d="M733 510Q732 496 745 487" stroke-opacity="0.43" stroke-width="1.7"/><path d="M617 526Q616 511 624 502" stroke-opacity="0.43" stroke-width="1.5"/><path d="M668 512Q664 500 680 492" stroke-opacity="0.27" stroke-width="1.7"/><path d="M724 568Q724 558 736 551" stroke-opacity="0.33" stroke-width="1.5"/><path d="M785 541Q784 527 799 517" stroke-opacity="0.31" stroke-width="1.5"/><path d="M763 552Q761 544 771 539" stroke-opacity="0.29" stroke-width="1.9"/><path d="M769 564Q769 550 782 541" stroke-opacity="0.26" stroke-width="1.3"/><path d="M565 556Q562 545 571 538" stroke-opacity="0.29" stroke-width="1.5"/><path d="M717 542Q714 534 724 528" stroke-opacity="0.27" stroke-width="1.1"/><path d="M558 537Q555 528 566 521" stroke-opacity="0.43" stroke-width="1.9"/><path d="M648 512Q646 494 658 483" stroke-opacity="0.44" stroke-width="1.5"/><path d="M943 517Q943 505 957 496" stroke-opacity="0.46" stroke-width="1.4"/><path d="M746 572Q742 560 754 552" stroke-opacity="0.30" stroke-width="1.1"/><path d="M963 530Q962 520 975 514" stroke-opacity="0.36" stroke-width="1.1"/><path d="M670 529Q669 512 682 502" stroke-opacity="0.32" stroke-width="1.0"/><path d="M948 512Q944 497 960 488" stroke-opacity="0.46" stroke-width="1.4"/><path d="M991 550Q988 535 1007 526" stroke-opacity="0.42" stroke-width="1.7"/><path d="M821 508Q817 495 834 486" stroke-opacity="0.27" stroke-width="1.1"/><path d="M763 514Q762 499 775 489" stroke-opacity="0.43" stroke-width="1.4"/><path d="M575 539Q574 527 588 519" stroke-opacity="0.33" stroke-width="1.0"/><path d="M826 560Q825 547 838 539" stroke-opacity="0.41" stroke-width="1.8"/><path d="M545 580Q541 565 553 555" stroke-opacity="0.41" stroke-width="1.3"/><path d="M967 528Q967 516 977 507" stroke-opacity="0.33" stroke-width="1.9"/><path d="M856 550Q855 536 872 526" stroke-opacity="0.39" stroke-width="1.0"/><path d="M595 557Q592 548 603 542" stroke-opacity="0.35" stroke-width="1.8"/><path d="M917 564Q917 553 927 545" stroke-opacity="0.48" stroke-width="1.6"/><path d="M521 576Q520 567 526 561" stroke-opacity="0.30" stroke-width="1.8"/><path d="M837 519Q835 505 853 496" stroke-opacity="0.50" stroke-width="1.8"/><path d="M726 570Q722 555 740 545" stroke-opacity="0.34" stroke-width="1.7"/><path d="M670 519Q668 506 678 498" stroke-opacity="0.27" stroke-width="1.7"/><path d="M591 579Q589 570 599 564" stroke-opacity="0.30" stroke-width="1.6"/><path d="M766 554Q765 544 773 538" stroke-opacity="0.40" stroke-width="1.2"/><path d="M654 575Q652 566 661 560" stroke-opacity="0.36" stroke-width="1.0"/><path d="M535 572Q533 559 544 551" stroke-opacity="0.26" stroke-width="1.1"/><path d="M911 565Q907 555 918 548" stroke-opacity="0.33" stroke-width="1.5"/><path d="M871 545Q869 532 887 523" stroke-opacity="0.26" stroke-width="1.1"/><path d="M830 516Q825 499 839 488" stroke-opacity="0.50" stroke-width="1.4"/><path d="M769 553Q766 543 775 537" stroke-opacity="0.43" stroke-width="1.8"/><path d="M841 520Q838 509 853 502" stroke-opacity="0.34" stroke-width="1.6"/><path d="M998 508Q995 494 1009 485" stroke-opacity="0.46" stroke-width="1.1"/><path d="M791 531Q788 517 804 508" stroke-opacity="0.29" stroke-width="1.8"/><path d="M844 550Q841 537 859 529" stroke-opacity="0.42" stroke-width="1.8"/><path d="M618 576Q617 567 629 560" stroke-opacity="0.49" stroke-width="1.9"/><path d="M887 535Q886 523 897 515" stroke-opacity="0.35" stroke-width="1.9"/><path d="M593 547Q590 537 599 530" stroke-opacity="0.26" stroke-width="1.6"/><path d="M802 537Q801 522 815 513" stroke-opacity="0.27" stroke-width="1.3"/><path d="M491 518Q489 502 501 491" stroke-opacity="0.34" stroke-width="1.7"/><path d="M933 571Q930 556 950 547" stroke-opacity="0.50" stroke-width="1.8"/><path d="M625 532Q621 520 637 512" stroke-opacity="0.47" stroke-width="1.7"/><path d="M788 538Q787 526 797 518" stroke-opacity="0.36" stroke-width="1.7"/><path d="M936 513Q933 505 944 500" stroke-opacity="0.45" stroke-width="1.4"/><path d="M597 507Q593 495 607 488" stroke-opacity="0.25" stroke-width="1.3"/><path d="M938 565Q936 554 946 547" stroke-opacity="0.43" stroke-width="1.3"/><path d="M665 545Q664 535 673 528" stroke-opacity="0.38" stroke-width="1.1"/><path d="M661 550Q660 540 669 533" stroke-opacity="0.34" stroke-width="1.2"/><path d="M935 511Q933 494 945 483" stroke-opacity="0.39" stroke-width="1.4"/><path d="M805 575Q802 563 812 555" stroke-opacity="0.47" stroke-width="1.6"/><path d="M872 536Q870 526 882 519" stroke-opacity="0.48" stroke-width="1.2"/><path d="M658 560Q657 544 671 534" stroke-opacity="0.28" stroke-width="1.6"/><path d="M651 560Q648 549 658 541" stroke-opacity="0.43" stroke-width="1.7"/><path d="M955 538Q952 530 963 525" stroke-opacity="0.43" stroke-width="1.5"/><path d="M711 508Q709 499 720 493" stroke-opacity="0.47" stroke-width="1.8"/><path d="M758 583Q756 574 764 569" stroke-opacity="0.26" stroke-width="1.9"/><path d="M558 551Q556 541 566 533" stroke-opacity="0.32" stroke-width="1.2"/><path d="M827 555Q823 547 836 542" stroke-opacity="0.31" stroke-width="1.3"/><path d="M670 544Q667 527 679 516" stroke-opacity="0.41" stroke-width="1.3"/><path d="M665 541Q662 526 679 517" stroke-opacity="0.27" stroke-width="1.4"/><path d="M905 540Q901 529 915 521" stroke-opacity="0.41" stroke-width="1.7"/><path d="M539 539Q536 523 549 512" stroke-opacity="0.34" stroke-width="1.6"/><path d="M683 533Q683 518 697 508" stroke-opacity="0.33" stroke-width="1.5"/><path d="M670 574Q667 563 680 556" stroke-opacity="0.39" stroke-width="1.3"/><path d="M955 535Q952 519 969 508" stroke-opacity="0.39" stroke-width="1.9"/><path d="M841 570Q837 558 852 549" stroke-opacity="0.46" stroke-width="1.6"/><path d="M817 530Q814 515 829 506" stroke-opacity="0.50" stroke-width="1.8"/><path d="M833 572Q832 557 844 548" stroke-opacity="0.48" stroke-width="1.7"/><path d="M706 545Q706 537 715 532" stroke-opacity="0.40" stroke-width="1.5"/><path d="M898 508Q896 496 906 488" stroke-opacity="0.34" stroke-width="1.6"/><path d="M947 538Q946 528 952 521" stroke-opacity="0.37" stroke-width="1.4"/><path d="M496 514Q492 507 504 502" stroke-opacity="0.33" stroke-width="1.5"/><path d="M778 523Q778 510 790 502" stroke-opacity="0.27" stroke-width="1.3"/><path d="M533 529Q533 518 539 511" stroke-opacity="0.32" stroke-width="1.7"/><path d="M903 568Q903 560 910 554" stroke-opacity="0.41" stroke-width="1.6"/><path d="M701 570Q699 557 711 549" stroke-opacity="0.37" stroke-width="1.2"/><path d="M830 571Q827 556 838 546" stroke-opacity="0.44" stroke-width="1.1"/><path d="M743 559Q739 546 752 538" stroke-opacity="0.43" stroke-width="1.2"/><path d="M793 547Q792 532 801 522" stroke-opacity="0.44" stroke-width="1.9"/><path d="M576 562Q575 551 586 544" stroke-opacity="0.35" stroke-width="1.9"/><path d="M708 542Q707 527 717 517" stroke-opacity="0.33" stroke-width="1.9"/><path d="M555 516Q553 502 564 493" stroke-opacity="0.30" stroke-width="1.7"/><path d="M863 560Q862 549 869 543" stroke-opacity="0.27" stroke-width="1.7"/><path d="M765 579Q763 564 778 555" stroke-opacity="0.38" stroke-width="1.3"/><path d="M512 561Q510 548 524 539" stroke-opacity="0.36" stroke-width="1.9"/><path d="M676 517Q675 502 691 492" stroke-opacity="0.50" stroke-width="1.4"/><path d="M561 544Q560 532 570 524" stroke-opacity="0.31" stroke-width="2.0"/><path d="M590 528Q589 512 601 502" stroke-opacity="0.32" stroke-width="1.4"/><path d="M724 525Q723 512 739 503" stroke-opacity="0.29" stroke-width="1.0"/><path d="M709 564Q709 552 722 545" stroke-opacity="0.42" stroke-width="1.3"/><path d="M689 511Q686 500 699 493" stroke-opacity="0.30" stroke-width="1.5"/><path d="M946 556Q943 547 953 541" stroke-opacity="0.45" stroke-width="1.4"/><path d="M711 574Q711 564 719 557" stroke-opacity="0.33" stroke-width="1.5"/><path d="M817 532Q816 519 827 509" stroke-opacity="0.39" stroke-width="1.7"/><path d="M778 560Q775 548 785 540" stroke-opacity="0.33" stroke-width="1.0"/><path d="M880 547Q876 535 891 528" stroke-opacity="0.28" stroke-width="1.7"/><path d="M501 574Q500 563 514 555" stroke-opacity="0.35" stroke-width="1.3"/><path d="M706 566Q705 555 717 547" stroke-opacity="0.44" stroke-width="1.5"/><path d="M866 545Q865 531 876 523" stroke-opacity="0.50" stroke-width="1.6"/><path d="M770 514Q767 503 783 495" stroke-opacity="0.44" stroke-width="1.3"/><path d="M851 528Q847 516 863 508" stroke-opacity="0.46" stroke-width="1.5"/><path d="M607 530Q603 518 619 510" stroke-opacity="0.27" stroke-width="1.2"/><path d="M810 537Q807 524 823 515" stroke-opacity="0.40" stroke-width="1.1"/><path d="M797 556Q793 547 806 540" stroke-opacity="0.49" stroke-width="1.5"/><path d="M960 558Q958 549 969 542" stroke-opacity="0.34" stroke-width="1.7"/><path d="M875 559Q875 550 885 544" stroke-opacity="0.36" stroke-width="1.9"/><path d="M997 533Q995 523 1003 516" stroke-opacity="0.29" stroke-width="1.2"/><path d="M861 507Q859 494 871 485" stroke-opacity="0.31" stroke-width="1.5"/><path d="M591 507Q587 492 602 481" stroke-opacity="0.48" stroke-width="1.4"/><path d="M761 517Q761 506 773 499" stroke-opacity="0.45" stroke-width="1.9"/><path d="M600 510Q598 501 608 495" stroke-opacity="0.34" stroke-width="1.7"/><path d="M594 553Q593 541 602 533" stroke-opacity="0.30" stroke-width="1.8"/><path d="M876 540Q872 527 884 519" stroke-opacity="0.42" stroke-width="1.4"/><path d="M773 535Q772 524 779 516" stroke-opacity="0.36" stroke-width="1.2"/><path d="M934 518Q932 507 941 500" stroke-opacity="0.44" stroke-width="1.0"/><path d="M961 561Q958 546 973 535" stroke-opacity="0.27" stroke-width="1.3"/><path d="M933 528Q932 514 948 504" stroke-opacity="0.29" stroke-width="1.4"/><path d="M913 530Q912 519 919 512" stroke-opacity="0.39" stroke-width="1.2"/><path d="M615 555Q614 546 624 540" stroke-opacity="0.36" stroke-width="1.1"/><path d="M777 529Q775 520 785 515" stroke-opacity="0.32" stroke-width="1.2"/><path d="M856 578Q853 567 866 559" stroke-opacity="0.37" stroke-width="1.6"/><path d="M639 553Q635 539 646 530" stroke-opacity="0.35" stroke-width="1.1"/><path d="M764 552Q762 540 777 532" stroke-opacity="0.44" stroke-width="1.1"/><path d="M934 579Q932 566 946 558" stroke-opacity="0.36" stroke-width="1.2"/><path d="M730 562Q728 548 744 539" stroke-opacity="0.49" stroke-width="1.4"/><path d="M490 539Q486 527 502 519" stroke-opacity="0.26" stroke-width="1.7"/><path d="M579 572Q577 559 588 550" stroke-opacity="0.44" stroke-width="1.2"/><path d="M977 510Q976 501 985 495" stroke-opacity="0.40" stroke-width="1.9"/><path d="M585 510Q582 497 594 488" stroke-opacity="0.35" stroke-width="1.9"/><path d="M628 560Q628 547 637 538" stroke-opacity="0.31" stroke-width="1.3"/><path d="M580 561Q576 546 591 537" stroke-opacity="0.40" stroke-width="1.3"/><path d="M766 557Q766 548 771 542" stroke-opacity="0.47" stroke-width="1.1"/><path d="M596 539Q595 524 607 513" stroke-opacity="0.27" stroke-width="1.9"/><path d="M510 553Q509 538 524 527" stroke-opacity="0.34" stroke-width="2.0"/><path d="M950 527Q946 514 964 506" stroke-opacity="0.35" stroke-width="1.8"/><path d="M778 578Q775 566 788 558" stroke-opacity="0.32" stroke-width="1.9"/><path d="M616 576Q613 561 628 552" stroke-opacity="0.25" stroke-width="1.1"/><path d="M911 581Q910 564 922 553" stroke-opacity="0.36" stroke-width="1.4"/><path d="M953 570Q949 556 962 546" stroke-opacity="0.30" stroke-width="1.3"/><path d="M580 551Q579 539 587 532" stroke-opacity="0.34" stroke-width="1.0"/><path d="M485 549Q481 541 492 535" stroke-opacity="0.37" stroke-width="1.6"/><path d="M761 523Q760 509 776 501" stroke-opacity="0.48" stroke-width="2.0"/><path d="M671 548Q668 538 682 530" stroke-opacity="0.31" stroke-width="1.5"/><path d="M763 583Q761 571 769 563" stroke-opacity="0.47" stroke-width="1.1"/><path d="M750 553Q748 537 761 527" stroke-opacity="0.49" stroke-width="2.0"/><path d="M774 532Q772 520 786 511" stroke-opacity="0.42" stroke-width="1.4"/><path d="M852 533Q851 523 859 515" stroke-opacity="0.29" stroke-width="1.3"/><path d="M635 535Q633 525 647 518" stroke-opacity="0.39" stroke-width="1.4"/><path d="M765 569Q762 557 775 549" stroke-opacity="0.30" stroke-width="1.2"/><path d="M526 528Q525 520 533 514" stroke-opacity="0.28" stroke-width="1.8"/><path d="M715 555Q713 544 726 536" stroke-opacity="0.28" stroke-width="1.5"/><path d="M618 564Q614 552 625 544" stroke-opacity="0.50" stroke-width="1.1"/><path d="M611 579Q609 570 617 564" stroke-opacity="0.42" stroke-width="1.8"/><path d="M987 531Q983 521 993 515" stroke-opacity="0.32" stroke-width="1.6"/><path d="M945 514Q943 504 955 498" stroke-opacity="0.35" stroke-width="1.1"/><path d="M509 523Q507 509 517 499" stroke-opacity="0.45" stroke-width="1.0"/><path d="M629 538Q628 526 642 517" stroke-opacity="0.36" stroke-width="1.3"/><path d="M806 542Q803 526 819 516" stroke-opacity="0.42" stroke-width="1.5"/><path d="M736 558Q733 546 749 539" stroke-opacity="0.37" stroke-width="2.0"/><path d="M904 549Q901 538 911 530" stroke-opacity="0.36" stroke-width="1.4"/><path d="M613 543Q612 530 621 520" stroke-opacity="0.43" stroke-width="1.2"/><path d="M609 509Q607 497 620 490" stroke-opacity="0.40" stroke-width="1.6"/><path d="M503 510Q502 499 515 492" stroke-opacity="0.36" stroke-width="1.3"/><path d="M549 556Q545 542 560 532" stroke-opacity="0.32" stroke-width="1.7"/><path d="M881 537Q876 521 893 511" stroke-opacity="0.30" stroke-width="1.9"/><path d="M847 513Q845 502 855 495" stroke-opacity="0.26" stroke-width="1.9"/><path d="M756 527Q756 518 763 513" stroke-opacity="0.43" stroke-width="1.9"/><path d="M934 558Q933 549 941 543" stroke-opacity="0.35" stroke-width="1.2"/><path d="M515 574Q513 559 525 550" stroke-opacity="0.47" stroke-width="1.1"/><path d="M807 524Q806 510 822 500" stroke-opacity="0.35" stroke-width="1.5"/><path d="M647 533Q647 519 663 510" stroke-opacity="0.48" stroke-width="1.5"/><path d="M823 577Q822 566 835 559" stroke-opacity="0.32" stroke-width="1.4"/><path d="M839 519Q835 508 846 501" stroke-opacity="0.48" stroke-width="2.0"/><path d="M907 545Q904 532 919 522" stroke-opacity="0.38" stroke-width="1.1"/><path d="M606 533Q603 522 616 515" stroke-opacity="0.31" stroke-width="1.9"/><path d="M887 579Q884 563 896 553" stroke-opacity="0.46" stroke-width="1.8"/><path d="M599 544Q595 529 606 520" stroke-opacity="0.44" stroke-width="1.7"/><path d="M713 551Q709 538 722 529" stroke-opacity="0.44" stroke-width="1.8"/><path d="M706 566Q705 552 720 542" stroke-opacity="0.49" stroke-width="1.0"/><path d="M970 541Q966 527 983 518" stroke-opacity="0.40" stroke-width="1.1"/><path d="M861 532Q860 521 868 513" stroke-opacity="0.41" stroke-width="1.3"/><path d="M865 520Q864 506 878 496" stroke-opacity="0.40" stroke-width="2.0"/><path d="M841 542Q838 529 852 521" stroke-opacity="0.33" stroke-width="1.8"/><path d="M905 581Q903 567 917 558" stroke-opacity="0.43" stroke-width="1.6"/><path d="M970 564Q967 552 978 545" stroke-opacity="0.45" stroke-width="1.4"/><path d="M685 510Q682 499 697 492" stroke-opacity="0.44" stroke-width="1.8"/><path d="M823 552Q822 543 832 536" stroke-opacity="0.49" stroke-width="1.5"/><path d="M664 577Q663 563 674 554" stroke-opacity="0.29" stroke-width="1.2"/><path d="M940 542Q937 527 950 516" stroke-opacity="0.31" stroke-width="1.8"/><path d="M791 537Q787 525 798 517" stroke-opacity="0.42" stroke-width="1.3"/><path d="M534 536Q532 526 547 519" stroke-opacity="0.35" stroke-width="2.0"/><path d="M855 542Q851 530 863 522" stroke-opacity="0.37" stroke-width="1.6"/><path d="M535 543Q532 534 543 527" stroke-opacity="0.42" stroke-width="1.8"/><path d="M690 536Q689 526 696 520" stroke-opacity="0.45" stroke-width="1.1"/><path d="M988 577Q986 566 997 559" stroke-opacity="0.33" stroke-width="1.4"/><path d="M855 544Q852 532 865 524" stroke-opacity="0.37" stroke-width="1.3"/><path d="M567 547Q565 533 578 524" stroke-opacity="0.42" stroke-width="1.4"/><path d="M990 523Q989 515 997 509" stroke-opacity="0.35" stroke-width="1.4"/><path d="M658 525Q655 512 673 503" stroke-opacity="0.39" stroke-width="1.5"/><path d="M548 563Q548 552 561 545" stroke-opacity="0.48" stroke-width="1.3"/><path d="M537 569Q534 560 545 555" stroke-opacity="0.43" stroke-width="1.1"/><path d="M526 574Q525 561 535 553" stroke-opacity="0.45" stroke-width="1.2"/><path d="M847 536Q844 524 856 515" stroke-opacity="0.33" stroke-width="1.3"/><path d="M578 574Q577 563 588 556" stroke-opacity="0.42" stroke-width="1.2"/><path d="M976 579Q974 563 987 553" stroke-opacity="0.41" stroke-width="1.0"/><path d="M676 560Q675 549 689 542" stroke-opacity="0.46" stroke-width="2.0"/><path d="M658 577Q655 569 666 564" stroke-opacity="0.37" stroke-width="1.4"/><path d="M517 556Q514 540 527 530" stroke-opacity="0.44" stroke-width="1.5"/><path d="M490 530Q486 513 501 502" stroke-opacity="0.36" stroke-width="1.9"/><path d="M901 536Q897 521 909 511" stroke-opacity="0.34" stroke-width="1.6"/><path d="M553 509Q549 493 563 482" stroke-opacity="0.27" stroke-width="1.1"/><path d="M629 551Q626 537 638 528" stroke-opacity="0.33" stroke-width="1.6"/><path d="M537 555Q534 547 545 542" stroke-opacity="0.39" stroke-width="1.2"/><path d="M711 527Q710 514 724 506" stroke-opacity="0.49" stroke-width="1.5"/><path d="M766 533Q766 523 774 516" stroke-opacity="0.26" stroke-width="1.7"/><path d="M648 553Q646 543 657 536" stroke-opacity="0.33" stroke-width="1.4"/><path d="M482 514Q479 497 492 486" stroke-opacity="0.42" stroke-width="1.0"/><path d="M964 522Q962 506 977 495" stroke-opacity="0.40" stroke-width="1.1"/><path d="M743 564Q742 551 757 541" stroke-opacity="0.28" stroke-width="1.4"/><path d="M745 509Q743 494 754 483" stroke-opacity="0.32" stroke-width="1.2"/><path d="M975 554Q973 540 988 531" stroke-opacity="0.47" stroke-width="1.1"/><path d="M677 523Q676 510 687 501" stroke-opacity="0.31" stroke-width="1.3"/><path d="M957 562Q956 550 966 542" stroke-opacity="0.29" stroke-width="1.7"/><path d="M598 569Q597 561 607 556" stroke-opacity="0.26" stroke-width="1.2"/><path d="M956 570Q954 560 966 553" stroke-opacity="0.31" stroke-width="1.7"/><path d="M696 517Q692 503 710 493" stroke-opacity="0.36" stroke-width="1.7"/><path d="M673 526Q669 515 686 507" stroke-opacity="0.31" stroke-width="1.5"/><path d="M992 583Q989 575 999 570" stroke-opacity="0.30" stroke-width="1.1"/><path d="M740 583Q739 567 752 556" stroke-opacity="0.42" stroke-width="1.1"/><path d="M948 527Q947 510 959 498" stroke-opacity="0.38" stroke-width="1.5"/><path d="M575 544Q575 530 587 520" stroke-opacity="0.38" stroke-width="1.9"/><path d="M549 563Q547 552 562 544" stroke-opacity="0.37" stroke-width="1.8"/><path d="M613 535Q610 520 626 511" stroke-opacity="0.25" stroke-width="1.8"/><path d="M696 525Q695 512 703 504" stroke-opacity="0.45" stroke-width="2.0"/><path d="M831 519Q826 508 843 501" stroke-opacity="0.34" stroke-width="1.1"/><path d="M569 527Q568 513 577 504" stroke-opacity="0.36" stroke-width="1.2"/><path d="M533 547Q529 536 542 528" stroke-opacity="0.34" stroke-width="1.5"/><path d="M524 545Q520 530 537 520" stroke-opacity="0.41" stroke-width="1.1"/><path d="M554 507Q551 493 562 485" stroke-opacity="0.28" stroke-width="1.9"/><path d="M556 559Q553 544 567 534" stroke-opacity="0.33" stroke-width="1.8"/><path d="M837 512Q834 497 845 487" stroke-opacity="0.30" stroke-width="1.5"/><path d="M821 563Q818 551 827 544" stroke-opacity="0.48" stroke-width="1.6"/><path d="M802 566Q802 554 816 546" stroke-opacity="0.43" stroke-width="1.8"/><path d="M554 527Q553 513 566 504" stroke-opacity="0.44" stroke-width="1.3"/><path d="M569 557Q566 548 576 542" stroke-opacity="0.35" stroke-width="1.7"/><path d="M809 554Q808 546 818 541" stroke-opacity="0.48" stroke-width="1.6"/><path d="M816 575Q812 561 829 552" stroke-opacity="0.26" stroke-width="1.7"/><path d="M920 536Q920 526 928 519" stroke-opacity="0.44" stroke-width="1.1"/><path d="M585 522Q584 507 595 497" stroke-opacity="0.35" stroke-width="1.2"/><path d="M696 517Q693 500 705 489" stroke-opacity="0.34" stroke-width="1.0"/><path d="M595 583Q594 568 607 557" stroke-opacity="0.48" stroke-width="1.9"/><path d="M858 550Q856 538 869 531" stroke-opacity="0.49" stroke-width="1.2"/><path d="M947 565Q944 554 959 547" stroke-opacity="0.35" stroke-width="1.6"/><path d="M984 525Q984 510 998 501" stroke-opacity="0.32" stroke-width="1.7"/><path d="M942 575Q940 562 955 554" stroke-opacity="0.39" stroke-width="1.2"/><path d="M750 582Q746 565 759 553" stroke-opacity="0.31" stroke-width="1.8"/><path d="M575 566Q575 556 582 549" stroke-opacity="0.28" stroke-width="1.6"/><path d="M623 565Q620 557 631 551" stroke-opacity="0.49" stroke-width="1.3"/><path d="M828 508Q827 493 842 483" stroke-opacity="0.44" stroke-width="1.1"/><path d="M867 536Q865 527 876 521" stroke-opacity="0.34" stroke-width="1.1"/><path d="M818 511Q814 500 824 492" stroke-opacity="0.44" stroke-width="1.3"/><path d="M993 528Q991 514 1006 504" stroke-opacity="0.40" stroke-width="1.1"/><path d="M911 578Q907 565 919 556" stroke-opacity="0.31" stroke-width="2.0"/><path d="M645 528Q644 514 652 505" stroke-opacity="0.44" stroke-width="1.3"/><path d="M496 576Q492 562 509 553" stroke-opacity="0.49" stroke-width="1.6"/><path d="M497 583Q496 568 506 558" stroke-opacity="0.40" stroke-width="1.6"/><path d="M494 523Q491 507 503 496" stroke-opacity="0.27" stroke-width="1.6"/><path d="M552 567Q551 556 563 549" stroke-opacity="0.49" stroke-width="1.2"/><path d="M669 568Q667 558 680 552" stroke-opacity="0.41" stroke-width="1.3"/><path d="M856 528Q855 517 867 510" stroke-opacity="0.29" stroke-width="1.2"/><path d="M590 566Q589 553 603 544" stroke-opacity="0.31" stroke-width="1.5"/><path d="M483 533Q481 520 492 511" stroke-opacity="0.30" stroke-width="1.4"/><path d="M836 523Q832 509 846 500" stroke-opacity="0.28" stroke-width="1.7"/><path d="M908 559Q906 544 921 534" stroke-opacity="0.46" stroke-width="1.6"/><path d="M756 519Q753 508 763 500" stroke-opacity="0.35" stroke-width="1.3"/><path d="M773 571Q772 561 783 555" stroke-opacity="0.30" stroke-width="1.6"/><path d="M583 511Q579 500 589 493" stroke-opacity="0.26" stroke-width="1.8"/><path d="M930 573Q929 564 935 557" stroke-opacity="0.34" stroke-width="1.3"/><path d="M844 547Q841 536 851 528" stroke-opacity="0.43" stroke-width="1.9"/><path d="M500 523Q498 510 509 502" stroke-opacity="0.38" stroke-width="1.3"/><path d="M541 539Q539 523 550 512" stroke-opacity="0.45" stroke-width="1.6"/><path d="M660 578Q657 566 675 557" stroke-opacity="0.37" stroke-width="1.5"/><path d="M917 554Q916 542 927 533" stroke-opacity="0.34" stroke-width="1.1"/><path d="M572 525Q570 517 581 512" stroke-opacity="0.45" stroke-width="1.5"/><path d="M751 524Q748 508 763 497" stroke-opacity="0.44" stroke-width="1.9"/><path d="M999 544Q996 533 1010 526" stroke-opacity="0.30" stroke-width="1.5"/><path d="M639 526Q637 511 650 501" stroke-opacity="0.33" stroke-width="1.1"/><path d="M886 566Q883 553 898 544" stroke-opacity="0.38" stroke-width="1.8"/><path d="M888 552Q884 538 897 528" stroke-opacity="0.46" stroke-width="1.0"/><path d="M612 537Q611 524 624 515" stroke-opacity="0.48" stroke-width="1.3"/><path d="M609 516Q609 504 616 496" stroke-opacity="0.39" stroke-width="1.5"/><path d="M510 577Q507 568 519 561" stroke-opacity="0.32" stroke-width="1.1"/><path d="M758 528Q755 516 770 508" stroke-opacity="0.28" stroke-width="1.5"/><path d="M688 541Q684 529 695 521" stroke-opacity="0.43" stroke-width="1.6"/><path d="M838 556Q837 543 846 534" stroke-opacity="0.38" stroke-width="1.5"/><path d="M616 535Q614 519 628 508" stroke-opacity="0.28" stroke-width="1.6"/><path d="M621 524Q620 513 629 506" stroke-opacity="0.35" stroke-width="1.9"/><path d="M561 573Q558 562 572 554" stroke-opacity="0.31" stroke-width="1.9"/><path d="M811 562Q811 550 822 543" stroke-opacity="0.44" stroke-width="2.0"/><path d="M662 529Q661 515 677 505" stroke-opacity="0.36" stroke-width="1.4"/><path d="M973 522Q970 512 979 505" stroke-opacity="0.35" stroke-width="1.4"/><path d="M719 509Q715 498 728 490" stroke-opacity="0.37" stroke-width="1.9"/><path d="M820 580Q815 565 832 554" stroke-opacity="0.26" stroke-width="1.6"/><path d="M918 532Q916 523 927 517" stroke-opacity="0.37" stroke-width="1.1"/><path d="M768 551Q764 538 782 530" stroke-opacity="0.46" stroke-width="1.3"/><path d="M696 533Q692 518 708 508" stroke-opacity="0.37" stroke-width="1.1"/><path d="M488 510Q484 499 497 491" stroke-opacity="0.28" stroke-width="1.9"/><path d="M763 582Q761 571 776 564" stroke-opacity="0.35" stroke-width="1.1"/><path d="M557 568Q553 554 567 544" stroke-opacity="0.41" stroke-width="1.9"/><path d="M609 584Q606 570 618 562" stroke-opacity="0.43" stroke-width="1.9"/><path d="M586 525Q583 515 592 508" stroke-opacity="0.35" stroke-width="1.2"/><path d="M825 525Q821 514 833 507" stroke-opacity="0.26" stroke-width="1.1"/><path d="M483 559Q482 550 489 544" stroke-opacity="0.40" stroke-width="1.3"/><path d="M689 539Q686 528 696 520" stroke-opacity="0.29" stroke-width="1.2"/><path d="M652 514Q650 500 661 491" stroke-opacity="0.42" stroke-width="1.5"/><path d="M865 567Q861 554 873 546" stroke-opacity="0.42" stroke-width="1.4"/><path d="M631 513Q629 504 641 498" stroke-opacity="0.46" stroke-width="1.8"/><path d="M609 524Q607 507 620 496" stroke-opacity="0.48" stroke-width="1.5"/><path d="M701 581Q699 567 716 558" stroke-opacity="0.31" stroke-width="1.0"/><path d="M491 578Q491 566 504 559" stroke-opacity="0.31" stroke-width="2.0"/><path d="M622 520Q622 511 633 505" stroke-opacity="0.34" stroke-width="1.5"/><path d="M908 569Q905 553 920 542" stroke-opacity="0.38" stroke-width="1.9"/><path d="M799 574Q799 564 807 558" stroke-opacity="0.39" stroke-width="1.8"/><path d="M900 541Q897 527 912 518" stroke-opacity="0.38" stroke-width="1.8"/><path d="M938 583Q937 572 948 565" stroke-opacity="0.46" stroke-width="1.2"/><path d="M723 526Q718 512 736 502" stroke-opacity="0.28" stroke-width="1.1"/><path d="M787 566Q786 555 794 547" stroke-opacity="0.40" stroke-width="1.4"/><path d="M621 533Q618 524 630 517" stroke-opacity="0.43" stroke-width="1.5"/><path d="M599 528Q599 515 613 507" stroke-opacity="0.29" stroke-width="1.3"/><path d="M532 521Q531 510 542 503" stroke-opacity="0.40" stroke-width="1.1"/><path d="M676 517Q674 507 685 500" stroke-opacity="0.29" stroke-width="1.3"/><path d="M946 555Q943 542 956 532" stroke-opacity="0.44" stroke-width="1.0"/><path d="M820 581Q816 566 828 556" stroke-opacity="0.45" stroke-width="1.2"/><path d="M699 557Q698 542 709 533" stroke-opacity="0.48" stroke-width="1.5"/><path d="M686 559Q685 545 700 535" stroke-opacity="0.45" stroke-width="2.0"/><path d="M610 558Q608 548 616 541" stroke-opacity="0.49" stroke-width="1.3"/><path d="M641 578Q637 563 656 553" stroke-opacity="0.46" stroke-width="1.1"/><path d="M485 511Q485 499 493 492" stroke-opacity="0.36" stroke-width="1.9"/><path d="M734 535Q731 523 740 515" stroke-opacity="0.49" stroke-width="2.0"/><path d="M964 514Q961 503 976 495" stroke-opacity="0.27" stroke-width="1.2"/><path d="M524 564Q520 551 538 543" stroke-opacity="0.43" stroke-width="1.8"/><path d="M573 512Q569 497 588 487" stroke-opacity="0.30" stroke-width="1.7"/><path d="M569 540Q567 530 575 523" stroke-opacity="0.39" stroke-width="1.8"/><path d="M482 534Q479 525 489 519" stroke-opacity="0.33" stroke-width="2.0"/><path d="M818 558Q816 544 826 535" stroke-opacity="0.49" stroke-width="1.1"/><path d="M916 533Q916 523 925 517" stroke-opacity="0.29" stroke-width="1.2"/><path d="M740 522Q736 511 753 504" stroke-opacity="0.36" stroke-width="1.2"/><path d="M567 552Q564 536 579 525" stroke-opacity="0.42" stroke-width="1.9"/><path d="M983 532Q981 523 992 517" stroke-opacity="0.47" stroke-width="1.1"/><path d="M890 515Q888 505 896 499" stroke-opacity="0.35" stroke-width="1.7"/><path d="M968 540Q965 526 978 518" stroke-opacity="0.32" stroke-width="1.0"/><path d="M613 562Q610 548 626 539" stroke-opacity="0.35" stroke-width="1.2"/><path d="M606 584Q604 571 616 562" stroke-opacity="0.37" stroke-width="1.3"/><path d="M697 540Q694 525 713 516" stroke-opacity="0.36" stroke-width="1.2"/><path d="M975 517Q973 503 982 495" stroke-opacity="0.36" stroke-width="1.0"/><path d="M559 545Q555 532 568 524" stroke-opacity="0.33" stroke-width="1.3"/><path d="M534 553Q533 543 542 536" stroke-opacity="0.25" stroke-width="1.5"/><path d="M811 576Q810 563 825 554" stroke-opacity="0.31" stroke-width="1.8"/><path d="M873 544Q872 527 882 515" stroke-opacity="0.34" stroke-width="1.5"/><path d="M894 519Q890 506 901 497" stroke-opacity="0.49" stroke-width="1.2"/><path d="M702 515Q701 500 715 489" stroke-opacity="0.32" stroke-width="1.5"/><path d="M608 552Q606 538 620 529" stroke-opacity="0.33" stroke-width="2.0"/><path d="M490 519Q489 507 504 499" stroke-opacity="0.31" stroke-width="1.9"/><path d="M717 551Q717 537 729 529" stroke-opacity="0.47" stroke-width="1.3"/><path d="M944 531Q942 516 953 506" stroke-opacity="0.33" stroke-width="2.0"/><path d="M826 536Q824 519 836 507" stroke-opacity="0.41" stroke-width="1.0"/><path d="M719 515Q717 497 729 486" stroke-opacity="0.39" stroke-width="1.1"/><path d="M966 551Q962 537 975 528" stroke-opacity="0.33" stroke-width="1.0"/><path d="M585 545Q581 534 595 527" stroke-opacity="0.30" stroke-width="1.5"/><path d="M837 531Q835 520 844 513" stroke-opacity="0.34" stroke-width="1.8"/><path d="M605 533Q601 517 614 507" stroke-opacity="0.49" stroke-width="1.9"/><path d="M644 528Q643 515 652 507" stroke-opacity="0.47" stroke-width="1.7"/><path d="M688 572Q686 555 698 543" stroke-opacity="0.29" stroke-width="2.0"/><path d="M894 538Q890 523 904 513" stroke-opacity="0.38" stroke-width="1.1"/><path d="M718 573Q714 559 727 550" stroke-opacity="0.39" stroke-width="1.5"/><path d="M950 519Q947 507 959 499" stroke-opacity="0.30" stroke-width="1.4"/><path d="M762 521Q762 510 771 503" stroke-opacity="0.37" stroke-width="1.3"/><path d="M498 546Q496 535 505 527" stroke-opacity="0.40" stroke-width="1.4"/><path d="M862 555Q861 546 867 540" stroke-opacity="0.40" stroke-width="1.6"/><path d="M599 533Q597 518 610 509" stroke-opacity="0.31" stroke-width="1.6"/><path d="M729 506Q729 493 743 484" stroke-opacity="0.49" stroke-width="1.7"/><path d="M723 527Q720 513 734 503" stroke-opacity="0.28" stroke-width="1.6"/><path d="M849 566Q848 556 856 549" stroke-opacity="0.28" stroke-width="1.9"/><path d="M962 555Q961 545 971 538" stroke-opacity="0.34" stroke-width="1.6"/><path d="M793 577Q790 563 806 554" stroke-opacity="0.47" stroke-width="1.6"/><path d="M838 530Q835 521 846 515" stroke-opacity="0.49" stroke-width="1.2"/><path d="M946 532Q943 522 954 516" stroke-opacity="0.50" stroke-width="1.6"/><path d="M533 530Q531 521 540 515" stroke-opacity="0.33" stroke-width="1.7"/><path d="M711 570Q710 556 721 546" stroke-opacity="0.26" stroke-width="1.2"/><path d="M495 580Q494 569 507 561" stroke-opacity="0.27" stroke-width="1.9"/><path d="M491 561Q490 546 502 536" stroke-opacity="0.44" stroke-width="1.5"/><path d="M626 518Q624 510 633 504" stroke-opacity="0.30" stroke-width="1.5"/><path d="M521 530Q519 515 530 505" stroke-opacity="0.28" stroke-width="1.9"/><path d="M590 579Q587 565 606 555" stroke-opacity="0.42" stroke-width="1.1"/><path d="M985 560Q982 551 991 545" stroke-opacity="0.34" stroke-width="1.9"/><path d="M890 531Q888 515 899 504" stroke-opacity="0.35" stroke-width="1.1"/><path d="M958 557Q956 541 972 531" stroke-opacity="0.28" stroke-width="1.5"/><path d="M946 550Q943 536 957 527" stroke-opacity="0.25" stroke-width="1.2"/><path d="M577 513Q577 505 585 500" stroke-opacity="0.42" stroke-width="1.8"/><path d="M589 572Q586 562 600 555" stroke-opacity="0.32" stroke-width="1.5"/><path d="M596 526Q596 513 610 504" stroke-opacity="0.41" stroke-width="1.4"/><path d="M724 552Q722 540 737 532" stroke-opacity="0.49" stroke-width="1.5"/><path d="M712 508Q708 497 721 490" stroke-opacity="0.36" stroke-width="1.1"/><path d="M619 575Q617 558 629 547" stroke-opacity="0.37" stroke-width="1.1"/><path d="M635 548Q631 536 645 528" stroke-opacity="0.40" stroke-width="1.6"/><path d="M579 550Q577 536 594 526" stroke-opacity="0.38" stroke-width="1.7"/><path d="M716 561Q715 550 725 543" stroke-opacity="0.40" stroke-width="1.6"/><path d="M680 533Q677 520 690 510" stroke-opacity="0.34" stroke-width="1.3"/><path d="M805 574Q804 565 814 559" stroke-opacity="0.41" stroke-width="1.7"/><path d="M688 507Q686 496 697 488" stroke-opacity="0.48" stroke-width="1.7"/><path d="M820 533Q819 518 829 507" stroke-opacity="0.37" stroke-width="1.5"/><path d="M840 548Q836 531 850 519" stroke-opacity="0.40" stroke-width="1.2"/><path d="M598 584Q595 571 607 562" stroke-opacity="0.31" stroke-width="1.3"/><path d="M550 582Q546 568 561 558" stroke-opacity="0.49" stroke-width="1.9"/><path d="M529 574Q527 563 542 555" stroke-opacity="0.36" stroke-width="1.0"/><path d="M780 525Q779 508 790 498" stroke-opacity="0.33" stroke-width="1.8"/><path d="M851 579Q848 566 861 557" stroke-opacity="0.31" stroke-width="1.1"/><path d="M636 531Q633 514 644 504" stroke-opacity="0.38" stroke-width="1.2"/><path d="M841 522Q840 507 850 497" stroke-opacity="0.33" stroke-width="1.1"/><path d="M558 522Q558 512 565 506" stroke-opacity="0.34" stroke-width="1.4"/><path d="M872 512Q869 504 880 498" stroke-opacity="0.29" stroke-width="1.2"/><path d="M867 582Q864 571 877 564" stroke-opacity="0.30" stroke-width="1.3"/><path d="M656 526Q653 510 665 499" stroke-opacity="0.43" stroke-width="1.0"/><path d="M981 554Q978 540 990 530" stroke-opacity="0.46" stroke-width="2.0"/><path d="M488 570Q486 559 494 552" stroke-opacity="0.27" stroke-width="1.8"/><path d="M919 528Q918 519 927 513" stroke-opacity="0.26" stroke-width="1.7"/><path d="M544 535Q542 525 550 518" stroke-opacity="0.32" stroke-width="1.9"/><path d="M950 563Q947 551 961 543" stroke-opacity="0.37" stroke-width="1.5"/><path d="M699 541Q697 527 715 518" stroke-opacity="0.46" stroke-width="1.3"/><path d="M519 523Q517 512 530 504" stroke-opacity="0.48" stroke-width="1.8"/><path d="M635 510Q635 498 644 489" stroke-opacity="0.48" stroke-width="1.5"/><path d="M882 563Q882 550 892 542" stroke-opacity="0.45" stroke-width="1.6"/><path d="M993 518Q990 503 1005 494" stroke-opacity="0.28" stroke-width="1.6"/><path d="M932 520Q928 506 948 497" stroke-opacity="0.39" stroke-width="1.5"/><path d="M655 515Q654 506 665 500" stroke-opacity="0.49" stroke-width="1.5"/><path d="M740 511Q739 499 750 492" stroke-opacity="0.27" stroke-width="1.7"/><path d="M504 582Q503 572 513 566" stroke-opacity="0.30" stroke-width="1.5"/><path d="M700 520Q699 508 707 499" stroke-opacity="0.49" stroke-width="1.5"/><path d="M688 546Q687 537 696 531" stroke-opacity="0.28" stroke-width="1.4"/><path d="M544 561Q540 553 552 548" stroke-opacity="0.46" stroke-width="1.2"/><path d="M755 561Q751 547 771 537" stroke-opacity="0.43" stroke-width="1.4"/><path d="M567 542Q565 525 576 513" stroke-opacity="0.39" stroke-width="1.9"/><path d="M727 525Q725 509 737 498" stroke-opacity="0.32" stroke-width="1.1"/><path d="M567 572Q564 564 577 558" stroke-opacity="0.48" stroke-width="1.1"/><path d="M823 548Q819 536 836 528" stroke-opacity="0.50" stroke-width="1.6"/><path d="M901 526Q898 510 916 500" stroke-opacity="0.30" stroke-width="1.9"/><path d="M771 583Q770 569 786 559" stroke-opacity="0.29" stroke-width="1.8"/><path d="M852 514Q849 504 857 498" stroke-opacity="0.44" stroke-width="1.8"/><path d="M841 535Q838 518 852 506" stroke-opacity="0.36" stroke-width="1.3"/><path d="M863 571Q861 556 873 546" stroke-opacity="0.33" stroke-width="1.5"/><path d="M756 518Q755 504 771 494" stroke-opacity="0.27" stroke-width="1.2"/><path d="M870 569Q867 557 883 549" stroke-opacity="0.31" stroke-width="1.5"/><path d="M637 536Q635 521 647 510" stroke-opacity="0.40" stroke-width="1.0"/><path d="M745 574Q744 561 759 553" stroke-opacity="0.50" stroke-width="1.0"/><path d="M701 521Q699 506 711 496" stroke-opacity="0.41" stroke-width="1.0"/><path d="M799 532Q798 522 808 515" stroke-opacity="0.30" stroke-width="1.7"/><path d="M519 510Q518 496 535 487" stroke-opacity="0.50" stroke-width="1.7"/><path d="M776 547Q775 536 788 529" stroke-opacity="0.36" stroke-width="1.2"/><path d="M760 539Q758 526 774 517" stroke-opacity="0.27" stroke-width="1.5"/><path d="M547 548Q544 534 560 524" stroke-opacity="0.29" stroke-width="1.9"/><path d="M933 544Q931 536 941 530" stroke-opacity="0.35" stroke-width="1.4"/><path d="M623 517Q620 503 634 494" stroke-opacity="0.44" stroke-width="1.5"/><path d="M564 527Q562 515 575 506" stroke-opacity="0.44" stroke-width="1.4"/><path d="M879 551Q877 540 885 533" stroke-opacity="0.46" stroke-width="2.0"/><path d="M905 570Q902 556 914 547" stroke-opacity="0.47" stroke-width="1.3"/><path d="M732 549Q729 540 737 534" stroke-opacity="0.45" stroke-width="1.8"/><path d="M525 519Q524 501 536 490" stroke-opacity="0.40" stroke-width="1.9"/><path d="M863 514Q859 500 876 491" stroke-opacity="0.49" stroke-width="1.3"/><path d="M721 547Q718 534 732 526" stroke-opacity="0.46" stroke-width="1.5"/><path d="M531 545Q530 535 539 529" stroke-opacity="0.44" stroke-width="1.2"/><path d="M630 582Q628 567 638 558" stroke-opacity="0.31" stroke-width="1.1"/><path d="M822 515Q822 506 831 500" stroke-opacity="0.27" stroke-width="1.7"/><path d="M554 511Q553 501 559 495" stroke-opacity="0.48" stroke-width="1.0"/><path d="M558 510Q555 498 567 490" stroke-opacity="0.45" stroke-width="1.1"/><path d="M809 517Q805 503 817 493" stroke-opacity="0.50" stroke-width="1.3"/><path d="M715 558Q710 541 728 530" stroke-opacity="0.42" stroke-width="1.7"/><path d="M784 536Q782 520 793 509" stroke-opacity="0.39" stroke-width="1.9"/><path d="M885 525Q883 514 895 506" stroke-opacity="0.27" stroke-width="2.0"/><path d="M716 517Q716 507 722 500" stroke-opacity="0.28" stroke-width="1.6"/><path d="M971 566Q970 552 981 543" stroke-opacity="0.45" stroke-width="1.2"/><path d="M599 538Q597 526 612 518" stroke-opacity="0.32" stroke-width="1.7"/><path d="M558 514Q557 506 565 501" stroke-opacity="0.37" stroke-width="1.6"/><path d="M578 522Q575 509 588 500" stroke-opacity="0.48" stroke-width="1.5"/><path d="M867 511Q863 497 874 489" stroke-opacity="0.30" stroke-width="1.4"/><path d="M563 579Q559 568 570 560" stroke-opacity="0.34" stroke-width="1.8"/><path d="M764 576Q761 563 776 554" stroke-opacity="0.46" stroke-width="1.4"/><path d="M552 523Q549 508 561 497" stroke-opacity="0.41" stroke-width="1.7"/><path d="M722 557Q718 545 732 538" stroke-opacity="0.35" stroke-width="2.0"/><path d="M779 533Q777 521 793 513" stroke-opacity="0.35" stroke-width="1.8"/><path d="M922 524Q919 509 932 500" stroke-opacity="0.45" stroke-width="1.4"/><path d="M955 544Q953 528 965 517" stroke-opacity="0.26" stroke-width="1.9"/><path d="M943 544Q940 533 955 526" stroke-opacity="0.33" stroke-width="1.1"/><path d="M958 569Q957 557 969 549" stroke-opacity="0.42" stroke-width="1.1"/><path d="M817 574Q816 562 827 554" stroke-opacity="0.30" stroke-width="1.2"/><path d="M834 583Q832 575 842 569" stroke-opacity="0.26" stroke-width="1.2"/><path d="M639 560Q637 550 646 544" stroke-opacity="0.44" stroke-width="2.0"/><path d="M916 521Q914 508 927 500" stroke-opacity="0.40" stroke-width="1.4"/><path d="M604 558Q602 543 618 533" stroke-opacity="0.49" stroke-width="1.3"/><path d="M779 571Q777 556 787 546" stroke-opacity="0.45" stroke-width="1.2"/><path d="M685 583Q683 571 695 563" stroke-opacity="0.46" stroke-width="1.5"/><path d="M947 561Q944 550 957 542" stroke-opacity="0.26" stroke-width="1.5"/><path d="M504 529Q500 516 519 507" stroke-opacity="0.29" stroke-width="1.4"/><path d="M714 517Q712 501 724 491" stroke-opacity="0.32" stroke-width="1.6"/><path d="M540 545Q537 528 549 517" stroke-opacity="0.27" stroke-width="1.8"/><path d="M829 525Q826 508 839 497" stroke-opacity="0.43" stroke-width="1.6"/><path d="M514 510Q514 501 524 495" stroke-opacity="0.33" stroke-width="1.0"/><path d="M810 521Q809 507 826 498" stroke-opacity="0.44" stroke-width="1.8"/><path d="M913 536Q911 520 921 510" stroke-opacity="0.36" stroke-width="2.0"/><path d="M888 541Q887 528 900 518" stroke-opacity="0.25" stroke-width="1.2"/><path d="M614 561Q612 546 628 535" stroke-opacity="0.41" stroke-width="1.1"/><path d="M613 551Q611 537 624 527" stroke-opacity="0.33" stroke-width="1.3"/><path d="M568 538Q567 524 576 515" stroke-opacity="0.25" stroke-width="1.7"/><path d="M660 579Q659 568 666 560" stroke-opacity="0.34" stroke-width="1.8"/><path d="M827 540Q824 527 839 519" stroke-opacity="0.30" stroke-width="1.7"/><path d="M776 510Q772 500 783 494" stroke-opacity="0.38" stroke-width="1.4"/><path d="M634 565Q632 549 642 539" stroke-opacity="0.50" stroke-width="1.6"/><path d="M992 524Q989 514 999 507" stroke-opacity="0.29" stroke-width="1.3"/><path d="M741 569Q739 554 749 543" stroke-opacity="0.41" stroke-width="1.3"/><path d="M484 573Q481 563 490 557" stroke-opacity="0.45" stroke-width="1.9"/><path d="M956 572Q952 557 968 547" stroke-opacity="0.31" stroke-width="1.1"/><path d="M540 517Q537 505 547 497" stroke-opacity="0.46" stroke-width="1.2"/><path d="M745 572Q743 564 752 559" stroke-opacity="0.26" stroke-width="1.9"/><path d="M894 514Q892 498 907 488" stroke-opacity="0.30" stroke-width="1.0"/><path d="M847 562Q845 551 852 544" stroke-opacity="0.33" stroke-width="1.3"/><path d="M931 550Q930 541 940 536" stroke-opacity="0.39" stroke-width="2.0"/><path d="M727 557Q725 548 734 542" stroke-opacity="0.36" stroke-width="1.5"/><path d="M540 560Q538 551 546 545" stroke-opacity="0.26" stroke-width="1.3"/><path d="M901 563Q900 551 908 543" stroke-opacity="0.47" stroke-width="1.1"/><path d="M698 549Q696 534 707 524" stroke-opacity="0.40" stroke-width="1.8"/><path d="M973 559Q970 545 983 536" stroke-opacity="0.34" stroke-width="1.8"/><path d="M790 528Q789 512 803 502" stroke-opacity="0.41" stroke-width="1.7"/><path d="M659 583Q657 572 670 564" stroke-opacity="0.38" stroke-width="1.2"/><path d="M672 538Q668 523 681 513" stroke-opacity="0.41" stroke-width="1.5"/><path d="M939 508Q938 497 950 489" stroke-opacity="0.34" stroke-width="1.5"/><path d="M686 506Q686 497 692 491" stroke-opacity="0.30" stroke-width="1.3"/><path d="M770 560Q767 546 780 537" stroke-opacity="0.25" stroke-width="1.8"/><path d="M676 529Q673 519 684 512" stroke-opacity="0.33" stroke-width="1.1"/><path d="M579 547Q578 535 586 528" stroke-opacity="0.26" stroke-width="1.4"/><path d="M632 511Q631 500 641 493" stroke-opacity="0.31" stroke-width="1.4"/><path d="M948 556Q947 543 956 535" stroke-opacity="0.48" stroke-width="1.2"/><path d="M922 535Q919 522 929 513" stroke-opacity="0.31" stroke-width="1.2"/><path d="M910 580Q907 570 920 563" stroke-opacity="0.40" stroke-width="1.2"/><path d="M953 546Q951 534 965 526" stroke-opacity="0.37" stroke-width="1.7"/><path d="M727 551Q723 540 733 532" stroke-opacity="0.49" stroke-width="1.6"/><path d="M490 521Q489 508 500 499" stroke-opacity="0.48" stroke-width="1.1"/><path d="M899 583Q896 570 914 561" stroke-opacity="0.41" stroke-width="1.7"/><path d="M894 562Q893 546 905 536" stroke-opacity="0.40" stroke-width="2.0"/></g>
</g>
<g stroke="#2a9a2a" fill="none" filter="url(#blur1b)"><path d="M655 554Q654 543 665 536" stroke-opacity="0.12" stroke-width="1.7"/><path d="M652 556Q649 551 656 547" stroke-opacity="0.13" stroke-width="1.8"/><path d="M769 559Q767 547 777 539" stroke-opacity="0.23" stroke-width="2.1"/><path d="M959 559Q957 553 963 549" stroke-opacity="0.17" stroke-width="1.8"/><path d="M929 569Q930 564 936 560" stroke-opacity="0.16" stroke-width="2.4"/><path d="M972 560Q972 553 979 548" stroke-opacity="0.15" stroke-width="2.0"/><path d="M535 529Q534 517 542 510" stroke-opacity="0.16" stroke-width="2.2"/><path d="M635 525Q633 514 642 507" stroke-opacity="0.17" stroke-width="2.0"/><path d="M944 558Q943 550 951 544" stroke-opacity="0.12" stroke-width="1.8"/><path d="M798 572Q798 562 804 555" stroke-opacity="0.22" stroke-width="1.7"/><path d="M677 522Q678 511 684 503" stroke-opacity="0.21" stroke-width="2.3"/><path d="M777 533Q775 528 782 525" stroke-opacity="0.18" stroke-width="2.3"/><path d="M561 544Q559 534 566 528" stroke-opacity="0.19" stroke-width="1.7"/><path d="M567 532Q564 521 579 514" stroke-opacity="0.19" stroke-width="1.9"/><path d="M505 534Q506 523 510 516" stroke-opacity="0.14" stroke-width="1.8"/><path d="M974 528Q972 522 979 518" stroke-opacity="0.15" stroke-width="2.1"/><path d="M974 543Q975 537 979 534" stroke-opacity="0.16" stroke-width="1.6"/><path d="M617 532Q616 525 622 519" stroke-opacity="0.21" stroke-width="1.5"/><path d="M563 565Q561 555 574 547" stroke-opacity="0.20" stroke-width="1.6"/><path d="M834 532Q833 522 845 515" stroke-opacity="0.21" stroke-width="2.4"/><path d="M945 556Q945 546 952 539" stroke-opacity="0.12" stroke-width="2.0"/><path d="M532 525Q530 515 540 508" stroke-opacity="0.24" stroke-width="1.8"/><path d="M765 547Q765 541 771 537" stroke-opacity="0.23" stroke-width="1.8"/><path d="M954 570Q952 557 962 549" stroke-opacity="0.11" stroke-width="1.6"/><path d="M847 523Q847 514 854 508" stroke-opacity="0.11" stroke-width="2.2"/><path d="M979 536Q977 529 986 524" stroke-opacity="0.23" stroke-width="2.5"/><path d="M603 546Q601 540 608 536" stroke-opacity="0.25" stroke-width="2.2"/><path d="M996 565Q996 553 1004 546" stroke-opacity="0.12" stroke-width="1.8"/><path d="M960 574Q958 568 965 563" stroke-opacity="0.19" stroke-width="2.1"/><path d="M622 568Q622 561 630 555" stroke-opacity="0.25" stroke-width="2.0"/><path d="M790 562Q790 555 794 550" stroke-opacity="0.20" stroke-width="2.2"/><path d="M898 531Q899 520 908 513" stroke-opacity="0.18" stroke-width="2.4"/><path d="M518 529Q517 520 526 515" stroke-opacity="0.11" stroke-width="2.4"/><path d="M526 569Q525 562 532 558" stroke-opacity="0.14" stroke-width="1.8"/><path d="M612 549Q610 542 618 538" stroke-opacity="0.12" stroke-width="2.2"/><path d="M623 572Q623 564 628 558" stroke-opacity="0.24" stroke-width="1.9"/><path d="M864 538Q861 525 873 517" stroke-opacity="0.10" stroke-width="2.0"/><path d="M808 536Q807 527 814 522" stroke-opacity="0.13" stroke-width="2.0"/><path d="M829 521Q828 509 837 501" stroke-opacity="0.13" stroke-width="2.2"/><path d="M696 552Q694 544 703 539" stroke-opacity="0.25" stroke-width="1.9"/><path d="M658 567Q657 560 665 555" stroke-opacity="0.12" stroke-width="2.1"/><path d="M632 531Q631 520 645 513" stroke-opacity="0.22" stroke-width="2.2"/><path d="M644 527Q644 517 650 511" stroke-opacity="0.19" stroke-width="1.7"/><path d="M886 573Q885 566 895 561" stroke-opacity="0.10" stroke-width="2.0"/><path d="M669 570Q667 563 678 557" stroke-opacity="0.16" stroke-width="1.5"/><path d="M515 559Q514 553 519 550" stroke-opacity="0.24" stroke-width="1.7"/><path d="M491 559Q492 548 498 541" stroke-opacity="0.23" stroke-width="2.4"/><path d="M910 550Q909 539 916 532" stroke-opacity="0.15" stroke-width="1.8"/><path d="M649 524Q646 514 659 507" stroke-opacity="0.18" stroke-width="1.5"/><path d="M768 529Q767 517 776 508" stroke-opacity="0.14" stroke-width="2.4"/><path d="M493 537Q492 530 499 526" stroke-opacity="0.23" stroke-width="1.8"/><path d="M553 545Q552 539 557 535" stroke-opacity="0.19" stroke-width="1.7"/><path d="M581 549Q581 540 588 535" stroke-opacity="0.12" stroke-width="1.5"/><path d="M522 564Q520 553 529 546" stroke-opacity="0.15" stroke-width="2.4"/><path d="M700 559Q698 553 703 549" stroke-opacity="0.20" stroke-width="1.9"/><path d="M935 565Q936 557 945 551" stroke-opacity="0.23" stroke-width="1.6"/><path d="M693 528Q691 518 701 512" stroke-opacity="0.11" stroke-width="2.0"/><path d="M808 542Q808 534 816 529" stroke-opacity="0.21" stroke-width="1.9"/><path d="M577 568Q575 562 580 558" stroke-opacity="0.19" stroke-width="2.1"/><path d="M540 548Q537 539 548 534" stroke-opacity="0.21" stroke-width="1.8"/><path d="M686 527Q686 516 695 509" stroke-opacity="0.18" stroke-width="1.6"/><path d="M694 524Q691 519 700 515" stroke-opacity="0.16" stroke-width="1.5"/><path d="M880 574Q880 569 884 565" stroke-opacity="0.14" stroke-width="1.8"/><path d="M993 571Q994 563 1001 558" stroke-opacity="0.15" stroke-width="1.5"/><path d="M680 558Q679 546 690 538" stroke-opacity="0.16" stroke-width="2.1"/><path d="M500 570Q497 557 507 549" stroke-opacity="0.15" stroke-width="1.6"/><path d="M882 568Q880 560 891 554" stroke-opacity="0.13" stroke-width="1.9"/><path d="M720 531Q718 520 730 512" stroke-opacity="0.13" stroke-width="1.8"/><path d="M691 556Q688 546 702 540" stroke-opacity="0.13" stroke-width="1.9"/><path d="M975 545Q974 536 985 529" stroke-opacity="0.16" stroke-width="2.3"/><path d="M816 575Q815 568 823 564" stroke-opacity="0.23" stroke-width="2.1"/><path d="M777 567Q776 561 781 557" stroke-opacity="0.22" stroke-width="1.7"/><path d="M887 525Q887 517 894 512" stroke-opacity="0.18" stroke-width="2.3"/><path d="M843 541Q843 532 850 526" stroke-opacity="0.15" stroke-width="1.7"/><path d="M614 534Q612 523 624 516" stroke-opacity="0.16" stroke-width="2.4"/><path d="M980 532Q981 519 987 511" stroke-opacity="0.15" stroke-width="2.5"/><path d="M505 558Q504 547 516 540" stroke-opacity="0.12" stroke-width="1.7"/><path d="M971 568Q970 561 976 556" stroke-opacity="0.15" stroke-width="1.7"/><path d="M933 526Q932 516 940 510" stroke-opacity="0.23" stroke-width="2.2"/><path d="M885 521Q882 511 895 504" stroke-opacity="0.13" stroke-width="2.2"/><path d="M933 550Q931 537 940 529" stroke-opacity="0.22" stroke-width="2.3"/><path d="M603 551Q602 543 611 538" stroke-opacity="0.15" stroke-width="2.3"/><path d="M845 540Q844 529 852 522" stroke-opacity="0.13" stroke-width="1.8"/><path d="M703 525Q701 517 708 512" stroke-opacity="0.18" stroke-width="2.4"/><path d="M923 536Q924 530 927 525" stroke-opacity="0.21" stroke-width="2.2"/><path d="M953 542Q952 535 957 531" stroke-opacity="0.22" stroke-width="1.6"/><path d="M713 524Q712 518 718 513" stroke-opacity="0.24" stroke-width="1.8"/><path d="M608 523Q605 516 612 512" stroke-opacity="0.12" stroke-width="2.0"/><path d="M722 570Q720 561 728 554" stroke-opacity="0.21" stroke-width="2.5"/><path d="M872 533Q871 525 878 520" stroke-opacity="0.14" stroke-width="1.7"/><path d="M502 568Q501 558 515 551" stroke-opacity="0.20" stroke-width="1.7"/><path d="M547 520Q546 513 554 508" stroke-opacity="0.14" stroke-width="2.0"/><path d="M765 531Q764 523 774 518" stroke-opacity="0.25" stroke-width="2.2"/><path d="M555 571Q552 560 563 553" stroke-opacity="0.20" stroke-width="1.7"/><path d="M725 528Q724 521 733 516" stroke-opacity="0.18" stroke-width="2.1"/><path d="M824 553Q823 546 828 541" stroke-opacity="0.24" stroke-width="2.4"/><path d="M739 536Q738 526 744 519" stroke-opacity="0.22" stroke-width="2.5"/><path d="M536 531Q536 523 543 517" stroke-opacity="0.12" stroke-width="1.6"/><path d="M737 564Q736 558 741 555" stroke-opacity="0.16" stroke-width="1.7"/><path d="M525 562Q525 553 533 547" stroke-opacity="0.21" stroke-width="1.9"/></g>
</g>
<path d="M489 500H508V553H489Z" fill="#b05020" opacity="0.55"/>
<path d="M489.5 535.5H497.5V553" stroke="#703010" stroke-width="0.8" fill="none" opacity="0.6"/>
<rect x="445" y="378" width="44" height="252" fill="#9e9a6a"/>
<path d="M445 378.5H488.5V629.5H445" stroke="#111" stroke-width="1" fill="none"/>
<path d="M445.5 379V629" stroke="#9aa0a8" stroke-width="1"/>
<circle cx="443.5" cy="577" r="1" fill="#6a7a7a"/>
<rect x="455.5" y="384.5" width="23" height="104" fill="#aeac82" stroke="#111" stroke-width="1.2"/>
<rect x="457.5" y="517.5" width="23" height="104" fill="#aeac82" stroke="#111" stroke-width="1.2"/>
<circle cx="476" cy="500.5" r="5.8" fill="#c8c8c8" stroke="#333" stroke-width="0.9"/>

<g stroke="#111" stroke-width="0.9" stroke-linejoin="round">
<!-- mane back spikes -->
<path d="M518 474 L492 476 L506 481 L489 484 L505 488 L490 492 L506 496 L491 500 L507 503 L492 508 L509 511 L496 516 L512 518 L500 523 L516 524 L508 528 L526 527 L530 500Z" fill="#a86a10"/>
<path d="M490 480 L500 483 L491 488 L502 491 L490 496 L500 499" stroke="#1a5aa0" stroke-width="1.2" fill="none"/>
<!-- top spikes -->
<path d="M514 482 L517 466 L522 475 L526 463 L531 474 L535 465 L539 474 L545 466 L548 475 L554 468 L556 476 L562 470 L563 479 L568 476 L562 486 L530 490Z" fill="#a86a10"/>
<!-- eyebrow tuft -->
<path d="M560 479 C572 478 583 483 587.5 492 C580 487 572 486 562 488Z" fill="#a86a10"/>
<!-- head -->
<path d="M516 503 L525 490 L538 485 L552 479 C560 477 566 481 567 489 L568 505 L584 510 C588 511 589 514 586 517 L576 524 C566 530 545 531 528 528 L522 521 Z" fill="#a8a8a8"/>
<!-- white cheek/muzzle -->
<path d="M521 510 L530 512 L540 508 L550 509 L565 509 L584 512 L587 516 L576 524 C566 530 545 531 528 528 L522 521Z" fill="#fff" stroke="none"/>
<path d="M565 509 L584 511 L587 515" fill="none" stroke="#aaa" stroke-width="2"/>
<path d="M528 528 C545 531 566 530 576 524 L586 517" fill="none"/>
<path d="M521 508 L526 506 M524 514 L530 511" stroke="#111" stroke-width="0.7" fill="none"/>
<!-- ear -->
<path d="M501.5 462 L535.5 486.5 L525 492 L516.5 504 C508 492 503 478 501.5 462Z" fill="#fdf7cc"/>
<path d="M502.5 463 L534.5 486" stroke="#bcbcbc" stroke-width="2.2"/>
<path d="M516 484 L532 486 L526 491 L519 496 L517 502 L514 492 L518 490Z" fill="#fff" stroke="#111" stroke-width="0.6"/>
<!-- hair streaks -->
<path d="M535 486 C540 480 548 476 556 476 C550 480 546 484 544 490Z" fill="#2050d0"/>
<path d="M551 478 C557 475 561 477 559 481 C553 489 549 502 547 519 C543 506 543 490 551 478Z" fill="#dcdcdc"/>
<path d="M557 479 C563 484 563 494 561 500 L557 494 C558 488 558 483 557 479Z" fill="#2050d0"/>
<!-- eye -->
<path d="M549 497 C555 494 561 496 561 503 C561 507 560 509 556 509.5 L547 509.5 C547 503 547 500 549 497Z" fill="#fff"/>
<circle cx="559.5" cy="505" r="2.6" fill="#fff" stroke-width="0.7"/>
<circle cx="560.5" cy="508" r="1.4" fill="#10a030" stroke="none"/>
<!-- nose / mouth -->
<path d="M581.5 511 L588 512.5 L585 517.5Z" fill="#111"/>
<path d="M572.5 523 L577.5 522 L576 526.5Z" fill="#c03020" stroke="none"/>
<!-- shirt -->
<path d="M525.5 528.5 L558 529.5 L559.5 564.5 L526 564.5Z" fill="#0a40f0"/>
<path d="M528.5 534 C534 537 545 543 554 548 L555 553 C546 549 534 545 528 540Z" fill="#0a40f0"/>
<path d="M554.5 544 L570 551 L569 556 L554.5 553Z" fill="#9a9a9a"/>
<path d="M567.5 550 C570 546 580 546 584 549 C587 553 586 561 581 563.5 C575 565 569 562 567.5 557Z" fill="#fdf8c8"/>
<path d="M552 536 L555 535 L553.5 538Z" fill="#fff" stroke="none"/>
<!-- pants -->
<path d="M526 564.5 L559.5 564.5 L563.5 599 L558 617 L543 616.5 L543.5 594 L531.5 605.5 L522 605 L517.5 599 L528.5 588Z" fill="#3c9ad0"/>
<path d="M552.5 570.5 L543.5 594" fill="none"/>
<path d="M527.5 565 L535 565 L533 573.5 L528 574Z" fill="#c4c4c4"/>
<!-- feet -->
<path d="M518 598 L524 601 L538 611 C542 615 541 621 537 621.5 C528 619 519 612 516.5 605Z" fill="#8c8c8c"/>
<path d="M542 615.5 L560 615.5 C566 616.5 571 621 570 625.5 C560 627 549 626.5 541 624Z" fill="#8c8c8c"/>
</g>


<g>
<path d="M690 616 L707 610.5 L743 578 L743 566Z" fill="#a0a0a0" stroke="#1a1a1a" stroke-width="0.9"/>
<path d="M777 565 L915 565 L925 578 L765 578Z" fill="#40c040"/>
<circle cx="804" cy="589.5" r="35" fill="#333" stroke="#111" stroke-width="1"/>
<circle cx="804" cy="590" r="12" fill="#c8c8c8"/>
<circle cx="884" cy="589.5" r="35" fill="#333" stroke="#111" stroke-width="1"/>
<circle cx="884" cy="590" r="12" fill="#c8c8c8"/>
<path d="M743.5 406.5 L1000 406.5 L1000 611 L933 611 L915.5 565.5 L777.5 565.5 L743.5 602Z" fill="#fffcc8"/>
<path d="M1000 406.5 L743.5 406.5 L743.5 602 L777.5 565.5 L915.5 565.5 L933 611 L1000 611" fill="none" stroke="#111" stroke-width="1"/>
<rect x="744" y="470" width="256" height="30" fill="#40f040"/>
<text x="794" y="496" font-family="Liberation Serif" font-size="37" fill="#000">Moving Inc.</text>
</g>

</svg>
<svg class="a" style="left:1048px;top:605px" width="24" height="24" viewBox="1048 605 24 24">
<path d="M1061.5 618.5L1068.5 625.5" stroke="#000" stroke-width="4.2" stroke-linecap="round"/>
<path d="M1062.2 619.2L1068.3 625.3" stroke="#fff" stroke-width="2" stroke-linecap="round"/>
<circle cx="1056.8" cy="613.9" r="5.6" fill="#fff" stroke="#000" stroke-width="1.3"/>
<path d="M1053.8 613.9H1059.8M1056.8 610.9V616.9" stroke="#000" stroke-width="2"/>
</svg>
</body></html>
